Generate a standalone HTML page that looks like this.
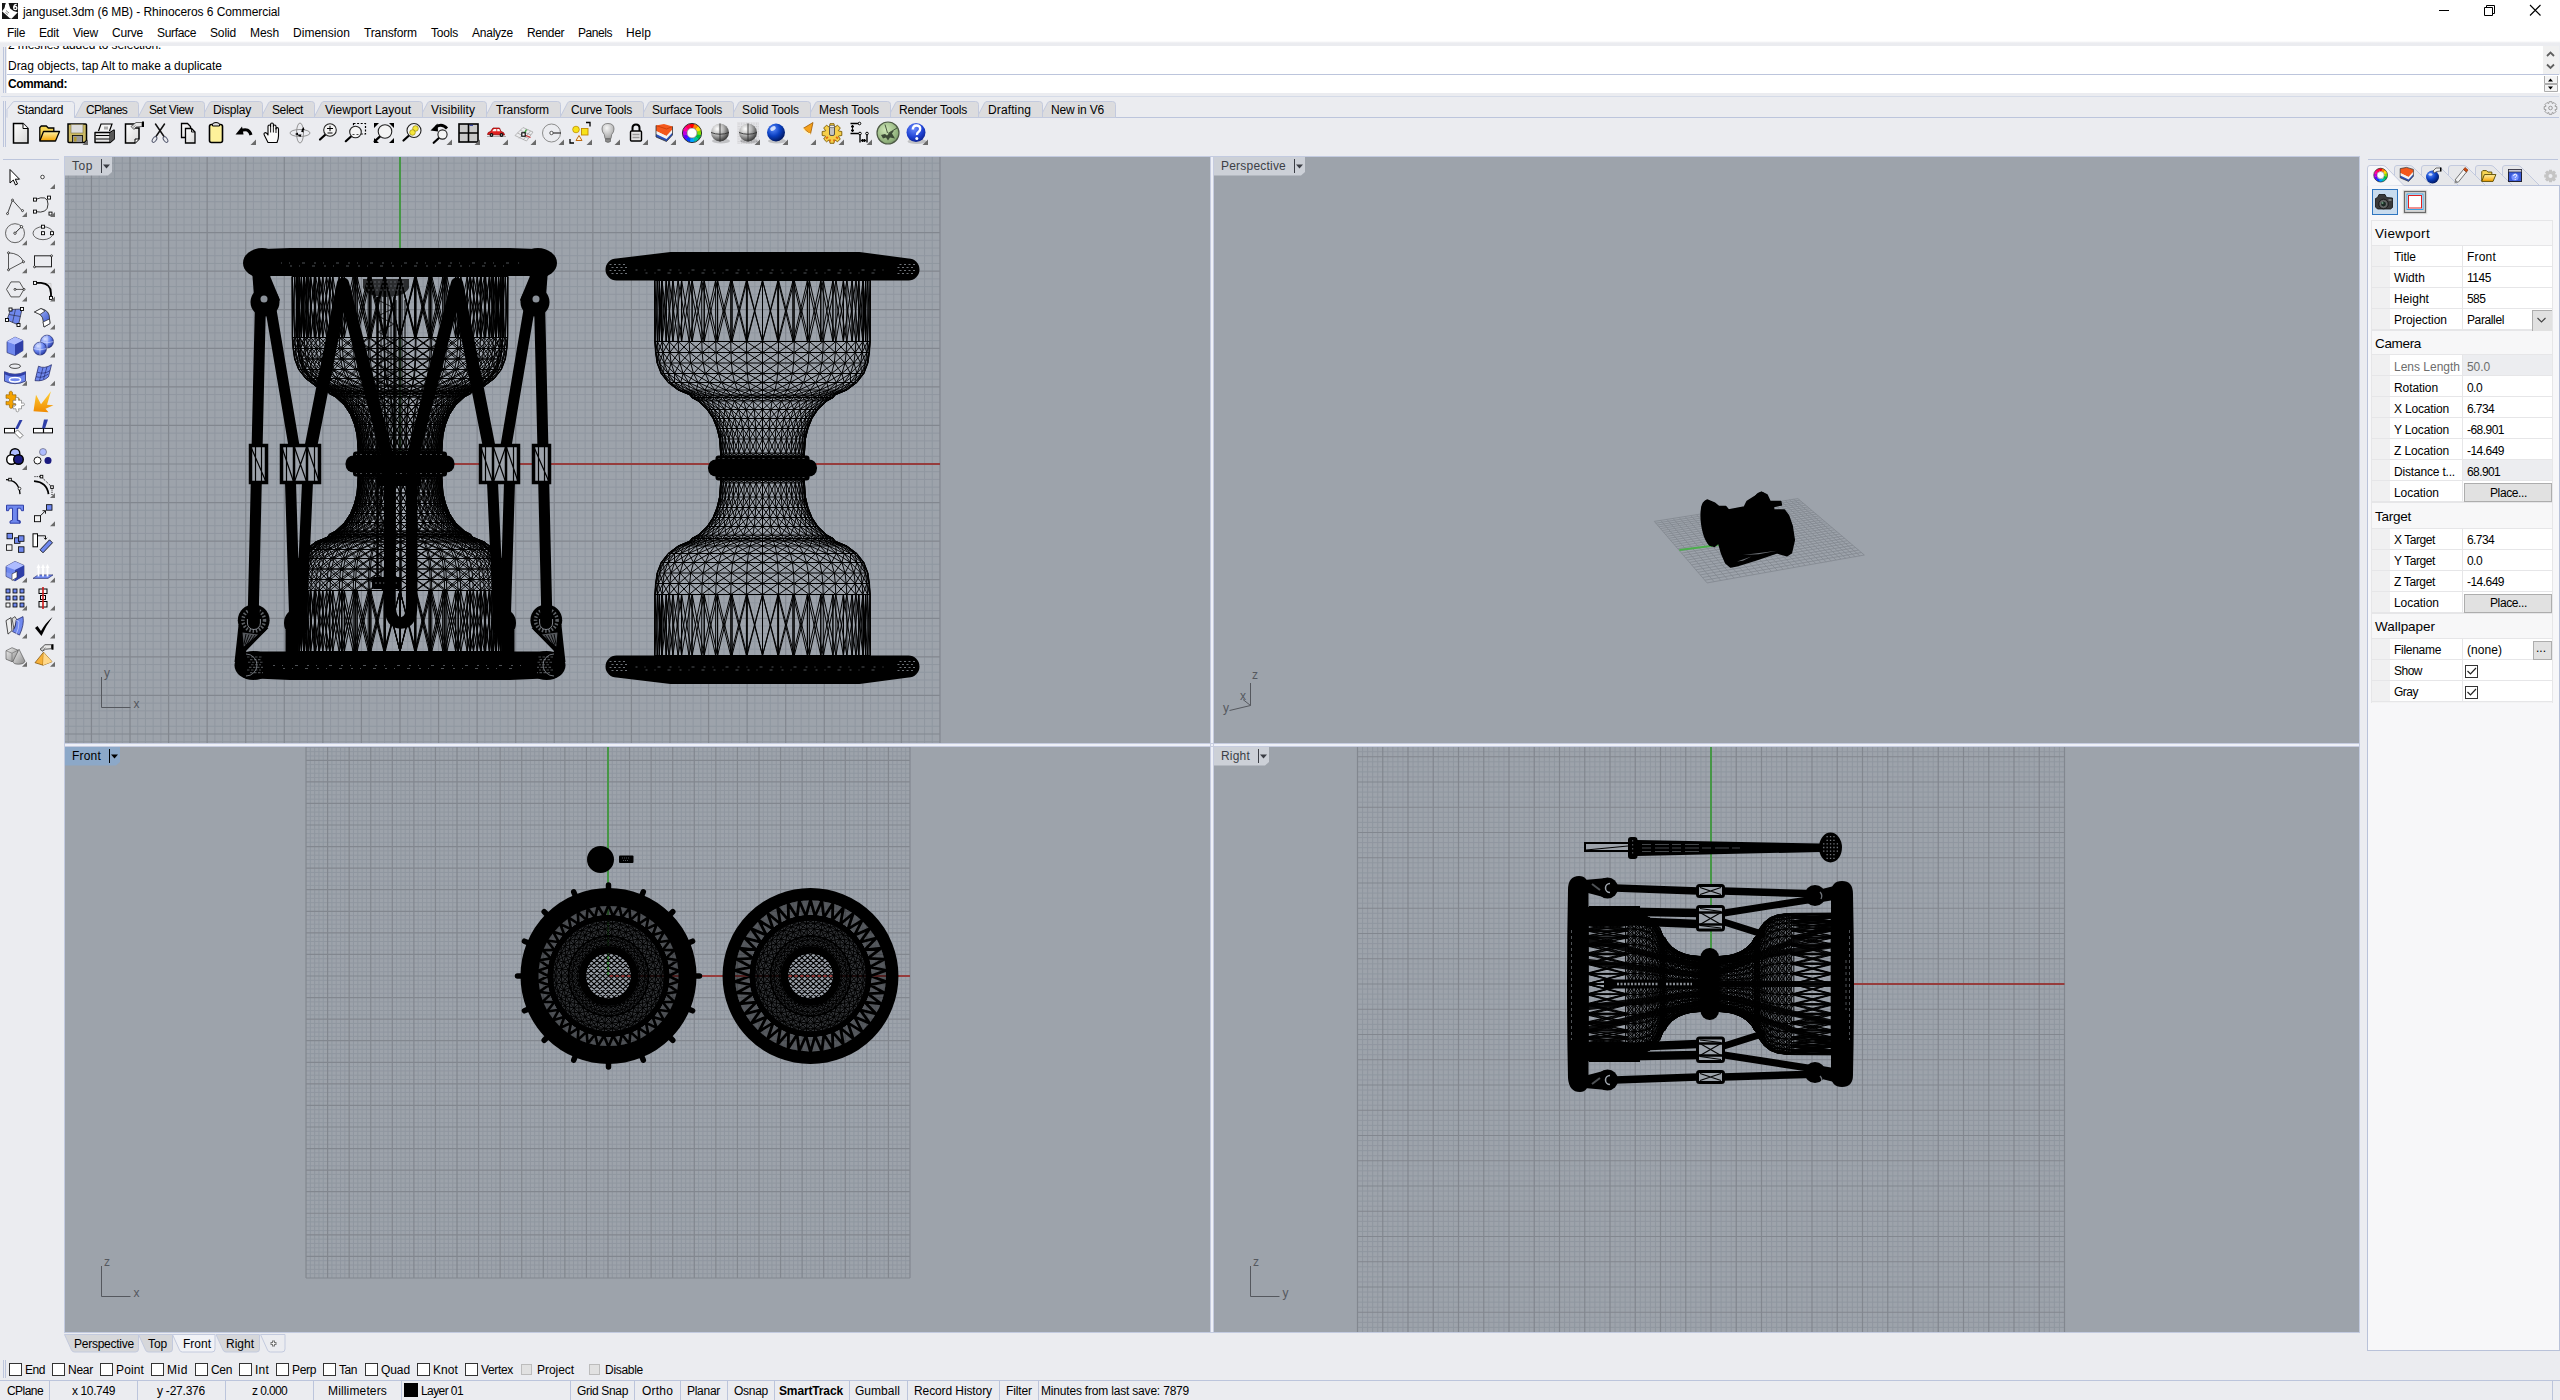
<!DOCTYPE html>
<html><head><meta charset="utf-8"><title>janguset.3dm - Rhinoceros 6</title>
<style>
html,body{margin:0;padding:0}
body{width:2560px;height:1400px;overflow:hidden;background:#ebecf0;position:relative;font-family:"Liberation Sans",sans-serif;font-size:12px;color:#000}
.t{position:absolute;white-space:nowrap;line-height:15px;height:15px}
svg{display:block}
</style></head><body>

<div style="position:absolute;left:0px;top:0px;width:2560px;height:41px;background:#fff;"></div>
<div style="position:absolute;left:0px;top:41px;width:2560px;height:2px;background:linear-gradient(#fff,#ebecf0);"></div>
<div style="position:absolute;left:7px;top:46px;width:2536px;height:47px;background:#fff;"></div>
<div style="position:absolute;left:3px;top:47px;width:1px;height:46px;background:#bcc5dc;"></div>
<div style="position:absolute;left:5px;top:47px;width:1px;height:46px;background:#bcc5dc;"></div>
<div style="position:absolute;left:7px;top:74px;width:2552px;height:1px;background:#bcc5dc;"></div>
<div style="position:absolute;left:2543px;top:46px;width:16px;height:28px;background:#f0f0f0;"></div>
<div style="position:absolute;left:2543px;top:75px;width:17px;height:18px;background:#fff;"></div>
<div style="position:absolute;left:1px;top:96px;width:2558px;height:1px;background:#d5dbe8;"></div>
<div style="position:absolute;left:3px;top:101px;width:1px;height:46px;background:#bcc5dc;"></div>
<div style="position:absolute;left:5px;top:101px;width:1px;height:46px;background:#bcc5dc;"></div>
<div style="position:absolute;left:7px;top:117px;width:2552px;height:1px;background:#bcc5dc;"></div>
<div style="position:absolute;left:3px;top:159px;width:56px;height:1px;background:#bcc5dc;"></div>
<div style="position:absolute;left:2368px;top:159px;width:190px;height:1px;background:#bcc5dc;"></div>
<div style="position:absolute;left:64px;top:156px;width:2296px;height:1177px;background:#c3cbe0;"></div>
<div style="position:absolute;left:65px;top:157px;width:2294px;height:1175px;background:#eef0f7;"></div>
<div style="position:absolute;left:0px;top:1380px;width:2560px;height:1px;background:#bcc5dc;"></div>
<div style="position:absolute;left:49px;top:1381px;width:1px;height:19px;background:#bcc5dc;"></div>
<div style="position:absolute;left:137px;top:1381px;width:1px;height:19px;background:#bcc5dc;"></div>
<div style="position:absolute;left:225px;top:1381px;width:1px;height:19px;background:#bcc5dc;"></div>
<div style="position:absolute;left:313px;top:1381px;width:1px;height:19px;background:#bcc5dc;"></div>
<div style="position:absolute;left:401px;top:1381px;width:1px;height:19px;background:#bcc5dc;"></div>
<div style="position:absolute;left:570px;top:1381px;width:1px;height:19px;background:#bcc5dc;"></div>
<div style="position:absolute;left:634px;top:1381px;width:1px;height:19px;background:#bcc5dc;"></div>
<div style="position:absolute;left:680px;top:1381px;width:1px;height:19px;background:#bcc5dc;"></div>
<div style="position:absolute;left:727px;top:1381px;width:1px;height:19px;background:#bcc5dc;"></div>
<div style="position:absolute;left:774px;top:1381px;width:1px;height:19px;background:#bcc5dc;"></div>
<div style="position:absolute;left:849px;top:1381px;width:1px;height:19px;background:#bcc5dc;"></div>
<div style="position:absolute;left:907px;top:1381px;width:1px;height:19px;background:#bcc5dc;"></div>
<div style="position:absolute;left:999px;top:1381px;width:1px;height:19px;background:#bcc5dc;"></div>
<div style="position:absolute;left:1038px;top:1381px;width:1px;height:19px;background:#bcc5dc;"></div>
<div style="position:absolute;left:2552px;top:1381px;width:1px;height:19px;background:#bcc5dc;"></div>
<div style="position:absolute;left:404px;top:1383px;width:14px;height:14px;background:#000;"></div>
<div style="position:absolute;left:3px;top:1360px;width:1px;height:18px;background:#bcc5dc;"></div>
<div style="position:absolute;left:5px;top:1360px;width:1px;height:18px;background:#bcc5dc;"></div>
<div style="position:absolute;left:9px;top:1363px;width:11px;height:11px;background:#fff;border:1px solid #333"></div>
<div style="position:absolute;left:52px;top:1363px;width:11px;height:11px;background:#fff;border:1px solid #333"></div>
<div style="position:absolute;left:100px;top:1363px;width:11px;height:11px;background:#fff;border:1px solid #333"></div>
<div style="position:absolute;left:151px;top:1363px;width:11px;height:11px;background:#fff;border:1px solid #333"></div>
<div style="position:absolute;left:195px;top:1363px;width:11px;height:11px;background:#fff;border:1px solid #333"></div>
<div style="position:absolute;left:239px;top:1363px;width:11px;height:11px;background:#fff;border:1px solid #333"></div>
<div style="position:absolute;left:276px;top:1363px;width:11px;height:11px;background:#fff;border:1px solid #333"></div>
<div style="position:absolute;left:323px;top:1363px;width:11px;height:11px;background:#fff;border:1px solid #333"></div>
<div style="position:absolute;left:365px;top:1363px;width:11px;height:11px;background:#fff;border:1px solid #333"></div>
<div style="position:absolute;left:417px;top:1363px;width:11px;height:11px;background:#fff;border:1px solid #333"></div>
<div style="position:absolute;left:465px;top:1363px;width:11px;height:11px;background:#fff;border:1px solid #333"></div>
<div style="position:absolute;left:521px;top:1364px;width:9px;height:9px;background:#e1e1e1;border:1px solid #bcbcbc"></div>
<div style="position:absolute;left:589px;top:1364px;width:9px;height:9px;background:#e1e1e1;border:1px solid #bcbcbc"></div>
<svg style="position:absolute;left:0;top:0" width="2560" height="1400" viewBox="0 0 2560 1400" fill="none" font-family="Liberation Sans, sans-serif">
<defs><clipPath id="cT"><rect x="65" y="157" width="1145" height="586"/></clipPath><clipPath id="cP"><rect x="1214" y="157" width="1145" height="586"/></clipPath><clipPath id="cF"><rect x="65" y="747" width="1145" height="585"/></clipPath><clipPath id="cR"><rect x="1214" y="747" width="1145" height="585"/></clipPath></defs>
<rect x="65" y="157" width="1145" height="586" fill="#9da3ab"/>
<rect x="1214" y="157" width="1145" height="586" fill="#9da3ab"/>
<rect x="65" y="747" width="1145" height="585" fill="#9da3ab"/>
<rect x="1214" y="747" width="1145" height="585" fill="#9da3ab"/>
<g clip-path="url(#cT)"><path d="M68.30 157.0V743.0M76.01 157.0V743.0M83.73 157.0V743.0M99.15 157.0V743.0M65.0 163.15H940.0M106.87 157.0V743.0M65.0 170.87H940.0M114.58 157.0V743.0M65.0 178.58H940.0M122.30 157.0V743.0M65.0 186.30H940.0M137.72 157.0V743.0M65.0 201.72H940.0M145.44 157.0V743.0M65.0 209.44H940.0M153.15 157.0V743.0M65.0 217.15H940.0M160.87 157.0V743.0M65.0 224.87H940.0M176.29 157.0V743.0M65.0 240.29H940.0M184.01 157.0V743.0M65.0 248.01H940.0M191.72 157.0V743.0M65.0 255.72H940.0M199.44 157.0V743.0M65.0 263.44H940.0M214.86 157.0V743.0M65.0 278.86H940.0M222.58 157.0V743.0M65.0 286.58H940.0M230.29 157.0V743.0M65.0 294.29H940.0M238.01 157.0V743.0M65.0 302.01H940.0M253.43 157.0V743.0M65.0 317.43H940.0M261.15 157.0V743.0M65.0 325.15H940.0M268.86 157.0V743.0M65.0 332.86H940.0M276.58 157.0V743.0M65.0 340.58H940.0M292.00 157.0V743.0M65.0 356.00H940.0M299.72 157.0V743.0M65.0 363.72H940.0M307.43 157.0V743.0M65.0 371.43H940.0M315.15 157.0V743.0M65.0 379.15H940.0M330.57 157.0V743.0M65.0 394.57H940.0M338.29 157.0V743.0M65.0 402.29H940.0M346.00 157.0V743.0M65.0 410.00H940.0M353.72 157.0V743.0M65.0 417.72H940.0M369.14 157.0V743.0M65.0 433.14H940.0M376.86 157.0V743.0M65.0 440.86H940.0M384.57 157.0V743.0M65.0 448.57H940.0M392.29 157.0V743.0M65.0 456.29H940.0M407.71 157.0V743.0M65.0 471.71H940.0M415.43 157.0V743.0M65.0 479.43H940.0M423.14 157.0V743.0M65.0 487.14H940.0M430.86 157.0V743.0M65.0 494.86H940.0M446.28 157.0V743.0M65.0 510.28H940.0M454.00 157.0V743.0M65.0 518.00H940.0M461.71 157.0V743.0M65.0 525.71H940.0M469.43 157.0V743.0M65.0 533.43H940.0M484.85 157.0V743.0M65.0 548.85H940.0M492.57 157.0V743.0M65.0 556.57H940.0M500.28 157.0V743.0M65.0 564.28H940.0M508.00 157.0V743.0M65.0 572.00H940.0M523.42 157.0V743.0M65.0 587.42H940.0M531.14 157.0V743.0M65.0 595.14H940.0M538.85 157.0V743.0M65.0 602.85H940.0M546.57 157.0V743.0M65.0 610.57H940.0M561.99 157.0V743.0M65.0 625.99H940.0M569.71 157.0V743.0M65.0 633.71H940.0M577.42 157.0V743.0M65.0 641.42H940.0M585.14 157.0V743.0M65.0 649.14H940.0M600.56 157.0V743.0M65.0 664.56H940.0M608.28 157.0V743.0M65.0 672.28H940.0M615.99 157.0V743.0M65.0 679.99H940.0M623.71 157.0V743.0M65.0 687.71H940.0M639.13 157.0V743.0M65.0 703.13H940.0M646.85 157.0V743.0M65.0 710.85H940.0M654.56 157.0V743.0M65.0 718.56H940.0M662.28 157.0V743.0M65.0 726.28H940.0M677.70 157.0V743.0M65.0 741.70H940.0M685.42 157.0V743.0M693.13 157.0V743.0M700.85 157.0V743.0M716.27 157.0V743.0M723.99 157.0V743.0M731.70 157.0V743.0M739.42 157.0V743.0M754.84 157.0V743.0M762.56 157.0V743.0M770.27 157.0V743.0M777.99 157.0V743.0M793.41 157.0V743.0M801.13 157.0V743.0M808.84 157.0V743.0M816.56 157.0V743.0M831.98 157.0V743.0M839.70 157.0V743.0M847.41 157.0V743.0M855.13 157.0V743.0M870.55 157.0V743.0M878.27 157.0V743.0M885.98 157.0V743.0M893.70 157.0V743.0M909.12 157.0V743.0M916.84 157.0V743.0M924.55 157.0V743.0M932.27 157.0V743.0" stroke="#9097a0" stroke-width="1"/><path d="M91.44 157.0V743.0M130.01 157.0V743.0M65.0 194.01H940.0M168.58 157.0V743.0M65.0 232.58H940.0M207.15 157.0V743.0M65.0 271.15H940.0M245.72 157.0V743.0M65.0 309.72H940.0M284.29 157.0V743.0M65.0 348.29H940.0M322.86 157.0V743.0M65.0 386.86H940.0M361.43 157.0V743.0M65.0 425.43H940.0M400.00 157.0V743.0M65.0 464.00H940.0M438.57 157.0V743.0M65.0 502.57H940.0M477.14 157.0V743.0M65.0 541.14H940.0M515.71 157.0V743.0M65.0 579.71H940.0M554.28 157.0V743.0M65.0 618.28H940.0M592.85 157.0V743.0M65.0 656.85H940.0M631.42 157.0V743.0M65.0 695.42H940.0M669.99 157.0V743.0M65.0 733.99H940.0M708.56 157.0V743.0M747.13 157.0V743.0M785.70 157.0V743.0M824.27 157.0V743.0M862.84 157.0V743.0M901.41 157.0V743.0M939.98 157.0V743.0" stroke="#82878f" stroke-width="1.2"/>
<path d="M400 157V464" stroke="#469646" stroke-width="2"/><path d="M400 464H940.0" stroke="#963c3c" stroke-width="2"/>
<defs><g id="drumbody"><path d="M0-187.5l0 61 0 11 0 10.5 0 10.5 0 9 0 7.5 0 5 0 2.5 0 3.5 0 8.5 0 9 0 10 0 10.5 0 14 0 3M16.1-187.5l0 61-0.2 11-0.2 10.5-0.6 10.5-1 9-1.5 7.5-1.8 5-0.2 2.5-1 3.5-1.3 8.5-0.9 9-0.6 10-0.4 10.5-0.1 14 0 3M-16.1-187.5l0 61 0.2 11 0.2 10.5 0.6 10.5 1 9 1.5 7.5 1.8 5 0.2 2.5 1 3.5 1.3 8.5 0.9 9 0.6 10 0.4 10.5 0.1 14 0 3M31.8-187.5l0 61-0.3 11-0.4 10.5-1.2 10.5-2 9-3 7.5-3.5 5-0.5 2.5-1.9 3.5-2.6 8.5-1.8 9-1.2 10-0.7 10.5-0.3 14 0 3M-31.8-187.5l0 61 0.3 11 0.4 10.5 1.2 10.5 2 9 3 7.5 3.5 5 0.5 2.5 1.9 3.5 2.6 8.5 1.8 9 1.2 10 0.7 10.5 0.3 14 0 3M46.9-187.5l-0.1 61-0.4 11-0.6 10.5-1.8 10.5-3 9-4.3 7.5-5.2 5-0.7 2.5-2.8 3.5-3.9 8.5-2.6 9-1.8 10-1 10.5-0.5 14 0 3M-46.9-187.5l0.1 61 0.4 11 0.6 10.5 1.8 10.5 3 9 4.3 7.5 5.2 5 0.7 2.5 2.8 3.5 3.9 8.5 2.6 9 1.8 10 1 10.5 0.5 14 0 3M60.8-187.5l-0.1 61-0.4 11-0.9 10.5-2.2 10.5-4 9-5.6 7.5-6.8 5-0.8 2.5-3.7 3.5-5 8.5-3.4 9-2.3 10-1.4 10.5-0.5 14 0 3M-60.8-187.5l0.1 61 0.4 11 0.9 10.5 2.2 10.5 4 9 5.6 7.5 6.8 5 0.8 2.5 3.7 3.5 5 8.5 3.4 9 2.3 10 1.4 10.5 0.5 14 0 3M73.5-187.5l-0.2 61-0.5 11-1 10.5-2.8 10.5-4.7 9-6.8 7.5-8.2 5-1 2.5-4.4 3.5-6.2 8.5-4 9-2.8 10-1.7 10.5-0.6 14 0 3M-73.5-187.5l0.2 61 0.5 11 1 10.5 2.8 10.5 4.7 9 6.8 7.5 8.2 5 1 2.5 4.4 3.5 6.2 8.5 4 9 2.8 10 1.7 10.5 0.6 14 0 3M84.4-187.5l-0.1 61-0.6 11-1.2 10.5-3.1 10.5-5.5 9-7.8 7.5-9.4 5-1.2 2.5-5.1 3.5-7 8.5-4.7 9-3.1 10-2 10.5-0.8 14 0 3M-84.4-187.5l0.1 61 0.6 11 1.2 10.5 3.1 10.5 5.5 9 7.8 7.5 9.4 5 1.2 2.5 5.1 3.5 7 8.5 4.7 9 3.1 10 2 10.5 0.8 14 0 3M93.5-187.5l-0.1 61-0.7 11-1.3 10.5-3.5 10.5-6.1 9-8.6 7.5-10.4 5-1.3 2.5-5.6 3.5-7.8 8.5-5.2 9-3.5 10-2.2 10.5-0.8 14 0 3M-93.5-187.5l0.1 61 0.7 11 1.3 10.5 3.5 10.5 6.1 9 8.6 7.5 10.4 5 1.3 2.5 5.6 3.5 7.8 8.5 5.2 9 3.5 10 2.2 10.5 0.8 14 0 3M100.5-187.5l-0.2 61-0.7 11-1.4 10.5-3.7 10.5-6.5 9-9.3 7.5-11.2 5-1.4 2.5-6.1 3.5-8.3 8.5-5.6 9-3.7 10-2.4 10.5-0.9 14 0 3M-100.5-187.5l0.2 61 0.7 11 1.4 10.5 3.7 10.5 6.5 9 9.3 7.5 11.2 5 1.4 2.5 6.1 3.5 8.3 8.5 5.6 9 3.7 10 2.4 10.5 0.9 14 0 3M105.3-187.5l-0.2 61-0.8 11-1.4 10.5-3.9 10.5-6.9 9-9.7 7.5-11.7 5-1.5 2.5-6.3 3.5-8.8 8.5-5.8 9-3.9 10-2.5 10.5-1 14 0 3M-105.3-187.5l0.2 61 0.8 11 1.4 10.5 3.9 10.5 6.9 9 9.7 7.5 11.7 5 1.5 2.5 6.3 3.5 8.8 8.5 5.8 9 3.9 10 2.5 10.5 1 14 0 3M107.7-187.5l-0.2 61-0.8 11-1.5 10.5-4 10.5-7 9-9.9 7.5-12 5-1.5 2.5-6.5 3.5-9 8.5-5.9 9-4 10-2.5 10.5-1 14 0 3M-107.7-187.5l0.2 61 0.8 11 1.5 10.5 4 10.5 7 9 9.9 7.5 12 5 1.5 2.5 6.5 3.5 9 8.5 5.9 9 4 10 2.5 10.5 1 14 0 3M0-187.5l16.1 61 15.4 11 14.3 10.5 11.4 10.5 7.1 9 1.8 7.5-3.3 5 3.3 2.5-3.2 3.5-7.6 8.5-5.9 9-5 10-4.4 10.5-3.6 14-3.6 3M16.1-187.5l15.7 61 14.6 11 13 10.5 9.6 10.5 4.9 9-0.7 7.5-5.7 5 1.7 2.5-4.9 3.5-9 8.5-7 9-5.9 10-5.2 10.5-4.4 14-4.2 3M31.8-187.5l15 61 13.5 11 11.5 10.5 7.6 10.5 2.4 9-3.1 7.5-8 5 0.1 2.5-6.5 3.5-10.2 8.5-8 9-6.7 10-5.8 10.5-5 14-4.9 3M46.9-187.5l13.8 61 12.1 11 9.7 10.5 5.4 10.5 0.1 9-5.6 7.5-10.1 5-1.5 2.5-7.9 3.5-11.2 8.5-8.8 9-7.3 10-6.4 10.5-5.5 14-5.5 3M60.8-187.5l12.5 61 10.4 11 7.7 10.5 3.1 10.5-2.4 9-7.8 7.5-12 5-3.1 2.5-9.2 3.5-11.9 8.5-9.4 9-7.8 10-6.7 10.5-6 14-5.8 3M73.5-187.5l10.8 61 8.4 11 5.5 10.5 0.8 10.5-4.8 9-9.9 7.5-13.6 5-4.6 2.5-10.2 3.5-12.5 8.5-9.7 9-8.1 10-6.9 10.5-6.3 14-6.1 3M84.4-187.5l9 61 6.2 11 3.3 10.5-1.7 10.5-7 9-11.8 7.5-14.9 5-6 2.5-11.1 3.5-12.7 8.5-9.8 9-8.2 10-7 10.5-6.4 14-6.3 3M93.5-187.5l6.8 61 4 11 0.9 10.5-4 10.5-9.1 9-13.4 7.5-15.9 5-7.3 2.5-11.6 3.5-12.6 8.5-9.8 9-8.1 10-7 10.5-6.4 14-6.3 3M100.5-187.5l4.6 61 1.6 11-1.5 10.5-6.2 10.5-11 9-14.8 7.5-16.5 5-8.4 2.5-12 3.5-12.2 8.5-9.5 9-7.8 10-6.8 10.5-6.3 14-6.1 3M105.3-187.5l2.2 61-0.8 11-3.8 10.5-8.4 10.5-12.7 9-15.7 7.5-16.8 5-9.3 2.5-12 3.5-11.6 8.5-9 9-7.4 10-6.4 10.5-6 14-5.8 3M107.7-187.5l-0.2 61-3.2 11-6.1 10.5-10.3 10.5-14 9-16.4 7.5-16.7 5-10 2.5-11.8 3.5-10.7 8.5-8.3 9-6.8 10-5.9 10.5-5.5 14-5.5 3M107.7-187.5l-2.6 61-5.5 11-8.2 10.5-12 10.5-15.1 9-16.7 7.5-16.1 5-10.6 2.5-11.3 3.5-9.6 8.5-7.4 9-6 10-5.3 10.5-5 14-4.9 3M105.3-187.5l-5 61-7.6 11-10.2 10.5-13.5 10.5-15.8 9-16.5 7.5-15.3 5-10.8 2.5-10.6 3.5-8.3 8.5-6.3 9-5.1 10-4.5 10.5-4.4 14-4.2 3M100.5-187.5l-7.1 61-9.7 11-11.9 10.5-14.6 10.5-16.2 9-16.1 7.5-14.1 5-10.8 2.5-9.6 3.5-6.8 8.5-5.1 9-4.1 10-3.6 10.5-3.6 14-3.6 3M93.5-187.5l-9.2 61-11.5 11-13.4 10.5-15.4 10.5-16.1 9-15.3 7.5-12.6 5-10.6 2.5-8.4 3.5-5.1 8.5-3.8 9-3 10-2.7 10.5-2.8 14-2.7 3M84.4-187.5l-11.1 61-13 11-14.5 10.5-15.9 10.5-15.8 9-14.1 7.5-10.8 5-10.1 2.5-7.1 3.5-3.3 8.5-2.4 9-1.9 10-1.6 10.5-1.9 14-1.8 3M73.5-187.5l-12.8 61-14.3 11-15.3 10.5-16 10.5-15.1 9-12.6 7.5-8.8 5-9.4 2.5-5.5 3.5-1.4 8.5-1 9-0.7 10-0.6 10.5-0.9 14-1 3M60.8-187.5l-14 61-15.3 11-15.8 10.5-15.7 10.5-14.1 9-10.8 7.5-6.6 5-8.5 2.5-3.9 3.5 0.5 8.5 0.5 9 0.5 10 0.5 10.5 0 14 0 3M46.9-187.5l-15.1 61-15.9 11-15.9 10.5-15.1 10.5-12.8 9-8.8 7.5-4.1 5-7.5 2.5-2.1 3.5 2.3 8.5 2 9 1.7 10 1.5 10.5 1 14 1 3M31.8-187.5l-15.7 61-16.1 11-15.7 10.5-14.2 10.5-11.1 9-6.6 7.5-1.7 5-6.2 2.5-0.4 3.5 4.2 8.5 3.4 9 2.9 10 2.5 10.5 2 14 1.8 3M16.1-187.5l-16.1 61-15.9 11-15.2 10.5-12.9 10.5-9.2 9-4.3 7.5 0.8 5-4.8 2.5 1.5 3.5 5.9 8.5 4.7 9 4 10 3.5 10.5 2.8 14 2.7 3M0-187.5l-16.1 61-15.4 11-14.3 10.5-11.4 10.5-7.1 9-1.8 7.5 3.3 5-3.3 2.5 3.2 3.5 7.6 8.5 5.9 9 5 10 4.4 10.5 3.6 14 3.6 3M-16.1-187.5l-15.7 61-14.6 11-13 10.5-9.6 10.5-4.9 9 0.7 7.5 5.7 5-1.7 2.5 4.9 3.5 9 8.5 7 9 5.9 10 5.2 10.5 4.4 14 4.2 3M-31.8-187.5l-15 61-13.5 11-11.5 10.5-7.6 10.5-2.4 9 3.1 7.5 8 5-0.1 2.5 6.5 3.5 10.2 8.5 8 9 6.7 10 5.8 10.5 5 14 4.9 3M-46.9-187.5l-13.8 61-12.1 11-9.7 10.5-5.4 10.5-0.1 9 5.6 7.5 10.1 5 1.5 2.5 7.9 3.5 11.2 8.5 8.8 9 7.3 10 6.4 10.5 5.5 14 5.5 3M-60.8-187.5l-12.5 61-10.4 11-7.7 10.5-3.1 10.5 2.4 9 7.8 7.5 12 5 3.1 2.5 9.2 3.5 11.9 8.5 9.4 9 7.8 10 6.7 10.5 6 14 5.8 3M-73.5-187.5l-10.8 61-8.4 11-5.5 10.5-0.8 10.5 4.8 9 9.9 7.5 13.6 5 4.6 2.5 10.2 3.5 12.5 8.5 9.7 9 8.1 10 6.9 10.5 6.3 14 6.1 3M-84.4-187.5l-9 61-6.2 11-3.3 10.5 1.7 10.5 7 9 11.8 7.5 14.9 5 6 2.5 11.1 3.5 12.7 8.5 9.8 9 8.2 10 7 10.5 6.4 14 6.3 3M-93.5-187.5l-6.8 61-4 11-0.9 10.5 4 10.5 9.1 9 13.4 7.5 15.9 5 7.3 2.5 11.6 3.5 12.6 8.5 9.8 9 8.1 10 7 10.5 6.4 14 6.3 3M-100.5-187.5l-4.6 61-1.6 11 1.5 10.5 6.2 10.5 11 9 14.8 7.5 16.5 5 8.4 2.5 12 3.5 12.2 8.5 9.5 9 7.8 10 6.8 10.5 6.3 14 6.1 3M-105.3-187.5l-2.2 61 0.8 11 3.8 10.5 8.4 10.5 12.7 9 15.7 7.5 16.8 5 9.3 2.5 12 3.5 11.6 8.5 9 9 7.4 10 6.4 10.5 6 14 5.8 3M-107.7-187.5l0.2 61 3.2 11 6.1 10.5 10.3 10.5 14 9 16.4 7.5 16.7 5 10 2.5 11.8 3.5 10.7 8.5 8.3 9 6.8 10 5.9 10.5 5.5 14 5.5 3M-107.7-187.5l2.6 61 5.5 11 8.2 10.5 12 10.5 15.1 9 16.7 7.5 16.1 5 10.6 2.5 11.3 3.5 9.6 8.5 7.4 9 6 10 5.3 10.5 5 14 4.9 3M-105.3-187.5l5 61 7.6 11 10.2 10.5 13.5 10.5 15.8 9 16.5 7.5 15.3 5 10.8 2.5 10.6 3.5 8.3 8.5 6.3 9 5.1 10 4.5 10.5 4.4 14 4.2 3M-100.5-187.5l7.1 61 9.7 11 11.9 10.5 14.6 10.5 16.2 9 16.1 7.5 14.1 5 10.8 2.5 9.6 3.5 6.8 8.5 5.1 9 4.1 10 3.6 10.5 3.6 14 3.6 3M-93.5-187.5l9.2 61 11.5 11 13.4 10.5 15.4 10.5 16.1 9 15.3 7.5 12.6 5 10.6 2.5 8.4 3.5 5.1 8.5 3.8 9 3 10 2.7 10.5 2.8 14 2.7 3M-84.4-187.5l11.1 61 13 11 14.5 10.5 15.9 10.5 15.8 9 14.1 7.5 10.8 5 10.1 2.5 7.1 3.5 3.3 8.5 2.4 9 1.9 10 1.6 10.5 1.9 14 1.8 3M-73.5-187.5l12.8 61 14.3 11 15.3 10.5 16 10.5 15.1 9 12.6 7.5 8.8 5 9.4 2.5 5.5 3.5 1.4 8.5 1 9 0.7 10 0.6 10.5 0.9 14 1 3M-60.8-187.5l14 61 15.3 11 15.8 10.5 15.7 10.5 14.1 9 10.8 7.5 6.6 5 8.5 2.5 3.9 3.5-0.5 8.5-0.5 9-0.5 10-0.5 10.5 0 14 0 3M-46.9-187.5l15.1 61 15.9 11 15.9 10.5 15.1 10.5 12.8 9 8.8 7.5 4.1 5 7.5 2.5 2.1 3.5-2.3 8.5-2 9-1.7 10-1.5 10.5-1 14-1 3M-31.8-187.5l15.7 61 16.1 11 15.7 10.5 14.2 10.5 11.1 9 6.6 7.5 1.7 5 6.2 2.5 0.4 3.5-4.2 8.5-3.4 9-2.9 10-2.5 10.5-2 14-1.8 3M-16.1-187.5l16.1 61 15.9 11 15.2 10.5 12.9 10.5 9.2 9 4.3 7.5-0.8 5 4.8 2.5-1.5 3.5-5.9 8.5-4.7 9-4 10-3.5 10.5-2.8 14-2.7 3M-108 -187.5h216M-107.8 -126.5h215.6M-107 -115.5h214M-105.5 -105h211M-101.5 -94.5h203M-94.5 -85.5h189M-84.5 -78h169M-72.5 -73h145M-71 -70.5h142M-64.5 -67h129M-55.5 -58.5h111M-49.5 -49.5h99M-45.5 -39.5h91M-43 -29h86M-42 -15h84M-42 -12h84M108-187.5l-0.2 61-0.8 11-1.5 10.5-4 10.5-7 9-10 7.5-12 5-1.5 2.5-6.5 3.5-9 8.5-6 9-4 10-2.5 10.5-1 14 0 3M-108-187.5l0.2 61 0.8 11 1.5 10.5 4 10.5 7 9 10 7.5 12 5 1.5 2.5 6.5 3.5 9 8.5 6 9 4 10 2.5 10.5 1 14 0 3M0 -187.5V-126.5M0 -187.5L15.4 -126.5M15.4 -187.5V-126.5M15.4 -187.5L30.5 -126.5M30.5 -187.5V-126.5M30.5 -187.5L44.9 -126.5M44.9 -187.5V-126.5M44.9 -187.5L58.3 -126.5M58.3 -187.5V-126.5M58.3 -187.5L70.4 -126.5M70.4 -187.5V-126.5M70.4 -187.5L80.9 -126.5M80.9 -187.5V-126.5M80.9 -187.5L89.6 -126.5M89.6 -187.5V-126.5M89.6 -187.5L96.3 -126.5M96.3 -187.5V-126.5M96.3 -187.5L100.9 -126.5M100.9 -187.5V-126.5M100.9 -187.5L103.2 -126.5M103.2 -187.5V-126.5M103.2 -187.5L103.2 -126.5M103.2 -187.5V-126.5M103.2 -187.5L100.9 -126.5M100.9 -187.5V-126.5M100.9 -187.5L96.3 -126.5M96.3 -187.5V-126.5M96.3 -187.5L89.6 -126.5M89.6 -187.5V-126.5M89.6 -187.5L80.9 -126.5M80.9 -187.5V-126.5M80.9 -187.5L70.4 -126.5M70.4 -187.5V-126.5M70.4 -187.5L58.3 -126.5M58.3 -187.5V-126.5M58.3 -187.5L44.9 -126.5M44.9 -187.5V-126.5M44.9 -187.5L30.5 -126.5M30.5 -187.5V-126.5M30.5 -187.5L15.4 -126.5M15.4 -187.5V-126.5M15.4 -187.5L0 -126.5M0 -187.5V-126.5M0 -187.5L-15.4 -126.5M-15.4 -187.5V-126.5M-15.4 -187.5L-30.5 -126.5M-30.5 -187.5V-126.5M-30.5 -187.5L-44.9 -126.5M-44.9 -187.5V-126.5M-44.9 -187.5L-58.3 -126.5M-58.3 -187.5V-126.5M-58.3 -187.5L-70.4 -126.5M-70.4 -187.5V-126.5M-70.4 -187.5L-80.9 -126.5M-80.9 -187.5V-126.5M-80.9 -187.5L-89.6 -126.5M-89.6 -187.5V-126.5M-89.6 -187.5L-96.3 -126.5M-96.3 -187.5V-126.5M-96.3 -187.5L-100.9 -126.5M-100.9 -187.5V-126.5M-100.9 -187.5L-103.2 -126.5M-103.2 -187.5V-126.5M-103.2 -187.5L-103.2 -126.5M-103.2 -187.5V-126.5M-103.2 -187.5L-100.9 -126.5M-100.9 -187.5V-126.5M-100.9 -187.5L-96.3 -126.5M-96.3 -187.5V-126.5M-96.3 -187.5L-89.6 -126.5M-89.6 -187.5V-126.5M-89.6 -187.5L-80.9 -126.5M-80.9 -187.5V-126.5M-80.9 -187.5L-70.4 -126.5M-70.4 -187.5V-126.5M-70.4 -187.5L-58.3 -126.5M-58.3 -187.5V-126.5M-58.3 -187.5L-44.9 -126.5M-44.9 -187.5V-126.5M-44.9 -187.5L-30.5 -126.5M-30.5 -187.5V-126.5M-30.5 -187.5L-15.4 -126.5M-15.4 -187.5V-126.5M-15.4 -187.5L0 -126.5M0 12l0 3 0 14 0 10.5 0 10 0 9 0 8.5 0 3.5 0 2.5 0 5 0 7.5 0 9 0 10.5 0 10.5 0 11 0 61M6.3 12l0 3 0.1 14 0.4 10.5 0.6 10 0.9 9 1.3 8.5 1 3.5 0.2 2.5 1.8 5 1.5 7.5 1 9 0.6 10.5 0.2 10.5 0.2 11 0 61M-6.3 12l0 3-0.1 14-0.4 10.5-0.6 10-0.9 9-1.3 8.5-1 3.5-0.2 2.5-1.8 5-1.5 7.5-1 9-0.6 10.5-0.2 10.5-0.2 11 0 61M12.4 12l0 3 0.3 14 0.7 10.5 1.2 10 1.8 9 2.6 8.5 1.9 3.5 0.5 2.5 3.5 5 3 7.5 2 9 1.2 10.5 0.4 10.5 0.3 11 0 61M-12.4 12l0 3-0.3 14-0.7 10.5-1.2 10-1.8 9-2.6 8.5-1.9 3.5-0.5 2.5-3.5 5-3 7.5-2 9-1.2 10.5-0.4 10.5-0.3 11 0 61M18.2 12l0 3 0.5 14 1 10.5 1.8 10 2.6 9 3.9 8.5 2.8 3.5 0.7 2.5 5.2 5 4.3 7.5 3 9 1.8 10.5 0.6 10.5 0.4 11 0.1 61M-18.2 12l0 3-0.5 14-1 10.5-1.8 10-2.6 9-3.9 8.5-2.8 3.5-0.7 2.5-5.2 5-4.3 7.5-3 9-1.8 10.5-0.6 10.5-0.4 11-0.1 61M23.7 12l0 3 0.5 14 1.4 10.5 2.3 10 3.4 9 5 8.5 3.7 3.5 0.8 2.5 6.8 5 5.6 7.5 4 9 2.2 10.5 0.9 10.5 0.4 11 0.1 61M-23.7 12l0 3-0.5 14-1.4 10.5-2.3 10-3.4 9-5 8.5-3.7 3.5-0.8 2.5-6.8 5-5.6 7.5-4 9-2.2 10.5-0.9 10.5-0.4 11-0.1 61M28.6 12l0 3 0.6 14 1.7 10.5 2.8 10 4 9 6.2 8.5 4.4 3.5 1 2.5 8.2 5 6.8 7.5 4.7 9 2.8 10.5 1 10.5 0.5 11 0.2 61M-28.6 12l0 3-0.6 14-1.7 10.5-2.8 10-4 9-6.2 8.5-4.4 3.5-1 2.5-8.2 5-6.8 7.5-4.7 9-2.8 10.5-1 10.5-0.5 11-0.2 61M32.8 12l0 3 0.8 14 2 10.5 3.1 10 4.7 9 7 8.5 5.1 3.5 1.2 2.5 9.4 5 7.8 7.5 5.5 9 3.1 10.5 1.2 10.5 0.6 11 0.1 61M-32.8 12l0 3-0.8 14-2 10.5-3.1 10-4.7 9-7 8.5-5.1 3.5-1.2 2.5-9.4 5-7.8 7.5-5.5 9-3.1 10.5-1.2 10.5-0.6 11-0.1 61M36.4 12l0 3 0.8 14 2.2 10.5 3.5 10 5.2 9 7.8 8.5 5.6 3.5 1.3 2.5 10.4 5 8.6 7.5 6.1 9 3.5 10.5 1.3 10.5 0.7 11 0.1 61M-36.4 12l0 3-0.8 14-2.2 10.5-3.5 10-5.2 9-7.8 8.5-5.6 3.5-1.3 2.5-10.4 5-8.6 7.5-6.1 9-3.5 10.5-1.3 10.5-0.7 11-0.1 61M39.1 12l0 3 0.9 14 2.4 10.5 3.7 10 5.6 9 8.3 8.5 6.1 3.5 1.4 2.5 11.2 5 9.3 7.5 6.5 9 3.7 10.5 1.4 10.5 0.7 11 0.2 61M-39.1 12l0 3-0.9 14-2.4 10.5-3.7 10-5.6 9-8.3 8.5-6.1 3.5-1.4 2.5-11.2 5-9.3 7.5-6.5 9-3.7 10.5-1.4 10.5-0.7 11-0.2 61M40.9 12l0 3 1 14 2.5 10.5 3.9 10 5.8 9 8.8 8.5 6.3 3.5 1.5 2.5 11.7 5 9.7 7.5 6.9 9 3.9 10.5 1.4 10.5 0.8 11 0.2 61M-40.9 12l0 3-1 14-2.5 10.5-3.9 10-5.8 9-8.8 8.5-6.3 3.5-1.5 2.5-11.7 5-9.7 7.5-6.9 9-3.9 10.5-1.4 10.5-0.8 11-0.2 61M41.9 12l0 3 1 14 2.5 10.5 4 10 5.9 9 9 8.5 6.5 3.5 1.5 2.5 12 5 9.9 7.5 7 9 4 10.5 1.5 10.5 0.8 11 0.2 61M-41.9 12l0 3-1 14-2.5 10.5-4 10-5.9 9-9 8.5-6.5 3.5-1.5 2.5-12 5-9.9 7.5-7 9-4 10.5-1.5 10.5-0.8 11-0.2 61M0 12l6.3 3 6.4 14 7 10.5 8.2 10 9.8 9 12.7 8.5 11.1 3.5 6 2.5 14.9 5 11.8 7.5 7 9 1.7 10.5-3.3 10.5-6.2 11-9 61M6.3 12l6.1 3 6.3 14 6.9 10.5 8.1 10 9.7 9 12.5 8.5 10.2 3.5 4.6 2.5 13.6 5 9.9 7.5 4.8 9-0.8 10.5-5.5 10.5-8.4 11-10.8 61M12.4 12l5.8 3 6 14 6.7 10.5 7.8 10 9.4 9 11.9 8.5 9.2 3.5 3.1 2.5 12 5 7.8 7.5 2.4 9-3.1 10.5-7.7 10.5-10.4 11-12.5 61M18.2 12l5.5 3 5.5 14 6.4 10.5 7.3 10 8.8 9 11.2 8.5 7.9 3.5 1.5 2.5 10.1 5 5.6 7.5-0.1 9-5.4 10.5-9.7 10.5-12.1 11-13.8 61M23.7 12l4.9 3 5 14 5.8 10.5 6.7 10 8 9 10.2 8.5 6.5 3.5-0.1 2.5 8 5 3.1 7.5-2.4 9-7.6 10.5-11.5 10.5-13.5 11-15 61M28.6 12l4.2 3 4.4 14 5.2 10.5 5.9 10 7 9 9 8.5 4.9 3.5-1.7 2.5 5.7 5 0.7 7.5-4.9 9-9.6 10.5-13 10.5-14.6 11-15.7 61M32.8 12l3.6 3 3.6 14 4.4 10.5 5 10 5.9 9 7.6 8.5 3.2 3.5-3.3 2.5 3.3 5-1.8 7.5-7.1 9-11.4 10.5-14.3 10.5-15.4 11-16.1 61M36.4 12l2.7 3 2.8 14 3.5 10.5 4 10 4.7 9 5.9 8.5 1.5 3.5-4.8 2.5 0.8 5-4.3 7.5-9.2 9-12.9 10.5-15.2 10.5-15.9 11-16.1 61M39.1 12l1.8 3 2 14 2.5 10.5 2.9 10 3.4 9 4.2 8.5-0.4 3.5-6.2 2.5-1.7 5-6.6 7.5-11.1 9-14.2 10.5-15.7 10.5-16.1 11-15.7 61M40.9 12l1 3 1 14 1.5 10.5 1.7 10 2 9 2.3 8.5-2.1 3.5-7.5 2.5-4.1 5-8.8 7.5-12.8 9-15.1 10.5-15.9 10.5-15.9 11-15.1 61M41.9 12l0 3 0 14 0.5 10.5 0.5 10 0.5 9 0.5 8.5-3.9 3.5-8.5 2.5-6.6 5-10.8 7.5-14.1 9-15.7 10.5-15.8 10.5-15.3 11-14 61M41.9 12l-1 3-0.9 14-0.6 10.5-0.7 10-1 9-1.4 8.5-5.5 3.5-9.4 2.5-8.8 5-12.6 7.5-15.1 9-16 10.5-15.3 10.5-14.3 11-12.8 61M40.9 12l-1.8 3-1.9 14-1.6 10.5-1.9 10-2.4 9-3.3 8.5-7.1 3.5-10.1 2.5-10.8 5-14.1 7.5-15.8 9-15.9 10.5-14.5 10.5-13 11-11.1 61M39.1 12l-2.7 3-2.8 14-2.7 10.5-3 10-3.8 9-5.1 8.5-8.4 3.5-10.6 2.5-12.6 5-15.3 7.5-16.1 9-15.4 10.5-13.4 10.5-11.5 11-9.2 61M36.4 12l-3.6 3-3.6 14-3.6 10.5-4.1 10-5.1 9-6.8 8.5-9.6 3.5-10.8 2.5-14.1 5-16.1 7.5-16.2 9-14.6 10.5-11.9 10.5-9.7 11-7.1 61M32.8 12l-4.2 3-4.4 14-4.5 10.5-5.1 10-6.3 9-8.3 8.5-10.6 3.5-10.8 2.5-15.3 5-16.5 7.5-15.8 9-13.5 10.5-10.2 10.5-7.6 11-5 61M28.6 12l-4.9 3-5 14-5.3 10.5-6 10-7.4 9-9.6 8.5-11.3 3.5-10.6 2.5-16.1 5-16.7 7.5-15.1 9-12 10.5-8.2 10.5-5.5 11-2.6 61M23.7 12l-5.5 3-5.5 14-5.9 10.5-6.8 10-8.3 9-10.7 8.5-11.8 3.5-10 2.5-16.7 5-16.4 7.5-14 9-10.3 10.5-6.1 10.5-3.2 11-0.2 61M18.2 12l-5.8 3-6 14-6.4 10.5-7.4 10-9 9-11.6 8.5-12 3.5-9.3 2.5-16.8 5-15.7 7.5-12.7 9-8.4 10.5-3.8 10.5-0.8 11 2.2 61M12.4 12l-6.1 3-6.3 14-6.8 10.5-7.8 10-9.5 9-12.2 8.5-12 3.5-8.4 2.5-16.5 5-14.8 7.5-11 9-6.2 10.5-1.5 10.5 1.6 11 4.6 61M6.3 12l-6.3 3-6.4 14-7 10.5-8.1 10-9.8 9-12.6 8.5-11.6 3.5-7.3 2.5-15.9 5-13.4 7.5-9.1 9-4 10.5 0.9 10.5 4 11 6.8 61M0 12l-6.3 3-6.4 14-7 10.5-8.2 10-9.8 9-12.7 8.5-11.1 3.5-6 2.5-14.9 5-11.8 7.5-7 9-1.7 10.5 3.3 10.5 6.2 11 9 61M-6.3 12l-6.1 3-6.3 14-6.9 10.5-8.1 10-9.7 9-12.5 8.5-10.2 3.5-4.6 2.5-13.6 5-9.9 7.5-4.8 9 0.8 10.5 5.5 10.5 8.4 11 10.8 61M-12.4 12l-5.8 3-6 14-6.7 10.5-7.8 10-9.4 9-11.9 8.5-9.2 3.5-3.1 2.5-12 5-7.8 7.5-2.4 9 3.1 10.5 7.7 10.5 10.4 11 12.5 61M-18.2 12l-5.5 3-5.5 14-6.4 10.5-7.3 10-8.8 9-11.2 8.5-7.9 3.5-1.5 2.5-10.1 5-5.6 7.5 0.1 9 5.4 10.5 9.7 10.5 12.1 11 13.8 61M-23.7 12l-4.9 3-5 14-5.8 10.5-6.7 10-8 9-10.2 8.5-6.5 3.5 0.1 2.5-8 5-3.1 7.5 2.4 9 7.6 10.5 11.5 10.5 13.5 11 15 61M-28.6 12l-4.2 3-4.4 14-5.2 10.5-5.9 10-7 9-9 8.5-4.9 3.5 1.7 2.5-5.7 5-0.7 7.5 4.9 9 9.6 10.5 13 10.5 14.6 11 15.7 61M-32.8 12l-3.6 3-3.6 14-4.4 10.5-5 10-5.9 9-7.6 8.5-3.2 3.5 3.3 2.5-3.3 5 1.8 7.5 7.1 9 11.4 10.5 14.3 10.5 15.4 11 16.1 61M-36.4 12l-2.7 3-2.8 14-3.5 10.5-4 10-4.7 9-5.9 8.5-1.5 3.5 4.8 2.5-0.8 5 4.3 7.5 9.2 9 12.9 10.5 15.2 10.5 15.9 11 16.1 61M-39.1 12l-1.8 3-2 14-2.5 10.5-2.9 10-3.4 9-4.2 8.5 0.4 3.5 6.2 2.5 1.7 5 6.6 7.5 11.1 9 14.2 10.5 15.7 10.5 16.1 11 15.7 61M-40.9 12l-1 3-1 14-1.5 10.5-1.7 10-2 9-2.3 8.5 2.1 3.5 7.5 2.5 4.1 5 8.8 7.5 12.8 9 15.1 10.5 15.9 10.5 15.9 11 15.1 61M-41.9 12l0 3 0 14-0.5 10.5-0.5 10-0.5 9-0.5 8.5 3.9 3.5 8.5 2.5 6.6 5 10.8 7.5 14.1 9 15.7 10.5 15.8 10.5 15.3 11 14 61M-41.9 12l1 3 0.9 14 0.6 10.5 0.7 10 1 9 1.4 8.5 5.5 3.5 9.4 2.5 8.8 5 12.6 7.5 15.1 9 16 10.5 15.3 10.5 14.3 11 12.8 61M-40.9 12l1.8 3 1.9 14 1.6 10.5 1.9 10 2.4 9 3.3 8.5 7.1 3.5 10.1 2.5 10.8 5 14.1 7.5 15.8 9 15.9 10.5 14.5 10.5 13 11 11.1 61M-39.1 12l2.7 3 2.8 14 2.7 10.5 3 10 3.8 9 5.1 8.5 8.4 3.5 10.6 2.5 12.6 5 15.3 7.5 16.1 9 15.4 10.5 13.4 10.5 11.5 11 9.2 61M-36.4 12l3.6 3 3.6 14 3.6 10.5 4.1 10 5.1 9 6.8 8.5 9.6 3.5 10.8 2.5 14.1 5 16.1 7.5 16.2 9 14.6 10.5 11.9 10.5 9.7 11 7.1 61M-32.8 12l4.2 3 4.4 14 4.5 10.5 5.1 10 6.3 9 8.3 8.5 10.6 3.5 10.8 2.5 15.3 5 16.5 7.5 15.8 9 13.5 10.5 10.2 10.5 7.6 11 5 61M-28.6 12l4.9 3 5 14 5.3 10.5 6 10 7.4 9 9.6 8.5 11.3 3.5 10.6 2.5 16.1 5 16.7 7.5 15.1 9 12 10.5 8.2 10.5 5.5 11 2.6 61M-23.7 12l5.5 3 5.5 14 5.9 10.5 6.8 10 8.3 9 10.7 8.5 11.8 3.5 10 2.5 16.7 5 16.4 7.5 14 9 10.3 10.5 6.1 10.5 3.2 11 0.2 61M-18.2 12l5.8 3 6 14 6.4 10.5 7.4 10 9 9 11.6 8.5 12 3.5 9.3 2.5 16.8 5 15.7 7.5 12.7 9 8.4 10.5 3.8 10.5 0.8 11-2.2 61M-12.4 12l6.1 3 6.3 14 6.8 10.5 7.8 10 9.5 9 12.2 8.5 12 3.5 8.4 2.5 16.5 5 14.8 7.5 11 9 6.2 10.5 1.5 10.5-1.6 11-4.6 61M-6.3 12l6.3 3 6.4 14 7 10.5 8.1 10 9.8 9 12.6 8.5 11.6 3.5 7.3 2.5 15.9 5 13.4 7.5 9.1 9 4 10.5-0.9 10.5-4 11-6.8 61M-42 12h84M-42 15h84M-43 29h86M-45.5 39.5h91M-49.5 49.5h99M-55.5 58.5h111M-64.5 67h129M-71 70.5h142M-72.5 73h145M-84.5 78h169M-94.5 85.5h189M-101.5 94.5h203M-105.5 105h211M-107 115.5h214M-107.8 126.5h215.6M-108 187.5h216M42 12l0 3 1 14 2.5 10.5 4 10 6 9 9 8.5 6.5 3.5 1.5 2.5 12 5 10 7.5 7 9 4 10.5 1.5 10.5 0.8 11 0.2 61M-42 12l0 3-1 14-2.5 10.5-4 10-6 9-9 8.5-6.5 3.5-1.5 2.5-12 5-10 7.5-7 9-4 10.5-1.5 10.5-0.8 11-0.2 61M0 126.5V187.5M0 126.5L15.4 187.5M15.4 126.5V187.5M15.4 126.5L30.5 187.5M30.5 126.5V187.5M30.5 126.5L44.9 187.5M44.9 126.5V187.5M44.9 126.5L58.3 187.5M58.3 126.5V187.5M58.3 126.5L70.4 187.5M70.4 126.5V187.5M70.4 126.5L80.9 187.5M80.9 126.5V187.5M80.9 126.5L89.6 187.5M89.6 126.5V187.5M89.6 126.5L96.3 187.5M96.3 126.5V187.5M96.3 126.5L100.9 187.5M100.9 126.5V187.5M100.9 126.5L103.2 187.5M103.2 126.5V187.5M103.2 126.5L103.2 187.5M103.2 126.5V187.5M103.2 126.5L100.9 187.5M100.9 126.5V187.5M100.9 126.5L96.3 187.5M96.3 126.5V187.5M96.3 126.5L89.6 187.5M89.6 126.5V187.5M89.6 126.5L80.9 187.5M80.9 126.5V187.5M80.9 126.5L70.4 187.5M70.4 126.5V187.5M70.4 126.5L58.3 187.5M58.3 126.5V187.5M58.3 126.5L44.9 187.5M44.9 126.5V187.5M44.9 126.5L30.5 187.5M30.5 126.5V187.5M30.5 126.5L15.4 187.5M15.4 126.5V187.5M15.4 126.5L0 187.5M0 126.5V187.5M0 126.5L-15.4 187.5M-15.4 126.5V187.5M-15.4 126.5L-30.5 187.5M-30.5 126.5V187.5M-30.5 126.5L-44.9 187.5M-44.9 126.5V187.5M-44.9 126.5L-58.3 187.5M-58.3 126.5V187.5M-58.3 126.5L-70.4 187.5M-70.4 126.5V187.5M-70.4 126.5L-80.9 187.5M-80.9 126.5V187.5M-80.9 126.5L-89.6 187.5M-89.6 126.5V187.5M-89.6 126.5L-96.3 187.5M-96.3 126.5V187.5M-96.3 126.5L-100.9 187.5M-100.9 126.5V187.5M-100.9 126.5L-103.2 187.5M-103.2 126.5V187.5M-103.2 126.5L-103.2 187.5M-103.2 126.5V187.5M-103.2 126.5L-100.9 187.5M-100.9 126.5V187.5M-100.9 126.5L-96.3 187.5M-96.3 126.5V187.5M-96.3 126.5L-89.6 187.5M-89.6 126.5V187.5M-89.6 126.5L-80.9 187.5M-80.9 126.5V187.5M-80.9 126.5L-70.4 187.5M-70.4 126.5V187.5M-70.4 126.5L-58.3 187.5M-58.3 126.5V187.5M-58.3 126.5L-44.9 187.5M-44.9 126.5V187.5M-44.9 126.5L-30.5 187.5M-30.5 126.5V187.5M-30.5 126.5L-15.4 187.5M-15.4 126.5V187.5M-15.4 126.5L0 187.5" stroke="#000" stroke-width="1" vector-effect="non-scaling-stroke" fill="none"/></g><path id="silbowl" d="M72.5 -73L84.5 -78L94.5 -85.5L101.5 -94.5L105.5 -105L107 -115.5L107.8 -126.5L-107.8 -126.5L-107 -115.5L-105.5 -105L-101.5 -94.5L-94.5 -85.5L-84.5 -78L-72.5 -73zM72.5 73L84.5 78L94.5 85.5L101.5 94.5L105.5 105L107 115.5L107.8 126.5L-107.8 126.5L-107 115.5L-105.5 105L-101.5 94.5L-94.5 85.5L-84.5 78L-72.5 73z"/><path id="silneck" d="M42 -12L42 -15L43 -29L45.5 -39.5L49.5 -49.5L55.5 -58.5L64.5 -67L71 -70.5L72.5 -73L-72.5 -73L-71 -70.5L-64.5 -67L-55.5 -58.5L-49.5 -49.5L-45.5 -39.5L-43 -29L-42 -15L-42 -12zM42 12L42 15L43 29L45.5 39.5L49.5 49.5L55.5 58.5L64.5 67L71 70.5L72.5 73L-72.5 73L-71 70.5L-64.5 67L-55.5 58.5L-49.5 49.5L-45.5 39.5L-43 29L-42 15L-42 12z"/><path id="silcyl" d="M107.8 -126.5L108 -187.5L-108 -187.5L-107.8 -126.5zM107.8 126.5L108 187.5L-108 187.5L-107.8 126.5z"/></defs><use href="#drumbody" transform="translate(762.5,468)"/><path d="M616.5 280.5A11.0 11.0 0 0 1 616.5 258.5L670.5 252.0H859.5L908.5 258.5A11.0 11.0 0 0 1 908.5 280.5z" fill="#000"/><path d="M609.5 264.5h16M899.5 264.5h16M611.5 267.5h16M897.5 267.5h16M609.5 270.5h16M899.5 270.5h16M611.5 273.5h16M897.5 273.5h16" stroke="#9da3ab" stroke-opacity="0.700" stroke-width="1" stroke-dasharray="2 2.500"/><path d="M635.5 270.0H889.5M645.5 273.0H879.5" stroke="#9da3ab" stroke-opacity="0.500" stroke-width="1" stroke-dasharray="2 7 1 12 3 9"/><path d="M616.5 655.5A11.0 11.0 0 0 0 616.5 677.5L670.5 684.0H859.5L908.5 677.5A11.0 11.0 0 0 0 908.5 655.5z" fill="#000"/><path d="M609.5 661.5h16M899.5 661.5h16M611.5 664.5h16M897.5 664.5h16M609.5 667.5h16M899.5 667.5h16M611.5 670.5h16M897.5 670.5h16" stroke="#9da3ab" stroke-opacity="0.700" stroke-width="1" stroke-dasharray="2 2.500"/><path d="M635.5 667.0H889.5M645.5 670.0H879.5" stroke="#9da3ab" stroke-opacity="0.500" stroke-width="1" stroke-dasharray="2 7 1 12 3 9"/><rect x="715.5" y="455.5" width="94" height="25" rx="3" fill="#000"/><rect x="708.0" y="459.5" width="109" height="17" rx="8" fill="#000"/><path d="M718.5 458.5h88M718.5 477.5h88" stroke="#9da3ab" stroke-opacity="0.450" stroke-dasharray="1 3 2 4"/><use href="#drumbody" transform="translate(400,464)"/><use href="#drumbody" transform="translate(400,464) scale(0.955,1)"/><rect x="353" y="451.5" width="94" height="25" rx="3" fill="#000"/><rect x="345.5" y="455.5" width="109" height="17" rx="8" fill="#000"/><path d="M356 454.5h88M356 473.5h88" stroke="#9da3ab" stroke-opacity="0.450" stroke-dasharray="1 3 2 4"/><path d="M263.5 276.0A13.5 13.5 0 0 1 263.5 249.0L290 248.0H510L536.5 249.0A13.5 13.5 0 0 1 536.5 276.0z" fill="#000"/><path d="M254 257.5h16M530 257.5h16M256 260.5h16M528 260.5h16M254 263.5h16M530 263.5h16M256 266.5h16M528 266.5h16" stroke="#9da3ab" stroke-opacity="0.700" stroke-width="1" stroke-dasharray="2 2.500"/><path d="M280 263.0H520M290 266.0H510" stroke="#9da3ab" stroke-opacity="0.500" stroke-width="1" stroke-dasharray="2 7 1 12 3 9"/><path d="M256.5 651.5A13.5 13.5 0 0 0 256.5 678.5L290 680.0H510L543.5 678.5A13.5 13.5 0 0 0 543.5 651.5z" fill="#000"/><path d="M247 660h16M537 660h16M249 663h16M535 663h16M247 666h16M537 666h16M249 669h16M535 669h16" stroke="#9da3ab" stroke-opacity="0.700" stroke-width="1" stroke-dasharray="2 2.500"/><path d="M273 665.5H527M283 668.5H517" stroke="#9da3ab" stroke-opacity="0.500" stroke-width="1" stroke-dasharray="2 7 1 12 3 9"/><path d="M539.5 300L547 624M530 304L506 446M509.5 482L505 630M492.5 482L499 630M260.5 300L253 624M270 304L294 446M290.5 482L295 630M307.5 482L301 630" stroke="#000" fill="none" stroke-linecap="round" stroke-linejoin="round" stroke-width="11"/><path d="M489 446L457 284L413 456M311 446L343 284L387 456" stroke="#000" fill="none" stroke-linecap="round" stroke-linejoin="round" stroke-width="12.500"/><ellipse cx="538" cy="263" rx="19" ry="15" fill="#000"/><path d="M548 270L546 296L530 312L520 300L530 276z" fill="#000"/><circle cx="535" cy="302" r="14.500" fill="#000"/><circle cx="536" cy="299" r="3.500" fill="#8a9098"/><circle cx="546.3" cy="620.300" r="15.900" fill="#000"/><path d="M561.5 625Q563 640 565.5 662L550 662L554 651L531.5 628z" fill="#000"/><path d="M557.5 632.500L542 634.500L556.2 646.500z" fill="#9da3ab" fill-opacity="0.550"/><path d="M554 634L556 644M551 634.500L555 645M548 635L553.5 645M545 635L552 645" stroke="#000" stroke-width="0.900"/><circle cx="546.3" cy="620.300" r="10.800" fill="none" stroke="#9da3ab" stroke-opacity="0.600" stroke-width="3.500" stroke-dasharray="1.500 1.800"/><path d="M551.8 606V623A5.800 5.800 0 0 1 540.2 623V606z" fill="#000"/><path d="M552.6 619V623A6.500 6.500 0 0 1 539.6 623V619" fill="none" stroke="#9da3ab" stroke-opacity="0.800" stroke-width="1"/><ellipse cx="546.7" cy="665.500" rx="18.800" ry="14.500" fill="#000"/><path d="M554 654a11 11 0 0 0 0 22" fill="none" stroke="#9da3ab" stroke-opacity="0.700" stroke-width="1"/><path d="M553 657.0H537M550 659.6H539M552 662.2H537M549 664.8H539M551 667.4H537M553 670.0H539M550 672.6H537" stroke="#9da3ab" stroke-opacity="0.450" stroke-width="1.100" stroke-dasharray="2.500 1.500"/><ellipse cx="503.5" cy="623" rx="12.500" ry="14" fill="#000"/><path d="M508 630V652" stroke="#000" stroke-width="13"/><ellipse cx="262" cy="263" rx="19" ry="15" fill="#000"/><path d="M252 270L254 296L270 312L280 300L270 276z" fill="#000"/><circle cx="265" cy="302" r="14.500" fill="#000"/><circle cx="264" cy="299" r="3.500" fill="#8a9098"/><circle cx="253.7" cy="620.300" r="15.900" fill="#000"/><path d="M238.5 625Q237 640 234.5 662L250 662L246 651L268.5 628z" fill="#000"/><path d="M242.5 632.500L258 634.500L243.8 646.500z" fill="#9da3ab" fill-opacity="0.550"/><path d="M246 634L244 644M249 634.500L245 645M252 635L246.5 645M255 635L248 645" stroke="#000" stroke-width="0.900"/><circle cx="253.7" cy="620.300" r="10.800" fill="none" stroke="#9da3ab" stroke-opacity="0.600" stroke-width="3.500" stroke-dasharray="1.500 1.800"/><path d="M248.2 606V623A5.800 5.800 0 0 0 259.8 623V606z" fill="#000"/><path d="M247.4 619V623A6.500 6.500 0 0 0 260.4 623V619" fill="none" stroke="#9da3ab" stroke-opacity="0.800" stroke-width="1"/><ellipse cx="253.3" cy="665.500" rx="18.800" ry="14.500" fill="#000"/><path d="M246 654a11 11 0 0 1 0 22" fill="none" stroke="#9da3ab" stroke-opacity="0.700" stroke-width="1"/><path d="M247 657.0H263M250 659.6H261M248 662.2H263M251 664.8H261M249 667.4H263M247 670.0H261M250 672.6H263" stroke="#9da3ab" stroke-opacity="0.450" stroke-width="1.100" stroke-dasharray="2.500 1.500"/><ellipse cx="296.5" cy="623" rx="12.500" ry="14" fill="#000"/><path d="M292 630V652" stroke="#000" stroke-width="13"/><rect x="533.5" y="445.500" width="16.0" height="37" fill="#9da3ab" stroke="#000" stroke-width="3.500"/><path d="M533.5 446L549.5 483M538.5 446v37M544.5 446v37" stroke="#000" stroke-width="1.2"/><rect x="480.5" y="445.500" width="38.0" height="37" fill="#9da3ab" stroke="#000" stroke-width="3.500"/><path d="M493.0 446v37M506.0 446v37M493.0 446L506.0 483M506.0 446L493.0 483M480.5 446L493.0 483M506.0 446L518.5 483M485.5 446v37M513.5 446v37" stroke="#000" stroke-width="1.2"/><path d="M493.0 446v37M506.0 446v37" stroke="#000" stroke-width="2.500"/><rect x="250.5" y="445.500" width="16.0" height="37" fill="#9da3ab" stroke="#000" stroke-width="3.500"/><path d="M250.5 446L266.5 483M255.5 446v37M261.5 446v37" stroke="#000" stroke-width="1.2"/><rect x="281.5" y="445.500" width="38.0" height="37" fill="#9da3ab" stroke="#000" stroke-width="3.500"/><path d="M294.0 446v37M307.0 446v37M294.0 446L307.0 483M307.0 446L294.0 483M281.5 446L294.0 483M307.0 446L319.5 483M286.5 446v37M314.5 446v37" stroke="#000" stroke-width="1.2"/><path d="M294.0 446v37M307.0 446v37" stroke="#000" stroke-width="2.500"/><path d="M377.500 297V578M394.500 297V578" stroke="#000" stroke-width="2.500"/><path d="M381 297V578M384.500 297V578M388 297V578M391 297V578" stroke="#000" stroke-width="1"/><path d="M378 300l16 8l-16 8l16 8l-16 8l16 8l-16 8l16 8l-16 8l16 8l-16 8l16 8l-16 8l16 8l-16 8l16 8l-16 8l16 8l-16 8l16 8l-16 8l16 8l-16 8l16 8l-16 8l16 8l-16 8l16 8l-16 8l16 8l-16 8l16 8l-16 8l16 8l-16 8" stroke="#000" stroke-width="0.800" fill="none"/><rect x="372" y="577" width="29" height="12" rx="2" fill="#000"/><path d="M375 583h22" stroke="#9da3ab" stroke-opacity="0.600" stroke-dasharray="2 2"/><path d="M390 476V604Q390 623 401 623Q411.700 623 411.700 604V476" stroke="#000" fill="none" stroke-linecap="round" stroke-linejoin="round" stroke-width="11.500"/><path d="M401 480V600" stroke="#000" stroke-width="1.500"/><rect x="377" y="476" width="44" height="10" fill="#000"/><path d="M399 290V470M402 290V470M396 300V460M405 300V460" stroke="#000" stroke-width="1"/><path d="M363 279h46v9q-5 9-23 9t-23-9z" fill="#000" fill-opacity="0.720"/><path d="M366 282h40M366 286h40M368 290h36" stroke="#9da3ab" stroke-opacity="0.400" stroke-dasharray="2 2"/>
</g>
<g clip-path="url(#cF)"><path d="M310.33 747.0V1278.0M314.65 747.0V1278.0M318.96 747.0V1278.0M323.28 747.0V1278.0M331.90 747.0V1278.0M336.22 747.0V1278.0M340.53 747.0V1278.0M344.85 747.0V1278.0M353.47 747.0V1278.0M357.79 747.0V1278.0M362.10 747.0V1278.0M366.42 747.0V1278.0M375.04 747.0V1278.0M379.36 747.0V1278.0M306.0 747.36H910.0M383.67 747.0V1278.0M306.0 751.67H910.0M387.99 747.0V1278.0M306.0 755.99H910.0M396.61 747.0V1278.0M306.0 764.61H910.0M400.93 747.0V1278.0M306.0 768.93H910.0M405.24 747.0V1278.0M306.0 773.24H910.0M409.56 747.0V1278.0M306.0 777.56H910.0M418.18 747.0V1278.0M306.0 786.18H910.0M422.50 747.0V1278.0M306.0 790.50H910.0M426.81 747.0V1278.0M306.0 794.81H910.0M431.13 747.0V1278.0M306.0 799.13H910.0M439.75 747.0V1278.0M306.0 807.75H910.0M444.07 747.0V1278.0M306.0 812.07H910.0M448.38 747.0V1278.0M306.0 816.38H910.0M452.70 747.0V1278.0M306.0 820.70H910.0M461.32 747.0V1278.0M306.0 829.32H910.0M465.64 747.0V1278.0M306.0 833.64H910.0M469.95 747.0V1278.0M306.0 837.95H910.0M474.27 747.0V1278.0M306.0 842.27H910.0M482.89 747.0V1278.0M306.0 850.89H910.0M487.21 747.0V1278.0M306.0 855.21H910.0M491.52 747.0V1278.0M306.0 859.52H910.0M495.84 747.0V1278.0M306.0 863.84H910.0M504.46 747.0V1278.0M306.0 872.46H910.0M508.78 747.0V1278.0M306.0 876.78H910.0M513.09 747.0V1278.0M306.0 881.09H910.0M517.41 747.0V1278.0M306.0 885.41H910.0M526.03 747.0V1278.0M306.0 894.03H910.0M530.35 747.0V1278.0M306.0 898.35H910.0M534.66 747.0V1278.0M306.0 902.66H910.0M538.98 747.0V1278.0M306.0 906.98H910.0M547.60 747.0V1278.0M306.0 915.60H910.0M551.92 747.0V1278.0M306.0 919.92H910.0M556.23 747.0V1278.0M306.0 924.23H910.0M560.55 747.0V1278.0M306.0 928.55H910.0M569.17 747.0V1278.0M306.0 937.17H910.0M573.49 747.0V1278.0M306.0 941.49H910.0M577.80 747.0V1278.0M306.0 945.80H910.0M582.12 747.0V1278.0M306.0 950.12H910.0M590.74 747.0V1278.0M306.0 958.74H910.0M595.06 747.0V1278.0M306.0 963.06H910.0M599.37 747.0V1278.0M306.0 967.37H910.0M603.69 747.0V1278.0M306.0 971.69H910.0M612.31 747.0V1278.0M306.0 980.31H910.0M616.63 747.0V1278.0M306.0 984.63H910.0M620.94 747.0V1278.0M306.0 988.94H910.0M625.26 747.0V1278.0M306.0 993.26H910.0M633.88 747.0V1278.0M306.0 1001.88H910.0M638.20 747.0V1278.0M306.0 1006.20H910.0M642.51 747.0V1278.0M306.0 1010.51H910.0M646.83 747.0V1278.0M306.0 1014.83H910.0M655.45 747.0V1278.0M306.0 1023.45H910.0M659.77 747.0V1278.0M306.0 1027.77H910.0M664.08 747.0V1278.0M306.0 1032.08H910.0M668.40 747.0V1278.0M306.0 1036.40H910.0M677.02 747.0V1278.0M306.0 1045.02H910.0M681.34 747.0V1278.0M306.0 1049.34H910.0M685.65 747.0V1278.0M306.0 1053.65H910.0M689.97 747.0V1278.0M306.0 1057.97H910.0M698.59 747.0V1278.0M306.0 1066.59H910.0M702.91 747.0V1278.0M306.0 1070.91H910.0M707.22 747.0V1278.0M306.0 1075.22H910.0M711.54 747.0V1278.0M306.0 1079.54H910.0M720.16 747.0V1278.0M306.0 1088.16H910.0M724.48 747.0V1278.0M306.0 1092.48H910.0M728.79 747.0V1278.0M306.0 1096.79H910.0M733.11 747.0V1278.0M306.0 1101.11H910.0M741.73 747.0V1278.0M306.0 1109.73H910.0M746.05 747.0V1278.0M306.0 1114.05H910.0M750.36 747.0V1278.0M306.0 1118.36H910.0M754.68 747.0V1278.0M306.0 1122.68H910.0M763.30 747.0V1278.0M306.0 1131.30H910.0M767.62 747.0V1278.0M306.0 1135.62H910.0M771.93 747.0V1278.0M306.0 1139.93H910.0M776.25 747.0V1278.0M306.0 1144.25H910.0M784.87 747.0V1278.0M306.0 1152.87H910.0M789.19 747.0V1278.0M306.0 1157.19H910.0M793.50 747.0V1278.0M306.0 1161.50H910.0M797.82 747.0V1278.0M306.0 1165.82H910.0M806.44 747.0V1278.0M306.0 1174.44H910.0M810.76 747.0V1278.0M306.0 1178.76H910.0M815.07 747.0V1278.0M306.0 1183.07H910.0M819.39 747.0V1278.0M306.0 1187.39H910.0M828.01 747.0V1278.0M306.0 1196.01H910.0M832.33 747.0V1278.0M306.0 1200.33H910.0M836.64 747.0V1278.0M306.0 1204.64H910.0M840.96 747.0V1278.0M306.0 1208.96H910.0M849.58 747.0V1278.0M306.0 1217.58H910.0M853.90 747.0V1278.0M306.0 1221.90H910.0M858.21 747.0V1278.0M306.0 1226.21H910.0M862.53 747.0V1278.0M306.0 1230.53H910.0M871.15 747.0V1278.0M306.0 1239.15H910.0M875.47 747.0V1278.0M306.0 1243.47H910.0M879.78 747.0V1278.0M306.0 1247.78H910.0M884.10 747.0V1278.0M306.0 1252.10H910.0M892.72 747.0V1278.0M306.0 1260.72H910.0M897.04 747.0V1278.0M306.0 1265.04H910.0M901.35 747.0V1278.0M306.0 1269.35H910.0M905.67 747.0V1278.0M306.0 1273.67H910.0" stroke="#9097a0" stroke-width="1"/><path d="M306.02 747.0V1278.0M327.59 747.0V1278.0M349.16 747.0V1278.0M370.73 747.0V1278.0M392.30 747.0V1278.0M306.0 760.30H910.0M413.87 747.0V1278.0M306.0 781.87H910.0M435.44 747.0V1278.0M306.0 803.44H910.0M457.01 747.0V1278.0M306.0 825.01H910.0M478.58 747.0V1278.0M306.0 846.58H910.0M500.15 747.0V1278.0M306.0 868.15H910.0M521.72 747.0V1278.0M306.0 889.72H910.0M543.29 747.0V1278.0M306.0 911.29H910.0M564.86 747.0V1278.0M306.0 932.86H910.0M586.43 747.0V1278.0M306.0 954.43H910.0M608.00 747.0V1278.0M306.0 976.00H910.0M629.57 747.0V1278.0M306.0 997.57H910.0M651.14 747.0V1278.0M306.0 1019.14H910.0M672.71 747.0V1278.0M306.0 1040.71H910.0M694.28 747.0V1278.0M306.0 1062.28H910.0M715.85 747.0V1278.0M306.0 1083.85H910.0M737.42 747.0V1278.0M306.0 1105.42H910.0M758.99 747.0V1278.0M306.0 1126.99H910.0M780.56 747.0V1278.0M306.0 1148.56H910.0M802.13 747.0V1278.0M306.0 1170.13H910.0M823.70 747.0V1278.0M306.0 1191.70H910.0M845.27 747.0V1278.0M306.0 1213.27H910.0M866.84 747.0V1278.0M306.0 1234.84H910.0M888.41 747.0V1278.0M306.0 1256.41H910.0M909.98 747.0V1278.0M306.0 1277.98H910.0" stroke="#82878f" stroke-width="1.2"/>
<path d="M608 747V976" stroke="#469646" stroke-width="2"/><path d="M608 976H910.0" stroke="#963c3c" stroke-width="2"/>
<defs><g id="fbody"><g stroke="#000" stroke-width="1" fill="none"><circle r="23.5"/><circle r="23.5"/><circle r="24.0"/><circle r="25.4"/><circle r="27.7"/><circle r="31.0"/><circle r="36.1"/><circle r="39.7"/><circle r="40.5"/><circle r="47.2"/><circle r="52.8"/><circle r="56.7"/><circle r="59.0"/><circle r="59.8"/><circle r="60.3"/><circle r="60.4"/><path d="M23.5 0L60.4 0M23.2 3.5L59.7 9M22.4 6.9L57.7 17.8M21.2 10.2L54.4 26.2M19.4 13.2L49.9 34M17.2 16L44.3 41.1M14.6 18.4L37.6 47.2M11.7 20.3L30.2 52.3M8.6 21.9L22.1 56.2M5.2 22.9L13.4 58.9M1.8 23.4L4.5 60.2M-1.8 23.4L-4.5 60.2M-5.2 22.9L-13.4 58.9M-8.6 21.9L-22.1 56.2M-11.7 20.3L-30.2 52.3M-14.6 18.4L-37.6 47.2M-17.2 16L-44.3 41.1M-19.4 13.2L-49.9 34M-21.2 10.2L-54.4 26.2M-22.4 6.9L-57.7 17.8M-23.2 3.5L-59.7 9M-23.5 0L-60.4 0M-23.2 -3.5L-59.7 -9M-22.4 -6.9L-57.7 -17.8M-21.2 -10.2L-54.4 -26.2M-19.4 -13.2L-49.9 -34M-17.2 -16L-44.3 -41.1M-14.6 -18.4L-37.6 -47.2M-11.7 -20.3L-30.2 -52.3M-8.6 -21.9L-22.1 -56.2M-5.2 -22.9L-13.4 -58.9M-1.8 -23.4L-4.5 -60.2M1.8 -23.4L4.5 -60.2M5.2 -22.9L13.4 -58.9M8.6 -21.9L22.1 -56.2M11.7 -20.3L30.2 -52.3M14.6 -18.4L37.6 -47.2M17.2 -16L44.3 -41.1M19.4 -13.2L49.9 -34M21.2 -10.2L54.4 -26.2M22.4 -6.9L57.7 -17.8M23.2 -3.5L59.7 -9M23.5 0l-0.3 3.5-0.2 3.6-0.1 3.9 0 4.6-0.2 5.5-0.2 7.1-2.7 6.2-5 3.3-4.3 8.4-6.6 6.6-8.1 3.9-8.9 0.9-8.8-1.8-8.2-3.5-7.5-5M23.2 3.5l-0.8 3.4-0.7 3.5-0.7 3.9-0.7 4.5-1 5.5-1.3 6.9-3.5 5.7-5.5 2.6-5.5 7.6-7.4 5.6-8.7 2.6-8.9-0.4-8.4-3.1-7.7-4.7-6.7-6M22.4 6.9l-1.2 3.3-1.3 3.3-1.3 3.8-1.3 4.3-1.8 5.3-2.3 6.7-4.4 5.1-5.8 1.7-6.5 6.7-8.3 4.4-8.9 1.3-8.8-1.7-7.8-4.3-6.9-5.8-5.7-7M21.2 10.2l-1.8 3-1.8 3.1-1.7 3.6-2.1 4.1-2.5 4.9-3.3 6.3-5 4.4-6 0.8-7.5 5.7-8.8 3.1-9.1-0.1-8.4-3-7-5.4-6-6.8-4.6-7.7M19.4 13.2l-2.2 2.8-2.2 2.8-2.3 3.2-2.6 3.8-3.2 4.4-4.2 5.8-5.7 3.6-6-0.1-8.3 4.5-9.1 1.7-9-1.3-7.8-4.3-6.2-6.4-4.9-7.6-3.4-8.3M17.2 16l-2.6 2.4-2.6 2.4-2.7 2.9-3.1 3.3-3.9 3.9-5 5.1-6.1 2.7-6-1-8.8 3.2-9.3 0.4-8.7-2.7-7.1-5.4-5.2-7.2-3.7-8.2-2.1-8.8M14.6 18.4l-2.9 1.9-2.9 2.1-3.1 2.4-3.6 2.8-4.4 3.3-5.7 4.3-6.5 1.7-5.8-1.8-9.2 1.8-9.2-1-8.2-3.9-6.2-6.4-4.1-8-2.4-8.6-0.8-9M11.7 20.3l-3.1 1.6-3.3 1.5-3.4 2-4 2.2-4.8 2.6-6.3 3.4-6.6 0.8-5.5-2.7-9.3 0.4-9-2.3-7.5-5.2-5.3-7.2-2.7-8.5-1.2-8.9 0.6-9M8.6 21.9l-3.4 1-3.4 1.1-3.7 1.4-4.3 1.6-5.1 1.9-6.7 2.3-6.7-0.2-5-3.4-9.3-1-8.6-3.7-6.6-6.2-4.1-7.9-1.5-8.8 0.2-9 1.9-8.8M5.2 22.9l-3.4 0.5-3.6 0.6-3.9 0.8-4.4 1-5.4 1.1-7 1.3-6.6-1.2-4.4-4.2-9.1-2.3-7.9-4.9-5.6-7.1-2.9-8.5-0.1-8.9 1.5-8.9 3.2-8.4M1.8 23.4l-3.6 0-3.5 0-4 0.3-4.5 0.3-5.5 0.3-7.1 0.2-6.4-2.1-3.7-4.8-8.6-3.7-7.1-6-4.5-7.9-1.6-8.8 1.1-8.8 2.9-8.5 4.4-7.9M-1.8 23.4l-3.4-0.5-3.6-0.5-3.9-0.4-4.6-0.4-5.4-0.5-7.1-0.8-6-3.1-2.9-5.3-8-4.9-6.1-7-3.3-8.5-0.3-8.9 2.5-8.6 4.1-7.9 5.5-7.2M-5.2 22.9l-3.4-1-3.4-1.1-3.9-0.9-4.4-1.1-5.3-1.3-6.9-1.9-5.4-3.9-2.2-5.7-7.1-6-5-7.9-2-8.8 1.1-8.9 3.7-8.1 5.2-7.3 6.6-6.2M-8.6 21.9l-3.1-1.6-3.3-1.5-3.6-1.5-4.3-1.7-5.1-2.1-6.5-2.9-4.7-4.7-1.3-5.9-6.2-7-3.8-8.6-0.6-9 2.4-8.6 4.9-7.5 6.2-6.4 7.4-5.2M-11.7 20.3l-2.9-1.9-3-2.1-3.4-2-3.9-2.3-4.7-2.9-6.1-3.7-4-5.4-0.4-6-5-7.9-2.5-9 0.7-9.1 3.7-8.1 5.9-6.7 7.2-5.4 8-4M-14.6 18.4l-2.6-2.4-2.7-2.5-3-2.5-3.5-2.8-4.3-3.6-5.4-4.6-3.1-5.9 0.5-6-3.9-8.6-1-9.3 2-8.8 4.8-7.5 6.9-5.7 7.9-4.3 8.6-2.8M-17.2 16l-2.2-2.8-2.3-2.8-2.6-2.9-3.1-3.4-3.6-4.1-4.7-5.4-2.2-6.3 1.4-5.9-2.5-9 0.3-9.3 3.3-8.5 5.9-6.7 7.6-4.6 8.5-3 8.9-1.5M-19.4 13.2l-1.8-3-1.8-3.1-2.2-3.3-2.5-3.8-3-4.6-3.8-6-1.3-6.6 2.3-5.6-1.1-9.3 1.7-9.2 4.5-7.8 6.9-5.8 8.2-3.4 8.8-1.8 9-0.1M-21.2 10.2l-1.2-3.3-1.4-3.3-1.6-3.6-2-4.1-2.2-5-2.9-6.5-0.3-6.8 3.1-5.2 0.2-9.3 3.1-8.8 5.7-7.1 7.6-4.7 8.6-2.1 9-0.5 8.9 1.2M-22.4 6.9l-0.8-3.4-0.8-3.5-1.2-3.8-1.2-4.4-1.6-5.3-1.8-6.8 0.7-6.7 3.8-4.7 1.7-9.2 4.3-8.3 6.7-6.1 8.2-3.5 8.9-0.8 8.9 0.9 8.7 2.5M-23.2 3.5l-0.3-3.5-0.3-3.6-0.5-3.9-0.6-4.5-0.7-5.5-0.8-7 1.7-6.5 4.4-4.1 3-8.9 5.5-7.5 7.6-5.1 8.6-2.2 8.9 0.5 8.7 2.2 8.2 3.8M-23.5 0l0.3-3.5 0.2-3.6 0.1-3.9 0-4.6 0.2-5.5 0.2-7.1 2.7-6.2 5-3.3 4.3-8.4 6.6-6.6 8.1-3.9 8.9-0.9 8.8 1.8 8.2 3.5 7.5 5M-23.2-3.5l0.8-3.4 0.7-3.5 0.7-3.9 0.7-4.5 1-5.5 1.3-6.9 3.5-5.7 5.5-2.6 5.5-7.6 7.4-5.6 8.7-2.6 8.9 0.4 8.4 3.1 7.7 4.7 6.7 6M-22.4-6.9l1.2-3.3 1.3-3.3 1.3-3.8 1.3-4.3 1.8-5.3 2.3-6.7 4.4-5.1 5.8-1.7 6.5-6.7 8.3-4.4 8.9-1.3 8.8 1.7 7.8 4.3 6.9 5.8 5.7 7M-21.2-10.2l1.8-3 1.8-3.1 1.7-3.6 2.1-4.1 2.5-4.9 3.3-6.3 5-4.4 6-0.8 7.5-5.7 8.8-3.1 9.1 0.1 8.4 3 7 5.4 6 6.8 4.6 7.7M-19.4-13.2l2.2-2.8 2.2-2.8 2.3-3.2 2.6-3.8 3.2-4.4 4.2-5.8 5.7-3.6 6 0.1 8.3-4.5 9.1-1.7 9 1.3 7.8 4.3 6.2 6.4 4.9 7.6 3.4 8.3M-17.2-16l2.6-2.4 2.6-2.4 2.7-2.9 3.1-3.3 3.9-3.9 5-5.1 6.1-2.7 6 1 8.8-3.2 9.3-0.4 8.7 2.7 7.1 5.4 5.2 7.2 3.7 8.2 2.1 8.8M-14.6-18.4l2.9-1.9 2.9-2.1 3.1-2.4 3.6-2.8 4.4-3.3 5.7-4.3 6.5-1.7 5.8 1.8 9.2-1.8 9.2 1 8.2 3.9 6.2 6.4 4.1 8 2.4 8.6 0.8 9M-11.7-20.3l3.1-1.6 3.3-1.5 3.4-2 4-2.2 4.8-2.6 6.3-3.4 6.6-0.8 5.5 2.7 9.3-0.4 9 2.3 7.5 5.2 5.3 7.2 2.7 8.5 1.2 8.9-0.6 9M-8.6-21.9l3.4-1 3.4-1.1 3.7-1.4 4.3-1.6 5.1-1.9 6.7-2.3 6.7 0.2 5 3.4 9.3 1 8.6 3.7 6.6 6.2 4.1 7.9 1.5 8.8-0.2 9-1.9 8.8M-5.2-22.9l3.4-0.5 3.6-0.6 3.9-0.8 4.4-1 5.4-1.1 7-1.3 6.6 1.2 4.4 4.2 9.1 2.3 7.9 4.9 5.6 7.1 2.9 8.5 0.1 8.9-1.5 8.9-3.2 8.4M-1.8-23.4l3.6 0 3.5 0 4-0.3 4.5-0.3 5.5-0.3 7.1-0.2 6.4 2.1 3.7 4.8 8.6 3.7 7.1 6 4.5 7.9 1.6 8.8-1.1 8.8-2.9 8.5-4.4 7.9M1.8-23.4l3.4 0.5 3.6 0.5 3.9 0.4 4.6 0.4 5.4 0.5 7.1 0.8 6 3.1 2.9 5.3 8 4.9 6.1 7 3.3 8.5 0.3 8.9-2.5 8.6-4.1 7.9-5.5 7.2M5.2-22.9l3.4 1 3.4 1.1 3.9 0.9 4.4 1.1 5.3 1.3 6.9 1.9 5.4 3.9 2.2 5.7 7.1 6 5 7.9 2 8.8-1.1 8.9-3.7 8.1-5.2 7.3-6.6 6.2M8.6-21.9l3.1 1.6 3.3 1.5 3.6 1.5 4.3 1.7 5.1 2.1 6.5 2.9 4.7 4.7 1.3 5.9 6.2 7 3.8 8.6 0.6 9-2.4 8.6-4.9 7.5-6.2 6.4-7.4 5.2M11.7-20.3l2.9 1.9 3 2.1 3.4 2 3.9 2.3 4.7 2.9 6.1 3.7 4 5.4 0.4 6 5 7.9 2.5 9-0.7 9.1-3.7 8.1-5.9 6.7-7.2 5.4-8 4M14.6-18.4l2.6 2.4 2.7 2.5 3 2.5 3.5 2.8 4.3 3.6 5.4 4.6 3.1 5.9-0.5 6 3.9 8.6 1 9.3-2 8.8-4.8 7.5-6.9 5.7-7.9 4.3-8.6 2.8M17.2-16l2.2 2.8 2.3 2.8 2.6 2.9 3.1 3.4 3.6 4.1 4.7 5.4 2.2 6.3-1.4 5.9 2.5 9-0.3 9.3-3.3 8.5-5.9 6.7-7.6 4.6-8.5 3-8.9 1.5M19.4-13.2l1.8 3 1.8 3.1 2.2 3.3 2.5 3.8 3 4.6 3.8 6 1.3 6.6-2.3 5.6 1.1 9.3-1.7 9.2-4.5 7.8-6.9 5.8-8.2 3.4-8.8 1.8-9 0.1M21.2-10.2l1.2 3.3 1.4 3.3 1.6 3.6 2 4.1 2.2 5 2.9 6.5 0.3 6.8-3.1 5.2-0.2 9.3-3.1 8.8-5.7 7.1-7.6 4.7-8.6 2.1-9 0.5-8.9-1.2M22.4-6.9l0.8 3.4 0.8 3.5 1.2 3.8 1.2 4.4 1.6 5.3 1.8 6.8-0.7 6.7-3.8 4.7-1.7 9.2-4.3 8.3-6.7 6.1-8.2 3.5-8.9 0.8-8.9-0.9-8.7-2.5M23.2-3.5l0.3 3.5 0.3 3.6 0.5 3.9 0.6 4.5 0.7 5.5 0.8 7-1.7 6.5-4.4 4.1-3 8.9-5.5 7.5-7.6 5.1-8.6 2.2-8.9-0.5-8.7-2.2-8.2-3.8M23.5 0l-0.3-3.5-0.2-3.6-0.1-3.9 0-4.6-0.2-5.5-0.2-7.1-2.7-6.2-5-3.3-4.3-8.4-6.6-6.6-8.1-3.9-8.9-0.9-8.8 1.8-8.2 3.5-7.5 5M23.2 3.5l0.3-3.5 0.3-3.6 0.5-3.9 0.6-4.5 0.7-5.5 0.8-7-1.7-6.5-4.4-4.1-3-8.9-5.5-7.5-7.6-5.1-8.6-2.2-8.9 0.5-8.7 2.2-8.2 3.8M22.4 6.9l0.8-3.4 0.8-3.5 1.2-3.8 1.2-4.4 1.6-5.3 1.8-6.8-0.7-6.7-3.8-4.7-1.7-9.2-4.3-8.3-6.7-6.1-8.2-3.5-8.9-0.8-8.9 0.9-8.7 2.5M21.2 10.2l1.2-3.3 1.4-3.3 1.6-3.6 2-4.1 2.2-5 2.9-6.5 0.3-6.8-3.1-5.2-0.2-9.3-3.1-8.8-5.7-7.1-7.6-4.7-8.6-2.1-9-0.5-8.9 1.2M19.4 13.2l1.8-3 1.8-3.1 2.2-3.3 2.5-3.8 3-4.6 3.8-6 1.3-6.6-2.3-5.6 1.1-9.3-1.7-9.2-4.5-7.8-6.9-5.8-8.2-3.4-8.8-1.8-9-0.1M17.2 16l2.2-2.8 2.3-2.8 2.6-2.9 3.1-3.4 3.6-4.1 4.7-5.4 2.2-6.3-1.4-5.9 2.5-9-0.3-9.3-3.3-8.5-5.9-6.7-7.6-4.6-8.5-3-8.9-1.5M14.6 18.4l2.6-2.4 2.7-2.5 3-2.5 3.5-2.8 4.3-3.6 5.4-4.6 3.1-5.9-0.5-6 3.9-8.6 1-9.3-2-8.8-4.8-7.5-6.9-5.7-7.9-4.3-8.6-2.8M11.7 20.3l2.9-1.9 3-2.1 3.4-2 3.9-2.3 4.7-2.9 6.1-3.7 4-5.4 0.4-6 5-7.9 2.5-9-0.7-9.1-3.7-8.1-5.9-6.7-7.2-5.4-8-4M8.6 21.9l3.1-1.6 3.3-1.5 3.6-1.5 4.3-1.7 5.1-2.1 6.5-2.9 4.7-4.7 1.3-5.9 6.2-7 3.8-8.6 0.6-9-2.4-8.6-4.9-7.5-6.2-6.4-7.4-5.2M5.2 22.9l3.4-1 3.4-1.1 3.9-0.9 4.4-1.1 5.3-1.3 6.9-1.9 5.4-3.9 2.2-5.7 7.1-6 5-7.9 2-8.8-1.1-8.9-3.7-8.1-5.2-7.3-6.6-6.2M1.8 23.4l3.4-0.5 3.6-0.5 3.9-0.4 4.6-0.4 5.4-0.5 7.1-0.8 6-3.1 2.9-5.3 8-4.9 6.1-7 3.3-8.5 0.3-8.9-2.5-8.6-4.1-7.9-5.5-7.2M-1.8 23.4l3.6 0 3.5 0 4 0.3 4.5 0.3 5.5 0.3 7.1 0.2 6.4-2.1 3.7-4.8 8.6-3.7 7.1-6 4.5-7.9 1.6-8.8-1.1-8.8-2.9-8.5-4.4-7.9M-5.2 22.9l3.4 0.5 3.6 0.6 3.9 0.8 4.4 1 5.4 1.1 7 1.3 6.6-1.2 4.4-4.2 9.1-2.3 7.9-4.9 5.6-7.1 2.9-8.5 0.1-8.9-1.5-8.9-3.2-8.4M-8.6 21.9l3.4 1 3.4 1.1 3.7 1.4 4.3 1.6 5.1 1.9 6.7 2.3 6.7-0.2 5-3.4 9.3-1 8.6-3.7 6.6-6.2 4.1-7.9 1.5-8.8-0.2-9-1.9-8.8M-11.7 20.3l3.1 1.6 3.3 1.5 3.4 2 4 2.2 4.8 2.6 6.3 3.4 6.6 0.8 5.5-2.7 9.3 0.4 9-2.3 7.5-5.2 5.3-7.2 2.7-8.5 1.2-8.9-0.6-9M-14.6 18.4l2.9 1.9 2.9 2.1 3.1 2.4 3.6 2.8 4.4 3.3 5.7 4.3 6.5 1.7 5.8-1.8 9.2 1.8 9.2-1 8.2-3.9 6.2-6.4 4.1-8 2.4-8.6 0.8-9M-17.2 16l2.6 2.4 2.6 2.4 2.7 2.9 3.1 3.3 3.9 3.9 5 5.1 6.1 2.7 6-1 8.8 3.2 9.3 0.4 8.7-2.7 7.1-5.4 5.2-7.2 3.7-8.2 2.1-8.8M-19.4 13.2l2.2 2.8 2.2 2.8 2.3 3.2 2.6 3.8 3.2 4.4 4.2 5.8 5.7 3.6 6-0.1 8.3 4.5 9.1 1.7 9-1.3 7.8-4.3 6.2-6.4 4.9-7.6 3.4-8.3M-21.2 10.2l1.8 3 1.8 3.1 1.7 3.6 2.1 4.1 2.5 4.9 3.3 6.3 5 4.4 6 0.8 7.5 5.7 8.8 3.1 9.1-0.1 8.4-3 7-5.4 6-6.8 4.6-7.7M-22.4 6.9l1.2 3.3 1.3 3.3 1.3 3.8 1.3 4.3 1.8 5.3 2.3 6.7 4.4 5.1 5.8 1.7 6.5 6.7 8.3 4.4 8.9 1.3 8.8-1.7 7.8-4.3 6.9-5.8 5.7-7M-23.2 3.5l0.8 3.4 0.7 3.5 0.7 3.9 0.7 4.5 1 5.5 1.3 6.9 3.5 5.7 5.5 2.6 5.5 7.6 7.4 5.6 8.7 2.6 8.9-0.4 8.4-3.1 7.7-4.7 6.7-6M-23.5 0l0.3 3.5 0.2 3.6 0.1 3.9 0 4.6 0.2 5.5 0.2 7.1 2.7 6.2 5 3.3 4.3 8.4 6.6 6.6 8.1 3.9 8.9 0.9 8.8-1.8 8.2-3.5 7.5-5M-23.2-3.5l-0.3 3.5-0.3 3.6-0.5 3.9-0.6 4.5-0.7 5.5-0.8 7 1.7 6.5 4.4 4.1 3 8.9 5.5 7.5 7.6 5.1 8.6 2.2 8.9-0.5 8.7-2.2 8.2-3.8M-22.4-6.9l-0.8 3.4-0.8 3.5-1.2 3.8-1.2 4.4-1.6 5.3-1.8 6.8 0.7 6.7 3.8 4.7 1.7 9.2 4.3 8.3 6.7 6.1 8.2 3.5 8.9 0.8 8.9-0.9 8.7-2.5M-21.2-10.2l-1.2 3.3-1.4 3.3-1.6 3.6-2 4.1-2.2 5-2.9 6.5-0.3 6.8 3.1 5.2 0.2 9.3 3.1 8.8 5.7 7.1 7.6 4.7 8.6 2.1 9 0.5 8.9-1.2M-19.4-13.2l-1.8 3-1.8 3.1-2.2 3.3-2.5 3.8-3 4.6-3.8 6-1.3 6.6 2.3 5.6-1.1 9.3 1.7 9.2 4.5 7.8 6.9 5.8 8.2 3.4 8.8 1.8 9 0.1M-17.2-16l-2.2 2.8-2.3 2.8-2.6 2.9-3.1 3.4-3.6 4.1-4.7 5.4-2.2 6.3 1.4 5.9-2.5 9 0.3 9.3 3.3 8.5 5.9 6.7 7.6 4.6 8.5 3 8.9 1.5M-14.6-18.4l-2.6 2.4-2.7 2.5-3 2.5-3.5 2.8-4.3 3.6-5.4 4.6-3.1 5.9 0.5 6-3.9 8.6-1 9.3 2 8.8 4.8 7.5 6.9 5.7 7.9 4.3 8.6 2.8M-11.7-20.3l-2.9 1.9-3 2.1-3.4 2-3.9 2.3-4.7 2.9-6.1 3.7-4 5.4-0.4 6-5 7.9-2.5 9 0.7 9.1 3.7 8.1 5.9 6.7 7.2 5.4 8 4M-8.6-21.9l-3.1 1.6-3.3 1.5-3.6 1.5-4.3 1.7-5.1 2.1-6.5 2.9-4.7 4.7-1.3 5.9-6.2 7-3.8 8.6-0.6 9 2.4 8.6 4.9 7.5 6.2 6.4 7.4 5.2M-5.2-22.9l-3.4 1-3.4 1.1-3.9 0.9-4.4 1.1-5.3 1.3-6.9 1.9-5.4 3.9-2.2 5.7-7.1 6-5 7.9-2 8.8 1.1 8.9 3.7 8.1 5.2 7.3 6.6 6.2M-1.8-23.4l-3.4 0.5-3.6 0.5-3.9 0.4-4.6 0.4-5.4 0.5-7.1 0.8-6 3.1-2.9 5.3-8 4.9-6.1 7-3.3 8.5-0.3 8.9 2.5 8.6 4.1 7.9 5.5 7.2M1.8-23.4l-3.6 0-3.5 0-4-0.3-4.5-0.3-5.5-0.3-7.1-0.2-6.4 2.1-3.7 4.8-8.6 3.7-7.1 6-4.5 7.9-1.6 8.8 1.1 8.8 2.9 8.5 4.4 7.9M5.2-22.9l-3.4-0.5-3.6-0.6-3.9-0.8-4.4-1-5.4-1.1-7-1.3-6.6 1.2-4.4 4.2-9.1 2.3-7.9 4.9-5.6 7.1-2.9 8.5-0.1 8.9 1.5 8.9 3.2 8.4M8.6-21.9l-3.4-1-3.4-1.1-3.7-1.4-4.3-1.6-5.1-1.9-6.7-2.3-6.7 0.2-5 3.4-9.3 1-8.6 3.7-6.6 6.2-4.1 7.9-1.5 8.8 0.2 9 1.9 8.8M11.7-20.3l-3.1-1.6-3.3-1.5-3.4-2-4-2.2-4.8-2.6-6.3-3.4-6.6-0.8-5.5 2.7-9.3-0.4-9 2.3-7.5 5.2-5.3 7.2-2.7 8.5-1.2 8.9 0.6 9M14.6-18.4l-2.9-1.9-2.9-2.1-3.1-2.4-3.6-2.8-4.4-3.3-5.7-4.3-6.5-1.7-5.8 1.8-9.2-1.8-9.2 1-8.2 3.9-6.2 6.4-4.1 8-2.4 8.6-0.8 9M17.2-16l-2.6-2.4-2.6-2.4-2.7-2.9-3.1-3.3-3.9-3.9-5-5.1-6.1-2.7-6 1-8.8-3.2-9.3-0.4-8.7 2.7-7.1 5.4-5.2 7.2-3.7 8.2-2.1 8.8M19.4-13.2l-2.2-2.8-2.2-2.8-2.3-3.2-2.6-3.8-3.2-4.4-4.2-5.8-5.7-3.6-6 0.1-8.3-4.5-9.1-1.7-9 1.3-7.8 4.3-6.2 6.4-4.9 7.6-3.4 8.3M21.2-10.2l-1.8-3-1.8-3.1-1.7-3.6-2.1-4.1-2.5-4.9-3.3-6.3-5-4.4-6-0.8-7.5-5.7-8.8-3.1-9.1 0.1-8.4 3-7 5.4-6 6.8-4.6 7.7M22.4-6.9l-1.2-3.3-1.3-3.3-1.3-3.8-1.3-4.3-1.8-5.3-2.3-6.7-4.4-5.1-5.8-1.7-6.5-6.7-8.3-4.4-8.9-1.3-8.8 1.7-7.8 4.3-6.9 5.8-5.7 7M23.2-3.5l-0.8-3.4-0.7-3.5-0.7-3.9-0.7-4.5-1-5.5-1.3-6.9-3.5-5.7-5.5-2.6-5.5-7.6-7.4-5.6-8.7-2.6-8.9 0.4-8.4 3.1-7.7 4.7-6.7 6"/></g></g></defs><g transform="translate(608.5,976)"><clipPath id="h1"><circle r="23"/></clipPath><g clip-path="url(#h1)"><path d="M-30 -58.2L30 -4.2M-30 -4.2L30 -58.2M-30 -53L30 1M-30 1L30 -53M-30 -47.8L30 6.2M-30 6.2L30 -47.8M-30 -42.6L30 11.4M-30 11.4L30 -42.6M-30 -37.4L30 16.6M-30 16.6L30 -37.4M-30 -32.2L30 21.8M-30 21.8L30 -32.2M-30 -27L30 27M-30 27L30 -27M-30 -21.8L30 32.2M-30 32.2L30 -21.8M-30 -16.6L30 37.4M-30 37.4L30 -16.6M-30 -11.4L30 42.6M-30 42.6L30 -11.4M-30 -6.2L30 47.8M-30 47.8L30 -6.2M-30 -1L30 53M-30 53L30 -1M-30 4.2L30 58.2M-30 58.2L30 4.2" stroke="#000" stroke-width="1.1"/></g><circle r="43" stroke="#000" stroke-opacity="0.680" stroke-width="26" fill="none"/><use href="#fbody"/><circle r="26.300" stroke="#000" stroke-width="7.500" fill="none"/><circle r="58" stroke="#000" stroke-width="5.500" fill="none"/><circle r="79" stroke="#000" stroke-width="18" fill="none"/><circle r="65.500" stroke="#000" stroke-opacity="0.500" stroke-width="10" fill="none"/><path d="M60 0l10.8 5.3-11.5 3.6 9.9 6.9-11.9 1.9 8.8 8.2-12 0.1 7.4 9.5-11.9-1.7 5.9 10.5-11.5-3.5 4.3 11.2-10.9-5.1 2.6 11.8-10-6.7 0.8 12-8.9-8.1-1 11.9-7.5-9.3-2.8 11.7-6.1-10.4-4.5 11.2-4.5-11.2-6.1 10.4-2.8-11.7-7.5 9.3-1-11.9-8.9 8.1 0.8-12-10 6.7 2.6-11.8-10.9 5.1 4.3-11.2-11.5 3.5 5.9-10.5-11.9 1.7 7.4-9.5-12-0.1 8.8-8.2-11.9-1.9 9.9-6.9-11.5-3.6 10.8-5.3-10.8-5.3 11.5-3.6-9.9-6.9 11.9-1.9-8.8-8.2 12-0.1-7.4-9.5 11.9 1.7-5.9-10.5 11.5 3.5-4.3-11.2 10.9 5.1-2.6-11.8 10 6.7-0.8-12 8.9 8.1 1-11.9 7.5 9.3 2.8-11.7 6.1 10.4 4.5-11.2 4.5 11.2 6.1-10.4 2.8 11.7 7.5-9.3 1 11.9 8.9-8.1-0.8 12 10-6.7-2.6 11.8 10.9-5.1-4.3 11.2 11.5-3.5-5.9 10.5 11.9-1.7-7.4 9.5 12 0.1-8.8 8.2 11.9 1.9-9.9 6.9 11.5 3.6-10.8 5.3" stroke="#000" stroke-width="2.600" fill="none"/><path d="M86 0L91 0M79.5 32.9L84.1 34.8M60.8 60.8L64.3 64.3M32.9 79.5L34.8 84.1M0 86L0 91M-32.9 79.5L-34.8 84.1M-60.8 60.8L-64.3 64.3M-79.5 32.9L-84.1 34.8M-86 0L-91 0M-79.5 -32.9L-84.1 -34.8M-60.8 -60.8L-64.3 -64.3M-32.9 -79.5L-34.8 -84.1M0 -86L0 -91M32.9 -79.5L34.8 -84.1M60.8 -60.8L64.3 -64.3M79.5 -32.9L84.1 -34.8" stroke="#000" stroke-width="5.500" stroke-linecap="round"/></g><g transform="translate(810.5,976)"><clipPath id="h2"><circle r="23"/></clipPath><g clip-path="url(#h2)"><path d="M-30 -58.2L30 -4.2M-30 -4.2L30 -58.2M-30 -53L30 1M-30 1L30 -53M-30 -47.8L30 6.2M-30 6.2L30 -47.8M-30 -42.6L30 11.4M-30 11.4L30 -42.6M-30 -37.4L30 16.6M-30 16.6L30 -37.4M-30 -32.2L30 21.8M-30 21.8L30 -32.2M-30 -27L30 27M-30 27L30 -27M-30 -21.8L30 32.2M-30 32.2L30 -21.8M-30 -16.6L30 37.4M-30 37.4L30 -16.6M-30 -11.4L30 42.6M-30 42.6L30 -11.4M-30 -6.2L30 47.8M-30 47.8L30 -6.2M-30 -1L30 53M-30 53L30 -1M-30 4.2L30 58.2M-30 58.2L30 4.2" stroke="#000" stroke-width="1.1"/></g><circle r="43" stroke="#000" stroke-opacity="0.680" stroke-width="26" fill="none"/><use href="#fbody"/><circle r="26.300" stroke="#000" stroke-width="7.500" fill="none"/><circle r="58" stroke="#000" stroke-width="5.500" fill="none"/><circle r="81.700" stroke="#000" stroke-width="12.500" fill="none"/><circle r="68" stroke="#000" stroke-opacity="0.450" stroke-width="15" fill="none"/><path d="M60 0l15.8 5.7-16.5 3.2 14.8 8-16.8 0.8 13.4 10.1-16.6-1.8 11.7 12-16.2-4.2 9.8 13.6-15.4-6.6 7.7 14.9-14.3-8.8 5.4 15.9-12.8-10.8 3 16.5-11.1-12.6 0.5 16.7-9-14.1-2.1 16.7-6.8-15.4-4.5 16.2-4.5-16.2-6.8 15.4-2.1-16.7-9 14.1 0.5-16.7-11.1 12.6 3-16.5-12.8 10.8 5.4-15.9-14.3 8.8 7.7-14.9-15.4 6.6 9.8-13.6-16.2 4.2 11.7-12-16.6 1.8 13.4-10.1-16.8-0.8 14.8-8-16.5-3.2 15.8-5.7-15.8-5.7 16.5-3.2-14.8-8 16.8-0.8-13.4-10.1 16.6 1.8-11.7-12 16.2 4.2-9.8-13.6 15.4 6.6-7.7-14.9 14.3 8.8-5.4-15.9 12.8 10.8-3-16.5 11.1 12.6-0.5-16.7 9 14.1 2.1-16.7 6.8 15.4 4.5-16.2 4.5 16.2 6.8-15.4 2.1 16.7 9-14.1-0.5 16.7 11.1-12.6-3 16.5 12.8-10.8-5.4 15.9 14.3-8.8-7.7 14.9 15.4-6.6-9.8 13.6 16.2-4.2-11.7 12 16.6-1.8-13.4 10.1 16.8 0.8-14.8 8 16.5 3.2-15.8 5.7" stroke="#000" stroke-width="2.800" fill="none"/></g><circle cx="600.500" cy="859.500" r="13.500" fill="#000"/><rect x="619" y="855.500" width="14.500" height="7.500" rx="1" fill="#000"/><path d="M622 858h8M623 860.500h6" stroke="#9da3ab" stroke-opacity="0.500" stroke-dasharray="1 1"/>
</g>
<g clip-path="url(#cR)"><path d="M1362.55 747.0V1332.0M1367.60 747.0V1332.0M1372.65 747.0V1332.0M1377.70 747.0V1332.0M1387.80 747.0V1332.0M1392.85 747.0V1332.0M1397.90 747.0V1332.0M1402.95 747.0V1332.0M1413.05 747.0V1332.0M1418.10 747.0V1332.0M1423.15 747.0V1332.0M1428.20 747.0V1332.0M1438.30 747.0V1332.0M1443.35 747.0V1332.0M1448.40 747.0V1332.0M1453.45 747.0V1332.0M1463.55 747.0V1332.0M1468.60 747.0V1332.0M1473.65 747.0V1332.0M1478.70 747.0V1332.0M1357.5 751.70H2064.5M1488.80 747.0V1332.0M1357.5 761.80H2064.5M1493.85 747.0V1332.0M1357.5 766.85H2064.5M1498.90 747.0V1332.0M1357.5 771.90H2064.5M1503.95 747.0V1332.0M1357.5 776.95H2064.5M1514.05 747.0V1332.0M1357.5 787.05H2064.5M1519.10 747.0V1332.0M1357.5 792.10H2064.5M1524.15 747.0V1332.0M1357.5 797.15H2064.5M1529.20 747.0V1332.0M1357.5 802.20H2064.5M1539.30 747.0V1332.0M1357.5 812.30H2064.5M1544.35 747.0V1332.0M1357.5 817.35H2064.5M1549.40 747.0V1332.0M1357.5 822.40H2064.5M1554.45 747.0V1332.0M1357.5 827.45H2064.5M1564.55 747.0V1332.0M1357.5 837.55H2064.5M1569.60 747.0V1332.0M1357.5 842.60H2064.5M1574.65 747.0V1332.0M1357.5 847.65H2064.5M1579.70 747.0V1332.0M1357.5 852.70H2064.5M1589.80 747.0V1332.0M1357.5 862.80H2064.5M1594.85 747.0V1332.0M1357.5 867.85H2064.5M1599.90 747.0V1332.0M1357.5 872.90H2064.5M1604.95 747.0V1332.0M1357.5 877.95H2064.5M1615.05 747.0V1332.0M1357.5 888.05H2064.5M1620.10 747.0V1332.0M1357.5 893.10H2064.5M1625.15 747.0V1332.0M1357.5 898.15H2064.5M1630.20 747.0V1332.0M1357.5 903.20H2064.5M1640.30 747.0V1332.0M1357.5 913.30H2064.5M1645.35 747.0V1332.0M1357.5 918.35H2064.5M1650.40 747.0V1332.0M1357.5 923.40H2064.5M1655.45 747.0V1332.0M1357.5 928.45H2064.5M1665.55 747.0V1332.0M1357.5 938.55H2064.5M1670.60 747.0V1332.0M1357.5 943.60H2064.5M1675.65 747.0V1332.0M1357.5 948.65H2064.5M1680.70 747.0V1332.0M1357.5 953.70H2064.5M1690.80 747.0V1332.0M1357.5 963.80H2064.5M1695.85 747.0V1332.0M1357.5 968.85H2064.5M1700.90 747.0V1332.0M1357.5 973.90H2064.5M1705.95 747.0V1332.0M1357.5 978.95H2064.5M1716.05 747.0V1332.0M1357.5 989.05H2064.5M1721.10 747.0V1332.0M1357.5 994.10H2064.5M1726.15 747.0V1332.0M1357.5 999.15H2064.5M1731.20 747.0V1332.0M1357.5 1004.20H2064.5M1741.30 747.0V1332.0M1357.5 1014.30H2064.5M1746.35 747.0V1332.0M1357.5 1019.35H2064.5M1751.40 747.0V1332.0M1357.5 1024.40H2064.5M1756.45 747.0V1332.0M1357.5 1029.45H2064.5M1766.55 747.0V1332.0M1357.5 1039.55H2064.5M1771.60 747.0V1332.0M1357.5 1044.60H2064.5M1776.65 747.0V1332.0M1357.5 1049.65H2064.5M1781.70 747.0V1332.0M1357.5 1054.70H2064.5M1791.80 747.0V1332.0M1357.5 1064.80H2064.5M1796.85 747.0V1332.0M1357.5 1069.85H2064.5M1801.90 747.0V1332.0M1357.5 1074.90H2064.5M1806.95 747.0V1332.0M1357.5 1079.95H2064.5M1817.05 747.0V1332.0M1357.5 1090.05H2064.5M1822.10 747.0V1332.0M1357.5 1095.10H2064.5M1827.15 747.0V1332.0M1357.5 1100.15H2064.5M1832.20 747.0V1332.0M1357.5 1105.20H2064.5M1842.30 747.0V1332.0M1357.5 1115.30H2064.5M1847.35 747.0V1332.0M1357.5 1120.35H2064.5M1852.40 747.0V1332.0M1357.5 1125.40H2064.5M1857.45 747.0V1332.0M1357.5 1130.45H2064.5M1867.55 747.0V1332.0M1357.5 1140.55H2064.5M1872.60 747.0V1332.0M1357.5 1145.60H2064.5M1877.65 747.0V1332.0M1357.5 1150.65H2064.5M1882.70 747.0V1332.0M1357.5 1155.70H2064.5M1892.80 747.0V1332.0M1357.5 1165.80H2064.5M1897.85 747.0V1332.0M1357.5 1170.85H2064.5M1902.90 747.0V1332.0M1357.5 1175.90H2064.5M1907.95 747.0V1332.0M1357.5 1180.95H2064.5M1918.05 747.0V1332.0M1357.5 1191.05H2064.5M1923.10 747.0V1332.0M1357.5 1196.10H2064.5M1928.15 747.0V1332.0M1357.5 1201.15H2064.5M1933.20 747.0V1332.0M1357.5 1206.20H2064.5M1943.30 747.0V1332.0M1357.5 1216.30H2064.5M1948.35 747.0V1332.0M1357.5 1221.35H2064.5M1953.40 747.0V1332.0M1357.5 1226.40H2064.5M1958.45 747.0V1332.0M1357.5 1231.45H2064.5M1968.55 747.0V1332.0M1357.5 1241.55H2064.5M1973.60 747.0V1332.0M1357.5 1246.60H2064.5M1978.65 747.0V1332.0M1357.5 1251.65H2064.5M1983.70 747.0V1332.0M1357.5 1256.70H2064.5M1993.80 747.0V1332.0M1357.5 1266.80H2064.5M1998.85 747.0V1332.0M1357.5 1271.85H2064.5M2003.90 747.0V1332.0M1357.5 1276.90H2064.5M2008.95 747.0V1332.0M1357.5 1281.95H2064.5M2019.05 747.0V1332.0M1357.5 1292.05H2064.5M2024.10 747.0V1332.0M1357.5 1297.10H2064.5M2029.15 747.0V1332.0M1357.5 1302.15H2064.5M2034.20 747.0V1332.0M1357.5 1307.20H2064.5M2044.30 747.0V1332.0M1357.5 1317.30H2064.5M2049.35 747.0V1332.0M1357.5 1322.35H2064.5M2054.40 747.0V1332.0M1357.5 1327.40H2064.5M2059.45 747.0V1332.0" stroke="#9097a0" stroke-width="1"/><path d="M1357.50 747.0V1332.0M1382.75 747.0V1332.0M1408.00 747.0V1332.0M1433.25 747.0V1332.0M1458.50 747.0V1332.0M1483.75 747.0V1332.0M1357.5 756.75H2064.5M1509.00 747.0V1332.0M1357.5 782.00H2064.5M1534.25 747.0V1332.0M1357.5 807.25H2064.5M1559.50 747.0V1332.0M1357.5 832.50H2064.5M1584.75 747.0V1332.0M1357.5 857.75H2064.5M1610.00 747.0V1332.0M1357.5 883.00H2064.5M1635.25 747.0V1332.0M1357.5 908.25H2064.5M1660.50 747.0V1332.0M1357.5 933.50H2064.5M1685.75 747.0V1332.0M1357.5 958.75H2064.5M1711.00 747.0V1332.0M1357.5 984.00H2064.5M1736.25 747.0V1332.0M1357.5 1009.25H2064.5M1761.50 747.0V1332.0M1357.5 1034.50H2064.5M1786.75 747.0V1332.0M1357.5 1059.75H2064.5M1812.00 747.0V1332.0M1357.5 1085.00H2064.5M1837.25 747.0V1332.0M1357.5 1110.25H2064.5M1862.50 747.0V1332.0M1357.5 1135.50H2064.5M1887.75 747.0V1332.0M1357.5 1160.75H2064.5M1913.00 747.0V1332.0M1357.5 1186.00H2064.5M1938.25 747.0V1332.0M1357.5 1211.25H2064.5M1963.50 747.0V1332.0M1357.5 1236.50H2064.5M1988.75 747.0V1332.0M1357.5 1261.75H2064.5M2014.00 747.0V1332.0M1357.5 1287.00H2064.5M2039.25 747.0V1332.0M1357.5 1312.25H2064.5M2064.50 747.0V1332.0" stroke="#82878f" stroke-width="1.2"/>
<path d="M1711 747V984" stroke="#469646" stroke-width="2"/><path d="M1711 984H2064.5" stroke="#963c3c" stroke-width="2"/>
<use href="#drumbody" transform="translate(1711.0,984) rotate(90) scale(0.6547)"/><use href="#drumbody" transform="translate(1708.4,984) rotate(90) scale(0.6547)"/><use href="#silbowl" transform="translate(1709.5,984) rotate(90) scale(0.6547)" fill="#000" fill-opacity="0.300"/><use href="#silneck" transform="translate(1709.5,984) rotate(90) scale(0.6547)" fill="#000" fill-opacity="0.180"/><path d="M1722 961.5L1831 945.5M1722 971.5L1831 925.5M1722 996.5L1831 1022.5M1722 1006.5L1831 1042.5M1722 984L1831 984M1699 966L1589 940M1699 1003L1589 1029M1699 975L1589 962M1699 994L1589 1007" stroke="#000" fill="none" stroke-linecap="round" stroke-linejoin="round" stroke-width="6" stroke-opacity="0.920"/><path d="M1604 984H1700" stroke="#000" stroke-width="9"/><path d="M1617 984H1658M1666 984H1692" stroke="#9da3ab" stroke-opacity="0.850" stroke-width="2.600" stroke-dasharray="2 1.500"/><path d="M1724 984H1800" stroke="#000" stroke-opacity="0.550" stroke-width="6" stroke-dasharray="2 1.500"/><path d="M1568 890Q1566 984 1568 1078Q1569 1092 1580 1092Q1589 1092 1588.500 1078V890Q1589 876 1579 876Q1568 876 1568 890z" fill="#000"/><path d="M1831 894V1075Q1831 1087 1842 1087Q1853 1087 1853 1075Q1855 984 1853 894Q1853 881 1842 881Q1831 881 1831 894z" fill="#000"/><path d="M1571.500 930V1040M1849.500 930V1040M1846 960V1010" stroke="#9da3ab" stroke-opacity="0.500" stroke-dasharray="3 3"/><path d="M1584 1088L1607 1090L1607 1070L1588 1075z" fill="#000"/><circle cx="1607.500" cy="1080" r="10.500" fill="#000"/><path d="M1610 1084.5a4.500 4.500 0 1 1 0 -9" stroke="#9da3ab" stroke-width="1.500" fill="none"/><path d="M1592 1084L1600 1078" stroke="#9da3ab" stroke-opacity="0.500" stroke-width="2"/><circle cx="1815" cy="1072.5" r="10.500" fill="#000"/><path d="M1822 1079L1834 1082L1834 1068L1822 1066z" fill="#000"/><path d="M1820 1076q3 3 1 7" stroke="#9da3ab" stroke-opacity="0.700" stroke-width="1.300" fill="none"/><path d="M1615 1080L1698 1077M1723 1077L1806 1074.5" stroke="#000" fill="none" stroke-linecap="round" stroke-linejoin="round" stroke-width="7.500"/><path d="M1589 1057L1698 1055M1589 1048.5L1698 1044" stroke="#000" fill="none" stroke-linecap="round" stroke-linejoin="round" stroke-width="8.500"/><path d="M1589 1062H1640V1043H1589z" fill="#000"/><path d="M1724 1055L1808 1068M1724 1046L1762 1034" stroke="#000" fill="none" stroke-linecap="round" stroke-linejoin="round" stroke-width="7"/><rect x="1697.500" y="1071.5" width="26" height="11.0" rx="2" fill="#9da3ab" stroke="#000" stroke-width="3"/><path d="M1700 1073.5L1721 1080.5M1700 1080.5L1721 1073.5" stroke="#000" stroke-width="1.2"/><rect x="1697.500" y="1038" width="26" height="23.5" rx="2" fill="#9da3ab" stroke="#000" stroke-width="3"/><path d="M1698 1043.5h25M1698 1055.5h25" stroke="#000" stroke-width="2.500"/><path d="M1700 1043.5L1721 1055.5M1700 1055.5L1721 1043.5M1700 1040L1721 1042.5M1700 1056.5L1721 1059.5" stroke="#000" stroke-width="1.2"/><path d="M1584 880L1607 878L1607 898L1588 893z" fill="#000"/><circle cx="1607.500" cy="888" r="10.500" fill="#000"/><path d="M1610 883.5a4.500 4.500 0 1 0 0 9" stroke="#9da3ab" stroke-width="1.500" fill="none"/><path d="M1592 884L1600 890" stroke="#9da3ab" stroke-opacity="0.500" stroke-width="2"/><circle cx="1815" cy="895.5" r="10.500" fill="#000"/><path d="M1822 889L1834 886L1834 900L1822 902z" fill="#000"/><path d="M1820 892q3 3 1 7" stroke="#9da3ab" stroke-opacity="0.700" stroke-width="1.300" fill="none"/><path d="M1615 888L1698 891M1723 891L1806 893.5" stroke="#000" fill="none" stroke-linecap="round" stroke-linejoin="round" stroke-width="7.500"/><path d="M1589 911L1698 913M1589 919.5L1698 924" stroke="#000" fill="none" stroke-linecap="round" stroke-linejoin="round" stroke-width="8.500"/><path d="M1589 906H1640V925H1589z" fill="#000"/><path d="M1724 913L1808 900M1724 922L1762 934" stroke="#000" fill="none" stroke-linecap="round" stroke-linejoin="round" stroke-width="7"/><rect x="1697.500" y="885.5" width="26" height="11.0" rx="2" fill="#9da3ab" stroke="#000" stroke-width="3"/><path d="M1700 887.5L1721 894.5M1700 894.5L1721 887.5" stroke="#000" stroke-width="1.2"/><rect x="1697.500" y="906.5" width="26" height="23.5" rx="2" fill="#9da3ab" stroke="#000" stroke-width="3"/><path d="M1698 912.5h25M1698 924.5h25" stroke="#000" stroke-width="2.500"/><path d="M1700 912.5L1721 924.5M1700 924.5L1721 912.5M1700 908.5L1721 911.5M1700 925.5L1721 928" stroke="#000" stroke-width="1.2"/><rect x="1700.500" y="948" width="18.500" height="72" rx="9" fill="#000"/><rect x="1585" y="843" width="44" height="8" fill="#9da3ab" stroke="#000" stroke-width="2"/><path d="M1586 850L1628 846" stroke="#000" stroke-width="1"/><rect x="1628" y="837" width="9.500" height="22" rx="3" fill="#000"/><path d="M1632.700 840v16" stroke="#9da3ab" stroke-opacity="0.600" stroke-dasharray="1.500 2.500"/><path d="M1637 840L1820 843.500V852L1637 856z" fill="#000"/><path d="M1642 844.500H1700M1642 848H1740M1642 851.500H1700" stroke="#9da3ab" stroke-opacity="0.550" stroke-width="0.800" stroke-dasharray="9 4 14 3"/><ellipse cx="1830.500" cy="847.500" rx="11.500" ry="15" fill="#000"/><path d="M1823.1 843.9h1.300M1823.1 847.5h1.300M1823.1 851.1h1.300M1826.5 836.7h1.300M1826.5 840.3h1.300M1826.5 843.9h1.300M1826.5 847.5h1.300M1826.5 851.1h1.300M1826.5 854.7h1.300M1826.5 858.3h1.300M1829.9 836.7h1.300M1829.9 840.3h1.300M1829.9 843.9h1.300M1829.9 847.5h1.300M1829.9 851.1h1.300M1829.9 854.7h1.300M1829.9 858.3h1.300M1833.3 836.7h1.300M1833.3 840.3h1.300M1833.3 843.9h1.300M1833.3 847.5h1.300M1833.3 851.1h1.300M1833.3 854.7h1.300M1833.3 858.3h1.300M1836.7 843.9h1.300M1836.7 847.5h1.300M1836.7 851.1h1.300" stroke="#9da3ab" stroke-opacity="0.750" stroke-width="1.300"/>
</g>
<g clip-path="url(#cP)">
<path d="M1654.3 521.4L1707.1 582.9M1654.3 521.4L1797.9 498.6M1660.7 520.4L1714.1 581.7M1655.8 523.2L1799.8 500.2M1666.9 519.4L1720.9 580.5M1657.4 525.0L1801.7 501.9M1673.0 518.4L1727.6 579.3M1658.9 526.8L1803.7 503.5M1679.1 517.5L1734.2 578.1M1660.5 528.6L1805.7 505.2M1685.0 516.5L1740.7 576.9M1662.1 530.5L1807.7 507.0M1690.8 515.6L1747.1 575.8M1663.8 532.4L1809.8 508.7M1696.5 514.7L1753.3 574.7M1665.4 534.3L1811.9 510.5M1702.2 513.8L1759.5 573.6M1667.1 536.3L1814.0 512.3M1707.7 512.9L1765.6 572.5M1668.8 538.3L1816.1 514.1M1713.2 512.1L1771.5 571.5M1670.5 540.3L1818.3 516.0M1718.5 511.2L1777.4 570.4M1672.3 542.4L1820.5 517.8M1723.8 510.4L1783.2 569.4M1674.1 544.5L1822.8 519.8M1729.0 509.5L1788.8 568.4M1675.9 546.6L1825.1 521.7M1734.1 508.7L1794.4 567.4M1677.8 548.7L1827.4 523.7M1739.1 507.9L1799.9 566.4M1679.6 550.9L1829.8 525.7M1744.0 507.1L1805.3 565.5M1681.6 553.1L1832.2 527.7M1748.9 506.4L1810.7 564.5M1683.5 555.4L1834.6 529.8M1753.7 505.6L1815.9 563.6M1685.5 557.7L1837.1 531.9M1758.4 504.9L1821.1 562.7M1687.5 560.0L1839.6 534.0M1763.1 504.1L1826.2 561.8M1689.5 562.4L1842.2 536.2M1767.7 503.4L1831.2 560.9M1691.6 564.8L1844.8 538.4M1772.2 502.7L1836.1 560.0M1693.7 567.3L1847.4 540.7M1776.6 502.0L1841.0 559.1M1695.8 569.8L1850.1 542.9M1781.0 501.3L1845.8 558.3M1698.0 572.3L1852.9 545.3M1785.3 500.6L1850.5 557.4M1700.2 574.9L1855.6 547.6M1789.6 499.9L1855.2 556.6M1702.5 577.5L1858.5 550.1M1793.8 499.3L1859.8 555.8M1704.8 580.2L1861.4 552.5M1797.9 498.6L1864.3 555.0M1707.1 582.9L1864.3 555.0" stroke="#858a92" stroke-width="0.900"/><path d="M1679.300 550L1718.600 545" stroke="#4caf4c" stroke-width="2"/><path d="M1707.1 500.0L1714.3 502.9L1718.6 506.4L1725.7 506.4L1728.6 510.0L1744.3 507.1L1747.1 501.4L1755.0 496.4L1761.4 492.1L1767.1 495.0L1770.0 501.4L1780.7 501.4L1781.4 505.0L1773.6 506.4L1773.6 510.0L1784.3 510.0L1788.6 515.7L1792.1 525.7L1794.3 540.0L1791.4 552.9L1787.1 555.7L1777.1 552.9L1755.7 560.0L1737.1 565.7L1730.7 567.1L1725.7 562.9L1721.4 552.9L1718.6 542.9L1714.3 546.4L1710.0 545.0L1705.0 534.3L1701.7 520.0L1702.1 507.1L1705.0 501.4z" fill="#000" stroke="#000" stroke-width="1.500" stroke-linejoin="round"/><ellipse cx="1708.500" cy="523.500" rx="7.500" ry="23" transform="rotate(-8 1708.500 523.500)" fill="#000"/><ellipse cx="1762" cy="503" rx="8" ry="11" transform="rotate(-12 1762 503)" fill="#000"/><ellipse cx="1722" cy="527" rx="8" ry="21" transform="rotate(-8 1722 527)" fill="#000"/><path d="M1742.9 555.0L1777.1 550.7L1758.6 554.3z" fill="#9da3ab" fill-opacity="0.700"/><path d="M1737.1 561.4L1751.4 556.4L1742.9 560.7z" fill="#9da3ab" fill-opacity="0.700"/>
</g>
<path d="M1210.500 157V1332M1213.500 157V1332M65 743.500H2359M65 746.500H2359" stroke="#c6cce0" stroke-width="1"/>
<path d="M65 157h47v15l-4 3.500H65z" fill="#ccd0d7"/><path d="M101.5 159v14" stroke="#3a3d44" stroke-width="1"/><path d="M103 164.5h7l-3.500 4z" fill="#3a3d44"/>
<path d="M1214 157h91v15l-4 3.500H1214z" fill="#ccd0d7"/><path d="M1294.5 159v14" stroke="#3a3d44" stroke-width="1"/><path d="M1296 164.5h7l-3.500 4z" fill="#3a3d44"/>
<path d="M65 747h55v15l-4 3.500H65z" fill="#8ca8c8"/><path d="M109.5 749v14" stroke="#000" stroke-width="1"/><path d="M111 754.5h7l-3.500 4z" fill="#000"/>
<path d="M1214 747h55v15l-4 3.500H1214z" fill="#ccd0d7"/><path d="M1258.5 749v14" stroke="#3a3d44" stroke-width="1"/><path d="M1260 754.5h7l-3.500 4z" fill="#3a3d44"/>
<path d="M101.5 677.0V707.5H130.5" stroke="#55585e" stroke-width="1"/><text x="104.0" y="677.0" font-size="12" fill="#55585e">y</text><text x="133.5" y="708.0" font-size="12" fill="#55585e">x</text>
<path d="M101.5 1266.0V1296.5H130.5" stroke="#55585e" stroke-width="1"/><text x="104.0" y="1266.0" font-size="12" fill="#55585e">z</text><text x="133.5" y="1297.0" font-size="12" fill="#55585e">x</text>
<path d="M1250.5 1266.0V1296.5H1279.5" stroke="#55585e" stroke-width="1"/><text x="1253.0" y="1266.0" font-size="12" fill="#55585e">z</text><text x="1282.5" y="1297.0" font-size="12" fill="#55585e">y</text>
<path d="M1250.500 683v22.500M1250.500 705.500l-21 5M1250.500 705.500l-7.500-6" stroke="#55585e" stroke-width="1"/><text x="1252" y="679" font-size="12" fill="#55585e">z</text><text x="1223" y="712" font-size="12" fill="#55585e">y</text><text x="1240" y="700" font-size="12" fill="#55585e">x</text>
</svg>
<div style="position:absolute;left:2367px;top:185px;width:191px;height:1164px;background:#f7f7f9;border:1px solid #b9c2d9"></div>
<div style="position:absolute;left:2372px;top:189px;width:24px;height:24px;background:#c9dcee;border:1px solid #2f76c0"></div>
<div style="position:absolute;left:2402px;top:189px;width:24px;height:24px;background:#e3e3e3;border:1px solid #f3f3f3"></div>
<div style="position:absolute;left:2371px;top:220px;width:182px;height:483px;background:#f3f3f4;"></div>
<div style="position:absolute;left:2371px;top:220px;width:182px;height:26px;background:#f7f7f8;border-top:1px solid #e6e6e8;border-bottom:1px solid #e6e6e8;box-sizing:border-box"></div>
<div style="position:absolute;left:2371px;top:246px;width:19px;height:21px;background:#f0f0f1;"></div>
<div style="position:absolute;left:2390px;top:246px;width:73px;height:21px;background:#fff;"></div>
<div style="position:absolute;left:2463px;top:246px;width:90px;height:21px;background:#fff;"></div>
<div style="position:absolute;left:2371px;top:266px;width:182px;height:1px;background:#e6e6e8;"></div>
<div style="position:absolute;left:2462px;top:246px;width:1px;height:21px;background:#e6e6e8;"></div>
<div style="position:absolute;left:2371px;top:267px;width:19px;height:21px;background:#f0f0f1;"></div>
<div style="position:absolute;left:2390px;top:267px;width:73px;height:21px;background:#fff;"></div>
<div style="position:absolute;left:2463px;top:267px;width:90px;height:21px;background:#fff;"></div>
<div style="position:absolute;left:2371px;top:287px;width:182px;height:1px;background:#e6e6e8;"></div>
<div style="position:absolute;left:2462px;top:267px;width:1px;height:21px;background:#e6e6e8;"></div>
<div style="position:absolute;left:2371px;top:288px;width:19px;height:21px;background:#f0f0f1;"></div>
<div style="position:absolute;left:2390px;top:288px;width:73px;height:21px;background:#fff;"></div>
<div style="position:absolute;left:2463px;top:288px;width:90px;height:21px;background:#fff;"></div>
<div style="position:absolute;left:2371px;top:308px;width:182px;height:1px;background:#e6e6e8;"></div>
<div style="position:absolute;left:2462px;top:288px;width:1px;height:21px;background:#e6e6e8;"></div>
<div style="position:absolute;left:2371px;top:309px;width:19px;height:21px;background:#f0f0f1;"></div>
<div style="position:absolute;left:2390px;top:309px;width:73px;height:21px;background:#fff;"></div>
<div style="position:absolute;left:2463px;top:309px;width:90px;height:21px;background:#fff;"></div>
<div style="position:absolute;left:2371px;top:329px;width:182px;height:1px;background:#e6e6e8;"></div>
<div style="position:absolute;left:2462px;top:309px;width:1px;height:21px;background:#e6e6e8;"></div>
<div style="position:absolute;left:2371px;top:330px;width:182px;height:25px;background:#f7f7f8;border-top:1px solid #e6e6e8;border-bottom:1px solid #e6e6e8;box-sizing:border-box"></div>
<div style="position:absolute;left:2371px;top:355px;width:19px;height:21px;background:#f0f0f1;"></div>
<div style="position:absolute;left:2390px;top:355px;width:73px;height:21px;background:#fff;"></div>
<div style="position:absolute;left:2463px;top:355px;width:90px;height:21px;background:#ecedf0;"></div>
<div style="position:absolute;left:2371px;top:375px;width:182px;height:1px;background:#e6e6e8;"></div>
<div style="position:absolute;left:2462px;top:355px;width:1px;height:21px;background:#e6e6e8;"></div>
<div style="position:absolute;left:2371px;top:376px;width:19px;height:21px;background:#f0f0f1;"></div>
<div style="position:absolute;left:2390px;top:376px;width:73px;height:21px;background:#fff;"></div>
<div style="position:absolute;left:2463px;top:376px;width:90px;height:21px;background:#fff;"></div>
<div style="position:absolute;left:2371px;top:396px;width:182px;height:1px;background:#e6e6e8;"></div>
<div style="position:absolute;left:2462px;top:376px;width:1px;height:21px;background:#e6e6e8;"></div>
<div style="position:absolute;left:2371px;top:397px;width:19px;height:21px;background:#f0f0f1;"></div>
<div style="position:absolute;left:2390px;top:397px;width:73px;height:21px;background:#fff;"></div>
<div style="position:absolute;left:2463px;top:397px;width:90px;height:21px;background:#fff;"></div>
<div style="position:absolute;left:2371px;top:417px;width:182px;height:1px;background:#e6e6e8;"></div>
<div style="position:absolute;left:2462px;top:397px;width:1px;height:21px;background:#e6e6e8;"></div>
<div style="position:absolute;left:2371px;top:418px;width:19px;height:21px;background:#f0f0f1;"></div>
<div style="position:absolute;left:2390px;top:418px;width:73px;height:21px;background:#fff;"></div>
<div style="position:absolute;left:2463px;top:418px;width:90px;height:21px;background:#fff;"></div>
<div style="position:absolute;left:2371px;top:438px;width:182px;height:1px;background:#e6e6e8;"></div>
<div style="position:absolute;left:2462px;top:418px;width:1px;height:21px;background:#e6e6e8;"></div>
<div style="position:absolute;left:2371px;top:439px;width:19px;height:21px;background:#f0f0f1;"></div>
<div style="position:absolute;left:2390px;top:439px;width:73px;height:21px;background:#fff;"></div>
<div style="position:absolute;left:2463px;top:439px;width:90px;height:21px;background:#fff;"></div>
<div style="position:absolute;left:2371px;top:459px;width:182px;height:1px;background:#e6e6e8;"></div>
<div style="position:absolute;left:2462px;top:439px;width:1px;height:21px;background:#e6e6e8;"></div>
<div style="position:absolute;left:2371px;top:460px;width:19px;height:21px;background:#f0f0f1;"></div>
<div style="position:absolute;left:2390px;top:460px;width:73px;height:21px;background:#fff;"></div>
<div style="position:absolute;left:2463px;top:460px;width:90px;height:21px;background:#ecedf0;"></div>
<div style="position:absolute;left:2371px;top:480px;width:182px;height:1px;background:#e6e6e8;"></div>
<div style="position:absolute;left:2462px;top:460px;width:1px;height:21px;background:#e6e6e8;"></div>
<div style="position:absolute;left:2371px;top:481px;width:19px;height:21px;background:#f0f0f1;"></div>
<div style="position:absolute;left:2390px;top:481px;width:73px;height:21px;background:#fff;"></div>
<div style="position:absolute;left:2463px;top:481px;width:90px;height:21px;background:#fff;"></div>
<div style="position:absolute;left:2371px;top:501px;width:182px;height:1px;background:#e6e6e8;"></div>
<div style="position:absolute;left:2462px;top:481px;width:1px;height:21px;background:#e6e6e8;"></div>
<div style="position:absolute;left:2371px;top:502px;width:182px;height:27px;background:#f7f7f8;border-top:1px solid #e6e6e8;border-bottom:1px solid #e6e6e8;box-sizing:border-box"></div>
<div style="position:absolute;left:2371px;top:529px;width:19px;height:21px;background:#f0f0f1;"></div>
<div style="position:absolute;left:2390px;top:529px;width:73px;height:21px;background:#fff;"></div>
<div style="position:absolute;left:2463px;top:529px;width:90px;height:21px;background:#fff;"></div>
<div style="position:absolute;left:2371px;top:549px;width:182px;height:1px;background:#e6e6e8;"></div>
<div style="position:absolute;left:2462px;top:529px;width:1px;height:21px;background:#e6e6e8;"></div>
<div style="position:absolute;left:2371px;top:550px;width:19px;height:21px;background:#f0f0f1;"></div>
<div style="position:absolute;left:2390px;top:550px;width:73px;height:21px;background:#fff;"></div>
<div style="position:absolute;left:2463px;top:550px;width:90px;height:21px;background:#fff;"></div>
<div style="position:absolute;left:2371px;top:570px;width:182px;height:1px;background:#e6e6e8;"></div>
<div style="position:absolute;left:2462px;top:550px;width:1px;height:21px;background:#e6e6e8;"></div>
<div style="position:absolute;left:2371px;top:571px;width:19px;height:21px;background:#f0f0f1;"></div>
<div style="position:absolute;left:2390px;top:571px;width:73px;height:21px;background:#fff;"></div>
<div style="position:absolute;left:2463px;top:571px;width:90px;height:21px;background:#fff;"></div>
<div style="position:absolute;left:2371px;top:591px;width:182px;height:1px;background:#e6e6e8;"></div>
<div style="position:absolute;left:2462px;top:571px;width:1px;height:21px;background:#e6e6e8;"></div>
<div style="position:absolute;left:2371px;top:592px;width:19px;height:21px;background:#f0f0f1;"></div>
<div style="position:absolute;left:2390px;top:592px;width:73px;height:21px;background:#fff;"></div>
<div style="position:absolute;left:2463px;top:592px;width:90px;height:21px;background:#fff;"></div>
<div style="position:absolute;left:2371px;top:612px;width:182px;height:1px;background:#e6e6e8;"></div>
<div style="position:absolute;left:2462px;top:592px;width:1px;height:21px;background:#e6e6e8;"></div>
<div style="position:absolute;left:2371px;top:613px;width:182px;height:26px;background:#f7f7f8;border-top:1px solid #e6e6e8;border-bottom:1px solid #e6e6e8;box-sizing:border-box"></div>
<div style="position:absolute;left:2371px;top:639px;width:19px;height:21px;background:#f0f0f1;"></div>
<div style="position:absolute;left:2390px;top:639px;width:73px;height:21px;background:#fff;"></div>
<div style="position:absolute;left:2463px;top:639px;width:90px;height:21px;background:#fff;"></div>
<div style="position:absolute;left:2371px;top:659px;width:182px;height:1px;background:#e6e6e8;"></div>
<div style="position:absolute;left:2462px;top:639px;width:1px;height:21px;background:#e6e6e8;"></div>
<div style="position:absolute;left:2371px;top:660px;width:19px;height:21px;background:#f0f0f1;"></div>
<div style="position:absolute;left:2390px;top:660px;width:73px;height:21px;background:#fff;"></div>
<div style="position:absolute;left:2463px;top:660px;width:90px;height:21px;background:#fff;"></div>
<div style="position:absolute;left:2371px;top:680px;width:182px;height:1px;background:#e6e6e8;"></div>
<div style="position:absolute;left:2462px;top:660px;width:1px;height:21px;background:#e6e6e8;"></div>
<div style="position:absolute;left:2371px;top:681px;width:19px;height:21px;background:#f0f0f1;"></div>
<div style="position:absolute;left:2390px;top:681px;width:73px;height:21px;background:#fff;"></div>
<div style="position:absolute;left:2463px;top:681px;width:90px;height:21px;background:#fff;"></div>
<div style="position:absolute;left:2371px;top:701px;width:182px;height:1px;background:#e6e6e8;"></div>
<div style="position:absolute;left:2462px;top:681px;width:1px;height:21px;background:#e6e6e8;"></div>
<div style="position:absolute;left:2371px;top:220px;width:1px;height:483px;background:#e6e6e8;"></div>
<div style="position:absolute;left:2552px;top:220px;width:1px;height:483px;background:#e6e6e8;"></div>
<div style="position:absolute;left:2532px;top:310px;width:19px;height:20px;background:#e1e1e1;border-left:1px solid #adadad;border-top:1px solid #adadad"></div>
<div style="position:absolute;left:2464px;top:483px;width:86px;height:17px;background:#e1e1e1;border:1px solid #adadad"></div>
<div style="position:absolute;left:2464px;top:594px;width:86px;height:17px;background:#e1e1e1;border:1px solid #adadad"></div>
<div style="position:absolute;left:2533px;top:641px;width:17px;height:17px;background:#e1e1e1;border:1px solid #adadad"></div>
<div style="position:absolute;left:2465px;top:665px;width:11px;height:11px;background:#fff;border:1px solid #333"></div>
<div style="position:absolute;left:2465px;top:686px;width:11px;height:11px;background:#fff;border:1px solid #333"></div>
<svg style="position:absolute;left:2360px;top:150px" width="200" height="560" viewBox="2360 150 200 560" fill="none"><path d="M2502.5 185V168Q2502.5 165.5 2505 165.5H2518Q2520 165.500 2522 168L2539 185" fill="#e6e7ea" stroke="#c3cade"/><path d="M2475.5 185V168Q2475.5 165.5 2478 165.5H2491Q2493 165.500 2495 168L2512 185" fill="#e6e7ea" stroke="#c3cade"/><path d="M2448.5 185V168Q2448.5 165.5 2451 165.5H2464Q2466 165.500 2468 168L2485 185" fill="#e6e7ea" stroke="#c3cade"/><path d="M2421.5 185V168Q2421.5 165.5 2424 165.5H2437Q2439 165.500 2441 168L2458 185" fill="#e6e7ea" stroke="#c3cade"/><path d="M2394.5 185V168Q2394.5 165.5 2397 165.5H2410Q2412 165.500 2414 168L2431 185" fill="#e6e7ea" stroke="#c3cade"/><path d="M2367.5 186V168Q2367.5 165.5 2370 165.5H2383Q2385 165.500 2387 168L2404 185.500" fill="#f7f7f9" stroke="#c3cade"/><path d="M2537.5 318l4 4 4-4" stroke="#444" stroke-width="1.1"/><path d="M2467.5 671l3 3 5.5-6M2467.5 692l3 3 5.5-6" stroke="#222" stroke-width="1.2"/></svg>
<svg style="position:absolute;left:0;top:0" width="2560" height="1400" viewBox="0 0 2560 1400" fill="none">
<path d="M1040.0 117.5L1047.5 103Q1048.3 101.5 1050.0 101.5H1112.5Q1115.5 101.5 1115.5 104.5V117.5Z" fill="#dcdcde" stroke="#c3cade"/>
<path d="M977.0 117.5L984.5 103Q985.3 101.5 987.0 101.5H1039.5Q1042.5 101.5 1042.5 104.5V117.5Z" fill="#dcdcde" stroke="#c3cade"/>
<path d="M888.0 117.5L895.5 103Q896.3 101.5 898.0 101.5H975.5Q978.5 101.5 978.5 104.5V117.5Z" fill="#dcdcde" stroke="#c3cade"/>
<path d="M808.0 117.5L815.5 103Q816.3 101.5 818.0 101.5H887.5Q890.5 101.5 890.5 104.5V117.5Z" fill="#dcdcde" stroke="#c3cade"/>
<path d="M731.0 117.5L738.5 103Q739.3 101.5 741.0 101.5H807.5Q810.5 101.5 810.5 104.5V117.5Z" fill="#dcdcde" stroke="#c3cade"/>
<path d="M641.0 117.5L648.5 103Q649.3 101.5 651.0 101.5H730.5Q733.5 101.5 733.5 104.5V117.5Z" fill="#dcdcde" stroke="#c3cade"/>
<path d="M560.0 117.5L567.5 103Q568.3 101.5 570.0 101.5H640.5Q643.5 101.5 643.5 104.5V117.5Z" fill="#dcdcde" stroke="#c3cade"/>
<path d="M485.0 117.5L492.5 103Q493.3 101.5 495.0 101.5H557.5Q560.5 101.5 560.5 104.5V117.5Z" fill="#dcdcde" stroke="#c3cade"/>
<path d="M420.0 117.5L427.5 103Q428.3 101.5 430.0 101.5H483.5Q486.5 101.5 486.5 104.5V117.5Z" fill="#dcdcde" stroke="#c3cade"/>
<path d="M314.0 117.5L321.5 103Q322.3 101.5 324.0 101.5H419.5Q422.5 101.5 422.5 104.5V117.5Z" fill="#dcdcde" stroke="#c3cade"/>
<path d="M261.0 117.5L268.5 103Q269.3 101.5 271.0 101.5H311.5Q314.5 101.5 314.5 104.5V117.5Z" fill="#dcdcde" stroke="#c3cade"/>
<path d="M202.0 117.5L209.5 103Q210.3 101.5 212.0 101.5H259.5Q262.5 101.5 262.5 104.5V117.5Z" fill="#dcdcde" stroke="#c3cade"/>
<path d="M138.0 117.5L145.5 103Q146.3 101.5 148.0 101.5H201.5Q204.5 101.5 204.5 104.5V117.5Z" fill="#dcdcde" stroke="#c3cade"/>
<path d="M75.0 117.5L82.5 103Q83.3 101.5 85.0 101.5H135.5Q138.5 101.5 138.5 104.5V117.5Z" fill="#dcdcde" stroke="#c3cade"/>
<path d="M7 117.5V109.5L13 102Q13.6 101.5 15 101.5H71.5Q74.5 101.5 74.5 104.5V117.5" fill="#ebecf0" stroke="#c3cade"/>
<path d="M7.5 117.5H74.0" stroke="#ebecf0" stroke-width="1.6"/>
<path d="M260.5 1334.5L267.5 1350Q268.3 1352 270.5 1352H282Q285 1352 285 1349V1334.5Z" fill="#ebecf0" stroke="#c3cade"/>
<path d="M216 1334.5L223 1350Q223.8 1352 226 1352H256.5Q259.5 1352 259.5 1349V1334.5Z" fill="#d6d7da" stroke="#c3cade"/>
<path d="M172.5 1334.5L179.5 1350Q180.3 1352 182.5 1352H212Q215 1352 215 1349V1334.5Z" fill="#f1f2f6" stroke="#c3cade"/>
<path d="M138.5 1334.5L145.5 1350Q146.3 1352 148.5 1352H169.5Q172.5 1352 172.5 1349V1334.5Z" fill="#d6d7da" stroke="#c3cade"/>
<path d="M64.5 1334.5L71.5 1350Q72.3 1352 74.5 1352H135.5Q138.5 1352 138.5 1349V1334.5Z" fill="#d6d7da" stroke="#c3cade"/>
<path d="M270.5 1343.5h6M273.5 1340.5v6" stroke="#777" stroke-width="3"/><path d="M271.5 1343.5h4M273.5 1341.5v4" stroke="#f4f4f4" stroke-width="1"/>
<path d="M2439 10.5h10" stroke="#000" stroke-width="1" fill="none"/><path d="M2484.5 7.5h8v8h-8zM2486.5 7.5v-2h8v8h-2" stroke="#000" stroke-width="1" fill="none"/><path d="M2530 5l10.5 10.5M2540.5 5l-10.5 10.5" stroke="#000" stroke-width="1.1" fill="none"/><path d="M2547 56l3.5-3.5 3.5 3.5M2547 64.5l3.5 3.5 3.5-3.5" stroke="#606060" stroke-width="1.8" fill="none"/><path d="M2544.5 76v7.5h13V76M2544.5 84.500h13v7h-13z" stroke="#adadad" fill="#f4f4f4"/><path d="M2548 81.500l2.500-3 2.500 3zM2548 86.500l2.500 3 2.500-3z" fill="#000"/>
<path d="M2556.8 106.6L2556.8 109.4L2554.9 109.8L2554.9 109.9L2556.0 111.5L2554.0 113.5L2552.4 112.4L2552.3 112.4L2551.9 114.3L2549.1 114.3L2548.7 112.4L2548.6 112.4L2547.0 113.5L2545.0 111.5L2546.1 109.9L2546.1 109.8L2544.2 109.4L2544.2 106.6L2546.1 106.2L2546.1 106.1L2545.0 104.5L2547.0 102.5L2548.6 103.6L2548.7 103.6L2549.1 101.7L2551.9 101.7L2552.3 103.6L2552.4 103.6L2554.0 102.5L2556.0 104.5L2554.9 106.1L2554.9 106.2Z" fill="none" stroke="#9a9a9a" stroke-width="1"/>
<circle cx="2550.5" cy="108" r="1.8" stroke="#9a9a9a"/>
<path d="M2556.8 174.6L2556.8 177.4L2554.9 177.8L2554.9 177.9L2556.0 179.5L2554.0 181.5L2552.4 180.4L2552.3 180.4L2551.9 182.3L2549.1 182.3L2548.7 180.4L2548.6 180.4L2547.0 181.5L2545.0 179.5L2546.1 177.9L2546.1 177.8L2544.2 177.4L2544.2 174.6L2546.1 174.2L2546.1 174.1L2545.0 172.5L2547.0 170.5L2548.6 171.6L2548.7 171.6L2549.1 169.7L2551.9 169.7L2552.3 171.6L2552.4 171.6L2554.0 170.5L2556.0 172.5L2554.9 174.1L2554.9 174.2Z" fill="#c4c4c4" stroke="none" stroke-width="1"/>
<circle cx="2550.5" cy="176" r="2" fill="#ebecf0"/>
</svg>
<svg style="position:absolute;left:0;top:0" width="2560" height="1400" viewBox="0 0 2560 1400" fill="none"><defs><linearGradient id="gp" x1="0" y1="0" x2="1" y2="1"><stop offset="0" stop-color="#fff"/><stop offset="1" stop-color="#d6d6d6"/></linearGradient><linearGradient id="gf" x1="0" y1="0" x2="0" y2="1"><stop offset="0" stop-color="#fff3a8"/><stop offset="1" stop-color="#f5a300"/></linearGradient><radialGradient id="gb" cx="0.4" cy="0.3" r="0.8"><stop offset="0" stop-color="#f6f6f6"/><stop offset="1" stop-color="#9b9b9b"/></radialGradient><radialGradient id="gs" cx="0.35" cy="0.3" r="0.8"><stop offset="0" stop-color="#fff"/><stop offset="0.450" stop-color="#b4b4b4"/><stop offset="0.850" stop-color="#484848"/><stop offset="1" stop-color="#222"/></radialGradient><radialGradient id="gbl" cx="0.35" cy="0.3" r="0.8"><stop offset="0" stop-color="#5b8cff"/><stop offset="0.5" stop-color="#0a3fc0"/><stop offset="1" stop-color="#00104a"/></radialGradient><radialGradient id="gh" cx="0.4" cy="0.3" r="0.8"><stop offset="0" stop-color="#6b8cff"/><stop offset="0.6" stop-color="#1c3fd0"/><stop offset="1" stop-color="#0a1a7a"/></radialGradient><radialGradient id="gg" cx="0.4" cy="0.35" r="0.8"><stop offset="0" stop-color="#cfe8b8"/><stop offset="0.7" stop-color="#8fb07a"/><stop offset="1" stop-color="#5a6a52"/></radialGradient><linearGradient id="gbs" x1="0" y1="0" x2="1" y2="1"><stop offset="0" stop-color="#b9c8ff"/><stop offset="1" stop-color="#2a48c8"/></linearGradient><radialGradient id="gbs2" cx="0.35" cy="0.3" r="0.8"><stop offset="0" stop-color="#dfe6ff"/><stop offset="0.5" stop-color="#6a86f0"/><stop offset="1" stop-color="#1a2a90"/></radialGradient><linearGradient id="gor" x1="0" y1="0" x2="0" y2="1"><stop offset="0" stop-color="#ffd23a"/><stop offset="1" stop-color="#f08a00"/></linearGradient><linearGradient id="ggr" x1="0" y1="0" x2="1" y2="1"><stop offset="0" stop-color="#f2f2f2"/><stop offset="1" stop-color="#8a8a8a"/></linearGradient><pattern id="pd" width="2.500" height="2.500" patternUnits="userSpaceOnUse"><rect width="2.500" height="2.500" fill="#e3e3e6"/><rect width="1" height="1" fill="#c4c4c8"/></pattern><linearGradient id="gw" gradientUnits="userSpaceOnUse" x1="2" y1="2" x2="22" y2="22"><stop offset="0" stop-color="#ff2a2a"/><stop offset="0.25" stop-color="#ffd000"/><stop offset="0.5" stop-color="#20c040"/><stop offset="0.75" stop-color="#2060ff"/><stop offset="1" stop-color="#c020c0"/></linearGradient></defs>
<g transform="translate(8,121)"><path d="M5.500 2.500h9.500l5 5v14.500h-14.500z" fill="url(#gp)" stroke="#000" stroke-width="1.500"/><path d="M15 2.500v5h5" fill="#fff" stroke="#000" stroke-width="1"/></g>
<g transform="translate(36,121)"><path d="M3.800 19.500V6.500l1.500-1.500h5l2 2h5.500v3.500" fill="#f7d553" stroke="#000" stroke-width="1.300"/><path d="M3.800 20L7.500 10.500h16l-4 9.500z" fill="url(#gf)" stroke="#000" stroke-width="1.300" stroke-linejoin="round"/></g>
<g transform="translate(64,121)"><path d="M4 3h17.500q1 0 1 1v15.500l-2 2H5q-1 0-1-1z" fill="#cbb963" stroke="#000" stroke-width="1.500"/><rect x="7" y="3.500" width="12" height="8.500" fill="#dcdcdc" stroke="#7d7448" stroke-width="0.600"/><rect x="8.500" y="14.500" width="10" height="7" fill="#9a9a9a" stroke="#000" stroke-width="0.800"/><rect x="10" y="16" width="2.500" height="4.500" fill="#b29a2e"/><path d="M24 18.500v5.500h-5.500z" fill="#6b6b6b"/></g>
<g transform="translate(92,121)"><path d="M6.500 10L9 3h11l-2.500 7" fill="#f6f6f6" stroke="#000" stroke-width="1.200"/><rect x="12" y="5.500" width="4" height="3" fill="#aaa"/><path d="M3 11.500h15l4-2.500v9l-4 3.500H3z" fill="#e8e8e8" stroke="#000" stroke-width="1.400" stroke-linejoin="round"/><path d="M18 11.500v10M22 9v9l-4 3.500" fill="#666" stroke="#000" stroke-width="1.200"/><path d="M18 12l4-2.500v8.500l-4 3.500z" fill="#555"/><path d="M3.500 14.500h14M3.500 18h14" stroke="#000" stroke-width="1.200"/></g>
<g transform="translate(120,121)"><path d="M5.500 3h9.500v4h4v11l-4 4H5.500z" fill="url(#gp)" stroke="#000" stroke-width="1.500"/><path d="M15 22v-4h4" fill="#fff" stroke="#000" stroke-width="1"/><path d="M11 5.500L16 1.500h6v4l-6 0.500-2 2.500z" fill="#e8e8e8" stroke="#444" stroke-width="0.800"/><rect x="22" y="0.500" width="2" height="5.500" fill="#000"/><path d="M11 6l3-2.500M12.500 7l3-2.500" stroke="#777" stroke-width="0.800"/></g>
<g transform="translate(148,121)"><path d="M7.500 3L16 15.500M16.500 3L8 15.500" stroke="#111" stroke-width="1.500" stroke-linecap="round"/><ellipse cx="6.500" cy="18.500" rx="1.800" ry="3.200" transform="rotate(35 6.500 18.500)" fill="none" stroke="#555a70" stroke-width="1"/><ellipse cx="17.500" cy="18.500" rx="1.800" ry="3.200" transform="rotate(-35 17.500 18.500)" fill="none" stroke="#555a70" stroke-width="1"/></g>
<g transform="translate(176,121)"><path d="M5.500 2.500h6l3 3v11h-9z" fill="url(#gp)" stroke="#000" stroke-width="1.300"/><path d="M9.500 7.500h6l3.500 3.500v11h-9.500z" fill="url(#gp)" stroke="#000" stroke-width="1.300"/><path d="M15.500 7.500v3.500h3.500" fill="none" stroke="#000" stroke-width="0.900"/></g>
<g transform="translate(204,121)"><rect x="5.500" y="3.500" width="13" height="18" rx="2" fill="#fdf19a" stroke="#000" stroke-width="1.600"/><path d="M8.500 3.500q0-2 3.500-2t3.500 2v1.500h-7z" fill="#ddd" stroke="#000" stroke-width="1"/></g>
<g transform="translate(232,121)"><path d="M19 14Q17 6.500 9 9.500" stroke="#000" stroke-width="3" fill="none"/><path d="M3.500 13.500L10 5.500l1.500 8z" fill="#000"/><path d="M24 18.500v5.500h-5.500z" fill="#6b6b6b"/></g>
<g transform="translate(260,121)"><path d="M8 21.500L4.500 14.500q-1.200-2.500 0.500-2.800t3 2.300V5.500q0-1.500 1.300-1.500t1.300 1.500V3.500q0-1.500 1.400-1.500t1.400 1.500v2q0-1.500 1.300-1.500t1.300 1.500v2.500q0-1.400 1.200-1.400t1.300 1.400V15q0 3-1.500 6.500z" fill="#fafafa" stroke="#000" stroke-width="1.100" stroke-linejoin="round"/><path d="M10.600 5.500v6M13.400 5.500v6M16 7v5" stroke="#000" stroke-width="0.900"/></g>
<g transform="translate(288,121)"><ellipse cx="12" cy="12" rx="10" ry="3.500" fill="none" stroke="#8a8a8a" stroke-width="0.900"/><ellipse cx="12" cy="12" rx="3.500" ry="10" fill="none" stroke="#8a8a8a" stroke-width="0.900"/><path d="M15.500 6.500v5l-2.500-1z M8.500 13.500h5l-1 2.500z M10 14.500l-3-1.500 3-1.500z M13.500 9l2-3 1 3z" fill="#000"/></g>
<g transform="translate(316,121)"><path d="M9.5 13.5L4.0 18.5" stroke="#000" stroke-width="2.2" stroke-linecap="round"/><circle cx="14" cy="9" r="6.3" fill="#f4f4f4" stroke="#222" stroke-width="1.1"/><path d="M11 7.500h6M14 4.800v5.400M11.500 12h5" stroke="#000" stroke-width="1"/></g>
<g transform="translate(344,121)"><rect x="9.500" y="2.500" width="12" height="10.500" fill="none" stroke="#000" stroke-width="1.200" stroke-dasharray="2 1.600"/><path d="M7.3 15.2L1.8 20.2" stroke="#000" stroke-width="2.2" stroke-linecap="round"/><circle cx="11.5" cy="11" r="5.8" fill="#f4f4f4" stroke="#222" stroke-width="1.1"/><path d="M8.500 13.500h2M12.500 13.500h2" stroke="#333" stroke-width="0.900"/></g>
<g transform="translate(372,121)"><path d="M2 2h5l-5 5zM22 2h-5l5 5zM2 22h5l-5-5zM22 22h-5l5-5z" fill="#000"/><path d="M8.1 15.4L2.6 20.4" stroke="#000" stroke-width="2.2" stroke-linecap="round"/><circle cx="13" cy="10.5" r="6.8" fill="#f4f4f4" stroke="#222" stroke-width="1.1"/></g>
<g transform="translate(400,121)"><path d="M9.0 14.5L3.5 19.5" stroke="#000" stroke-width="2.2" stroke-linecap="round"/><circle cx="14" cy="9.5" r="7" fill="#f4f4f4" stroke="#222" stroke-width="1.1"/><circle cx="15.500" cy="7.500" r="2.800" fill="#f5e63c" stroke="#8a7a00" stroke-width="0.600"/><circle cx="12.500" cy="11.500" r="2.800" fill="#f5e63c" stroke="#8a7a00" stroke-width="0.600"/></g>
<g transform="translate(428,121)"><path d="M19 7.500Q14 2 8 6" stroke="#000" stroke-width="2.800" fill="none"/><path d="M2.500 9.500L9.500 2.500l0.500 8z" fill="#000"/><path d="M11.2 16.8L5.7 21.8" stroke="#000" stroke-width="2.2" stroke-linecap="round"/><circle cx="14.5" cy="13.5" r="4.6" fill="#f4f4f4" stroke="#222" stroke-width="1.1"/><path d="M24 18.500v5.500h-5.500z" fill="#6b6b6b"/></g>
<g transform="translate(456,121)"><rect x="3" y="3" width="19" height="18" fill="#c9c9c9" stroke="#000" stroke-width="1.600"/><path d="M12.500 3v18M3 12h19" stroke="#000" stroke-width="1.600"/><rect x="13.500" y="3.800" width="3.500" height="1" fill="#1c2fa0"/><path d="M24 18.500v5.500h-5.500z" fill="#6b6b6b"/></g>
<g transform="translate(484,121)"><path d="M3 15.500h19" stroke="#999" stroke-width="0.800"/><path d="M3.500 13.500q0-2.500 3-3l2.500-3.500h6.500l1.500 3.500q3.500 0.500 3.500 3.500z" fill="#e02020" stroke="#8a0000" stroke-width="0.700"/><path d="M9.800 8h2.600v2.300H8.200zM13.200 8h2l1 2.300h-3z" fill="#f7f7f7"/><circle cx="7.500" cy="14" r="1.900" fill="#111"/><circle cx="17.500" cy="14" r="1.900" fill="#111"/><circle cx="7.500" cy="14" r="0.700" fill="#bbb"/><circle cx="17.500" cy="14" r="0.700" fill="#bbb"/><path d="M24 18.500v5.500h-5.500z" fill="#6b6b6b"/></g>
<g transform="translate(512,121)"><path d="M3 14.500L11 6.500l10 4.500-6.500 9z" fill="#eee" fill-opacity="0.500" stroke="#a8a8a8" stroke-width="0.800"/><path d="M5.500 12L16.800 17.500M8.300 9.300L19 14M7 17.500L16 8.500M11 19L18.500 10" stroke="#a8a8a8" stroke-width="0.800"/><path d="M11.500 13.500L18.500 16.500" stroke="#d03030" stroke-width="1.300"/><path d="M11.500 13.500L14.500 8.500" stroke="#2a9a2a" stroke-width="1.300"/><rect x="9.800" y="11.800" width="3.400" height="3.400" fill="#fff" stroke="#000" stroke-width="1.100"/><path d="M24 18.500v5.500h-5.500z" fill="#6b6b6b"/></g>
<g transform="translate(540,121)"><circle cx="11.500" cy="12" r="9" fill="none" stroke="#8c8c8c" stroke-width="1"/><path d="M12 12h9" stroke="#222" stroke-width="1.100"/><circle cx="11.500" cy="12" r="1.700" fill="#fff" stroke="#444" stroke-width="0.900"/><path d="M24 18.500v5.500h-5.500z" fill="#6b6b6b"/></g>
<g transform="translate(568,121)"><path d="M18 1.500h4v4M2 18v4h4" fill="none" stroke="#000" stroke-width="1.300"/><circle cx="8" cy="8.500" r="3.300" fill="#f7e21a" stroke="#c09000" stroke-width="0.800"/><rect x="13.500" y="7.500" width="6.500" height="6.500" fill="#f7e21a" stroke="#c08a00" stroke-width="0.900"/><path d="M11 14.500l3 5h-6z" fill="#fff3d0" stroke="#c06a10" stroke-width="1"/><path d="M24 18.500v5.500h-5.500z" fill="#6b6b6b"/></g>
<g transform="translate(596,121)"><path d="M12 2.500q6 0 6 5.500 0 3-2.300 5.500l-0.700 4h-6l-0.700-4Q6 11 6 8q0-5.500 6-5.500z" fill="url(#gb)" stroke="#6f6f6f" stroke-width="0.800"/><path d="M9.500 18h5v2.500q-2.500 1.800-5 0z" fill="#8a8a8a" stroke="#555" stroke-width="0.600"/><path d="M24 18.500v5.500h-5.500z" fill="#6b6b6b"/></g>
<g transform="translate(624,121)"><path d="M8.500 10V7q0-3.500 3.500-3.500t3.500 3.500v3" fill="none" stroke="#000" stroke-width="2"/><rect x="6.500" y="10" width="11" height="10" rx="1" fill="#e4e4e4" stroke="#000" stroke-width="1.400"/><path d="M8.500 13.500h7M8.500 16.500h7" stroke="#9a9a9a" stroke-width="1.300"/><path d="M24 18.500v5.500h-5.500z" fill="#6b6b6b"/></g>
<g transform="translate(652,121)"><path d="M4 4.500L12 3l8.500 2.500v3l-6 6.500L4 10z" fill="#f4581c"/><path d="M4 4.500L14.500 8l6-2.500" fill="none" stroke="#b23000" stroke-width="0.600"/><path d="M4 10l10.500 5 6-6.500v3l-6 6.500L4 13z" fill="#f3f3f3"/><path d="M4 13l10.500 5 6-6.500v2.500l-6 6.500L4 16z" fill="#2a4fb8"/><path d="M4 4.500v11.500l10.500 4.500 6-6.500V5.500" fill="none" stroke="#333" stroke-width="0.800"/><path d="M24 18.500v5.500h-5.500z" fill="#6b6b6b"/></g>
<g transform="translate(680,121)"><path d="M9.93 5.00A7.3 7.3 0 0 1 14.07 5.00" stroke="#ff0000" stroke-width="4.400" fill="none"/><path d="M13.70 4.90A7.3 7.3 0 0 1 17.30 6.98" stroke="#ff8000" stroke-width="4.400" fill="none"/><path d="M17.02 6.70A7.3 7.3 0 0 1 19.10 10.30" stroke="#ffe000" stroke-width="4.400" fill="none"/><path d="M19.00 9.93A7.3 7.3 0 0 1 19.00 14.07" stroke="#80e000" stroke-width="4.400" fill="none"/><path d="M19.10 13.70A7.3 7.3 0 0 1 17.02 17.30" stroke="#00c040" stroke-width="4.400" fill="none"/><path d="M17.30 17.02A7.3 7.3 0 0 1 13.70 19.10" stroke="#00c0a0" stroke-width="4.400" fill="none"/><path d="M14.07 19.00A7.3 7.3 0 0 1 9.93 19.00" stroke="#00a0ff" stroke-width="4.400" fill="none"/><path d="M10.30 19.10A7.3 7.3 0 0 1 6.70 17.02" stroke="#0040ff" stroke-width="4.400" fill="none"/><path d="M6.98 17.30A7.3 7.3 0 0 1 4.90 13.70" stroke="#6000ff" stroke-width="4.400" fill="none"/><path d="M5.00 14.07A7.3 7.3 0 0 1 5.00 9.93" stroke="#c000e0" stroke-width="4.400" fill="none"/><path d="M4.90 10.30A7.3 7.3 0 0 1 6.98 6.70" stroke="#ff00a0" stroke-width="4.400" fill="none"/><path d="M6.70 6.98A7.3 7.3 0 0 1 10.30 4.90" stroke="#ff0050" stroke-width="4.400" fill="none"/><circle cx="12" cy="12" r="9.600" fill="none" stroke="#222" stroke-width="0.900"/><circle cx="12" cy="12" r="5" fill="#fff" stroke="#555" stroke-width="0.600"/><path d="M24 18.500v5.500h-5.500z" fill="#6b6b6b"/></g>
<g transform="translate(708,121)"><ellipse cx="13" cy="20.0" rx="9" ry="2.500" fill="#000" fill-opacity="0.180"/><circle cx="12" cy="11.5" r="9" fill="url(#gs)"/><path d="M12 2.500v18M3 11.500q9 3.500 18 0" fill="none" stroke="#333" stroke-width="0.900"/></g>
<g transform="translate(736,121)"><rect x="1" y="1" width="22" height="22" fill="url(#pd)"/><ellipse cx="13" cy="20.0" rx="9" ry="2.500" fill="#000" fill-opacity="0.180"/><circle cx="12" cy="11.5" r="9" fill="url(#gs)"/><path d="M12 2.500v18M3 11.500q9 3.500 18 0" fill="none" stroke="#333" stroke-width="0.900"/><path d="M24 18.500v5.500h-5.500z" fill="#6b6b6b"/></g>
<g transform="translate(764,121)"><ellipse cx="13" cy="20.0" rx="9" ry="2.500" fill="#000" fill-opacity="0.180"/><circle cx="12" cy="11.5" r="9" fill="url(#gbl)"/><ellipse cx="9" cy="7.500" rx="3" ry="2" fill="#fff" fill-opacity="0.750" transform="rotate(-30 9 7.500)"/><path d="M24 18.500v5.500h-5.500z" fill="#6b6b6b"/></g>
<g transform="translate(792,121)"><path d="M11 7.500L21 1.500l-2.500 11.500z" fill="#f5a11c" stroke="#a05a00" stroke-width="0.800"/><path d="M11 7.500q3 5 7.500 5.500" fill="none" stroke="#fff2c8" stroke-width="1.500"/><path d="M24 18.500v5.500h-5.500z" fill="#6b6b6b"/></g>
<g transform="translate(820,121)"><path d="M21.8 10.5L21.8 14.5L18.6 15.0L18.4 15.4L20.3 18.0L17.5 20.8L14.9 18.9L14.5 19.1L14.0 22.3L10.0 22.3L9.5 19.1L9.1 18.9L6.5 20.8L3.7 18.0L5.6 15.4L5.4 15.0L2.2 14.5L2.2 10.5L5.4 10.0L5.6 9.6L3.7 7.0L6.5 4.2L9.1 6.1L9.5 5.9L10.0 2.7L14.0 2.7L14.5 5.9L14.9 6.1L17.5 4.2L20.3 7.0L18.4 9.6L18.6 10.0z" fill="#f6cf4a" stroke="#7a5a00" stroke-width="0.900"/><path d="M6 17.500l2-1.500M18 17.500l-2-1.500M9.500 20.500l1-2M14.500 20.500l-1-2" stroke="#e06a10" stroke-width="1.600"/><rect x="9.500" y="5" width="5" height="9.500" rx="1.500" fill="#c2c2c2" stroke="#444" stroke-width="0.900"/><ellipse cx="12" cy="5.500" rx="2.500" ry="1.200" fill="#eee" stroke="#444" stroke-width="0.600"/><path d="M24 18.500v5.500h-5.500z" fill="#6b6b6b"/></g>
<g transform="translate(848,121)"><path d="M2.500 2.500h8.500M2.500 12.500h9.500v9M19 13v8.500" stroke="#000" stroke-width="1.400" fill="none"/><path d="M4.500 4.500v6M4.500 4l-1.300 2h2.600zM4.500 11l-1.300-2h2.600zM13.500 19.500h4M13 19.500l2-1.300v2.600zM18 19.500l-2-1.300v2.600z" stroke="#000" stroke-width="0.900" fill="#000"/><circle cx="11.500" cy="2.500" r="1.300" fill="#fff" stroke="#000"/><circle cx="12" cy="12.500" r="1.300" fill="#fff" stroke="#000"/><circle cx="19" cy="12.500" r="1.300" fill="#fff" stroke="#000"/><path d="M24 18.500v5.500h-5.500z" fill="#6b6b6b"/></g>
<g transform="translate(876,121)"><circle cx="12" cy="12" r="11" fill="url(#gg)" stroke="#4d5a45" stroke-width="1.200"/><path d="M5 14l4-1 2 1.500 4-4 3-1-2 3 3 5-5-1-2 3-2-3-3 1z" fill="#3c4a36"/><path d="M9 3.500L11.500 12M12 12.500L21 7" stroke="#3c4a36" stroke-width="0.900"/></g>
<g transform="translate(904,121)"><ellipse cx="13" cy="20.5" rx="9.5" ry="2.500" fill="#000" fill-opacity="0.180"/><circle cx="12" cy="11.5" r="9.5" fill="url(#gh)"/><path d="M8.800 8.500q0-4 3.700-4t3.700 3.300q0 2-1.700 3.200t-1.500 3" fill="none" stroke="#fff" stroke-width="2.400"/><circle cx="12.800" cy="17.500" r="1.500" fill="#fff"/><path d="M24 18.500v5.500h-5.500z" fill="#6b6b6b"/></g>
<g transform="translate(3,165.0)"><path d="M7 4.500V18l3.300-3 2.200 5 2-1-2.200-4.800h4.200z" fill="#fff" stroke="#000" stroke-width="1"/></g>
<g transform="translate(31,165.0)"><circle cx="11.5" cy="12" r="1.8" fill="#fff" stroke="#000" stroke-width="0.700"/><path d="M24 19v5h-5z" fill="#6b6b6b"/></g>
<g transform="translate(3,193.1)"><path d="M4.500 20.500L9.500 7l9.500 10.500" stroke="#333" stroke-width="0.900"/><circle cx="4.5" cy="20.5" r="1" fill="#fff" stroke="#000" stroke-width="0.700"/><circle cx="9.5" cy="7" r="1" fill="#fff" stroke="#000" stroke-width="0.700"/><circle cx="19.5" cy="17.5" r="1" fill="#fff" stroke="#000" stroke-width="0.700"/><path d="M24 19v5h-5z" fill="#6b6b6b"/></g>
<g transform="translate(31,193.1)"><path d="M4 6.500Q17 1 17 11T4 18.500" stroke="#222" stroke-width="0.900"/><rect x="2.5" y="5.0" width="3.0" height="3.0" fill="#fff" stroke="#000" stroke-width="0.900"/><rect x="16.5" y="3.0" width="3.0" height="3.0" fill="#fff" stroke="#000" stroke-width="0.900"/><rect x="2.5" y="17.0" width="3.0" height="3.0" fill="#fff" stroke="#000" stroke-width="0.900"/><rect x="18.0" y="19.0" width="3.0" height="3.0" fill="#fff" stroke="#000" stroke-width="0.900"/><path d="M24 19v5h-5z" fill="#6b6b6b"/></g>
<g transform="translate(3,221.2)"><circle cx="12" cy="12" r="9.500" stroke="#555" stroke-width="0.900"/><path d="M12 12l6.500-6.500" stroke="#222" stroke-width="1"/><circle cx="12" cy="12" r="1.2" fill="#fff" stroke="#000" stroke-width="0.700"/><circle cx="18.5" cy="5.5" r="1.2" fill="#fff" stroke="#000" stroke-width="0.700"/><path d="M24 19v5h-5z" fill="#6b6b6b"/></g>
<g transform="translate(31,221.2)"><ellipse cx="12" cy="12" rx="10" ry="6.500" stroke="#555" stroke-width="0.900"/><rect x="10.5" y="4.0" width="3.0" height="3.0" fill="#fff" stroke="#000" stroke-width="0.900"/><rect x="10.5" y="10.5" width="3.0" height="3.0" fill="#fff" stroke="#000" stroke-width="0.900"/><rect x="19.5" y="10.5" width="3.0" height="3.0" fill="#fff" stroke="#000" stroke-width="0.900"/><path d="M24 19v5h-5z" fill="#6b6b6b"/></g>
<g transform="translate(3,249.3)"><path d="M5.500 3.500Q17 4 20.500 12.500L5.500 20.500z" stroke="#444" stroke-width="0.900"/><circle cx="5.5" cy="3.5" r="1" fill="#fff" stroke="#000" stroke-width="0.700"/><circle cx="20.5" cy="12.5" r="1" fill="#fff" stroke="#000" stroke-width="0.700"/><circle cx="5.5" cy="20.5" r="1" fill="#fff" stroke="#000" stroke-width="0.700"/><path d="M24 19v5h-5z" fill="#6b6b6b"/></g>
<g transform="translate(31,249.3)"><rect x="3.500" y="6.500" width="17" height="11" stroke="#222" stroke-width="1"/><circle cx="20.5" cy="6.5" r="1" fill="#fff" stroke="#000" stroke-width="0.700"/><circle cx="3.5" cy="17.5" r="1" fill="#fff" stroke="#000" stroke-width="0.700"/><path d="M24 19v5h-5z" fill="#6b6b6b"/></g>
<g transform="translate(3,277.4)"><path d="M3.500 12L8 4.500h8.500L21 12l-4.500 7.500H8z" stroke="#444" stroke-width="0.900"/><path d="M12 12h9" stroke="#444" stroke-width="0.900"/><circle cx="12" cy="12" r="1" fill="#fff" stroke="#000" stroke-width="0.700"/><circle cx="21" cy="12" r="1" fill="#fff" stroke="#000" stroke-width="0.700"/><path d="M24 19v5h-5z" fill="#6b6b6b"/></g>
<g transform="translate(31,277.4)"><path d="M5 6h15v14" stroke="#bbb" stroke-width="0.700"/><path d="M4 5.500h6Q20 6.500 20 16v4.500" stroke="#000" stroke-width="1.800"/><rect x="2.5" y="4.0" width="3.0" height="3.0" fill="#fff" stroke="#000" stroke-width="0.900"/><rect x="18.5" y="19.0" width="3.0" height="3.0" fill="#fff" stroke="#000" stroke-width="0.900"/><path d="M24 19v5h-5z" fill="#6b6b6b"/></g>
<g transform="translate(3,305.5)"><path d="M7.500 4L19 3.500 15.500 19.500 4 14.500z" fill="#6f88ee" stroke="#223" stroke-width="0.700"/><path d="M12.500 3.800L9.500 17M6 9l11.500 2" stroke="#223" stroke-width="0.600"/><rect x="6.0" y="2.5" width="3.0" height="3.0" fill="#fff" stroke="#000" stroke-width="0.900"/><rect x="17.5" y="2.0" width="3.0" height="3.0" fill="#fff" stroke="#000" stroke-width="0.900"/><rect x="2.5" y="13.0" width="3.0" height="3.0" fill="#fff" stroke="#000" stroke-width="0.900"/><rect x="14.0" y="18.0" width="3.0" height="3.0" fill="#fff" stroke="#000" stroke-width="0.900"/><path d="M24 19v5h-5z" fill="#6b6b6b"/></g>
<g transform="translate(31,305.5)"><path d="M3.500 6.500l6.500-3.500q9 2 8.500 10.500l0.500 4.500-6 3.500-1-6.500q0-6-8.500-8.500z" fill="url(#gbs)" stroke="#222" stroke-width="0.800"/><path d="M3.500 6.500l6.500-3.500 4 2.500-5 3.500zM13 21.500l6-3.500-0.500-4.500-6.500 3z" fill="#fff" stroke="#222" stroke-width="0.700"/><path d="M24 19v5h-5z" fill="#6b6b6b"/></g>
<g transform="translate(3,333.6)"><path d="M4 8l8-4.500L20 7v10l-8 5-8-3z" fill="#6f88ee" stroke="#1a2060" stroke-width="0.600"/><path d="M4 8l8 3 8-4" fill="#aebcff"/><path d="M4 8l8-4.500L20 7l-8 4z" fill="#aebcff"/><path d="M12 11l8-4v10l-8 5z" fill="#2f3fa8"/><path d="M24 19v5h-5z" fill="#6b6b6b"/></g>
<g transform="translate(31,333.6)"><circle cx="16" cy="8" r="6.500" fill="url(#gbs2)" stroke="#1a2060" stroke-width="0.600"/><circle cx="9" cy="15" r="6.500" fill="url(#gbs2)" stroke="#1a2060" stroke-width="0.600"/><path d="M16 1.500v13M9.500 8q6.500 2.500 13 0M9 8.500v13M2.500 15q6.500 2.500 13 0" stroke="#dfe6ff" stroke-width="0.600"/><path d="M24 19v5h-5z" fill="#6b6b6b"/></g>
<g transform="translate(3,361.7)"><ellipse cx="12" cy="4.500" rx="5.500" ry="2.200" stroke="#222" stroke-width="0.800"/><path d="M1.500 10q10.500 5 21 0v9.500q-10.500 5-21 0z" fill="#6f88ee" stroke="#1a2060" stroke-width="0.700"/><path d="M1.500 10q10.500 5 21 0v2.500q-10.500 5-21 0z" fill="#2f3fa8"/><ellipse cx="12" cy="18" rx="5.500" ry="2.200" stroke="#fff" stroke-width="1.500"/><path d="M24 19v5h-5z" fill="#6b6b6b"/></g>
<g transform="translate(31,361.7)"><path d="M7.500 4.500q6 3 13-1.500l-3 12q-5 5-13.500 4z" fill="#6f88ee" stroke="#1a2060" stroke-width="0.700"/><path d="M12 6l-3.500 13M16 5l-3.500 12.500M6.500 10.500q6 2.500 12.500-1.500M5 15q6 2 12-2.500" stroke="#1a2060" stroke-width="0.600"/><path d="M24 19v5h-5z" fill="#6b6b6b"/></g>
<g transform="translate(3,389.8)"><path d="M3 6.500h3.500q-1.500-3 1-3.500t2 3.500h3.500v3.500q3-1.500 3.500 1t-3.500 2v3.500H9.500q1.500 3-1 3.500t-2-3.500H3v-3.500q3 1.500 3.500-1T3 10z" fill="#f5a300" stroke="#8a5a00" stroke-width="0.600" transform="translate(0,-1.500)"/><path d="M11 12.500h3q-1.300-2.500 0.800-3t1.700 3h3v3q2.500-1.300 3 0.800t-3 1.700v3h-3q1.300 2.500-0.800 3t-1.700-3h-3v-3q2.500 1.300 3-0.800t-3-1.700z" fill="#fff" stroke="#666" stroke-width="0.600" transform="translate(-1,-2)"/></g>
<g transform="translate(31,389.8)"><path d="M2.500 21.500L5 5l5 9.500L20 1.500l-4 13.500 6.500 0.500-8 3.500 3 3.500z" fill="url(#gor)"/></g>
<g transform="translate(3,417.9)"><rect x="1.500" y="10.500" width="10" height="4.500" fill="#fff" stroke="#000" stroke-width="1"/><path d="M12 11l4.500-9h3l-4.500 9z" fill="#2f3fa8"/><path d="M11.500 15l3-3 5.500 5.500-3 3z" fill="#fff" stroke="#555" stroke-width="0.800"/></g>
<g transform="translate(31,417.9)"><rect x="2.500" y="10.500" width="19" height="4.500" fill="#fff" stroke="#000" stroke-width="1"/><path d="M11 10.500l2-9h4l-3 9z" fill="#2f3fa8"/><path d="M12.500 10.500v4.500" stroke="#000" stroke-width="1.200"/></g>
<g transform="translate(3,446.0)"><circle cx="12" cy="7.500" r="4.800" fill="#aebcff" stroke="#000" stroke-width="1.400"/><circle cx="8.500" cy="13.500" r="4.800" fill="#fff" stroke="#000" stroke-width="1.400"/><circle cx="15.500" cy="13.500" r="4.800" fill="#1a1a80" stroke="#000" stroke-width="1.400"/><path d="M24 19v5h-5z" fill="#6b6b6b"/></g>
<g transform="translate(31,446.0)"><circle cx="12" cy="6" r="3.500" fill="#aebcff" stroke="#556" stroke-width="0.600"/><circle cx="6.500" cy="14.500" r="3.500" fill="#fff" stroke="#000" stroke-width="0.900"/><circle cx="17" cy="14.500" r="3.500" fill="#1a1a80"/></g>
<g transform="translate(3,474.1)"><path d="M3 5.500Q16 6 17 20" stroke="#000" stroke-width="1.300"/><rect x="5.7" y="4.2" width="2.6" height="2.6" fill="#fff" stroke="#000" stroke-width="0.900"/><circle cx="16.5" cy="14.5" r="1.4" fill="#fff" stroke="#000" stroke-width="0.700"/></g>
<g transform="translate(31,474.1)"><path d="M3 7Q16 8 17.500 20" stroke="#000" stroke-width="1.800"/><path d="M3.500 2.500H10L21 13v8.500" stroke="#000" stroke-width="1" stroke-dasharray="1 1.200"/><rect x="9.2" y="1.2" width="2.6" height="2.6" fill="#fff" stroke="#000" stroke-width="0.900"/><rect x="19.7" y="11.7" width="2.6" height="2.6" fill="#fff" stroke="#000" stroke-width="0.900"/><path d="M24 19v5h-5z" fill="#6b6b6b"/></g>
<g transform="translate(3,502.2)"><path d="M3.500 3h17v5.500h-2l-1-2.500h-3v12l2.500 1v2h-10v-2l2.500-1V6h-3l-1 2.500h-2z" fill="#6f88ee" stroke="#2f3fa8" stroke-width="1"/><path d="M14.500 6v12l2.500 1v2" stroke="#2f3fa8" stroke-width="1.300"/></g>
<g transform="translate(31,502.2)"><rect x="3.500" y="13.500" width="6" height="6" fill="#f2f2f2" stroke="#000" stroke-width="0.900"/><rect x="15.500" y="2.500" width="5.500" height="5.500" fill="#6f88ee" stroke="#000" stroke-width="0.800"/><path d="M9.500 13.500l5-5M14.500 8.500h-3M14.500 8.500v3" stroke="#000" stroke-width="0.900"/><path d="M24 19v5h-5z" fill="#6b6b6b"/></g>
<g transform="translate(3,530.3)"><rect x="4" y="3" width="5.500" height="5.500" fill="#6f88ee" stroke="#000" stroke-width="0.800"/><rect x="11.500" y="7.500" width="5.500" height="5.500" fill="#6f88ee" stroke="#000" stroke-width="0.800"/><rect x="15.500" y="5.500" width="5.500" height="5.500" fill="#6f88ee" stroke="#000" stroke-width="0.800"/><rect x="3.500" y="14.500" width="5.500" height="5.500" fill="#f2f2f2" stroke="#000" stroke-width="0.800"/><rect x="15.500" y="16.500" width="5.500" height="5.500" fill="#6f88ee" stroke="#000" stroke-width="0.800"/></g>
<g transform="translate(31,530.3)"><rect x="2" y="3.500" width="4.500" height="13" fill="#fff" stroke="#000" stroke-width="1"/><path d="M9 19.500l9.500-10 3 3-9.500 10z" fill="#6f88ee" stroke="#000" stroke-width="0.800"/><path d="M7 5.500h7.500v3.500M14.500 9l-1.500-1.500M14.500 9l1.500-1.500" stroke="#000" stroke-width="0.900"/></g>
<g transform="translate(3,558.4)"><path d="M3 8l9-5 9 4v10l-9 5.500L3 18z" fill="#6f88ee" stroke="#1a2060" stroke-width="0.600"/><path d="M3 8l9-5 9 4-9 4.500z" fill="#aebcff"/><path d="M12 11.500L21 7v10l-9 5.500z" fill="#2f3fa8"/><path d="M9 15.500l5-2.500v6l-5 3z" fill="#fff" stroke="#222" stroke-width="0.600"/><path d="M3 13.500l6 2v6l-6-3.500z" fill="#fff" fill-opacity="0.150"/><path d="M24 19v5h-5z" fill="#6b6b6b"/></g>
<g transform="translate(31,558.4)"><path d="M2 20l5-3.500h15l-5 3.500z" fill="#6f88ee" stroke="#1a2060" stroke-width="0.600"/><path d="M7.500 18V8M12 18V8M16.500 18V8" stroke="#fff" stroke-width="1.800"/><path d="M5.500 9.500l2-4 2 4zM10 9.500l2-4 2 4zM14.500 9.500l2-4 2 4z" fill="#fff"/><path d="M24 19v5h-5z" fill="#6b6b6b"/></g>
<g transform="translate(3,586.5)"><rect x="3" y="2.5" width="4" height="4" fill="#6f88ee" stroke="#000" stroke-width="0.800"/><rect x="3" y="9.5" width="4" height="4" fill="#6f88ee" stroke="#000" stroke-width="0.800"/><rect x="3" y="16.5" width="4" height="4" fill="#f2f2f2" stroke="#000" stroke-width="0.800"/><rect x="10" y="2.5" width="4" height="4" fill="#6f88ee" stroke="#000" stroke-width="0.800"/><rect x="10" y="9.5" width="4" height="4" fill="#6f88ee" stroke="#000" stroke-width="0.800"/><rect x="10" y="16.5" width="4" height="4" fill="#6f88ee" stroke="#000" stroke-width="0.800"/><rect x="17" y="2.5" width="4" height="4" fill="#6f88ee" stroke="#000" stroke-width="0.800"/><rect x="17" y="9.5" width="4" height="4" fill="#6f88ee" stroke="#000" stroke-width="0.800"/><rect x="17" y="16.5" width="4" height="4" fill="#6f88ee" stroke="#000" stroke-width="0.800"/><path d="M24 19v5h-5z" fill="#6b6b6b"/></g>
<g transform="translate(31,586.5)"><rect x="8" y="2.500" width="8" height="4.500" fill="#f4f4f4" stroke="#000" stroke-width="1"/><rect x="9.500" y="9" width="5" height="4" fill="#f4f4f4" stroke="#000" stroke-width="1"/><rect x="8" y="15" width="8" height="5.500" fill="#f4f4f4" stroke="#000" stroke-width="1"/><path d="M12 0.500v22" stroke="#d01818" stroke-width="1.600"/><path d="M24 19v5h-5z" fill="#6b6b6b"/></g>
<g transform="translate(3,614.6)"><path d="M3 6l5-3 1 13-4 3.500z" fill="#eee" stroke="#222" stroke-width="0.800"/><path d="M9 4l3-2 2 3.500-3 9z" fill="#ddd" stroke="#222" stroke-width="0.700"/><path d="M13 5.500l7-3.500q1.500 8-3.500 18.500l-7-3.500q4-5 3.500-11.500z" fill="#6f88ee" stroke="#1a2060" stroke-width="0.700"/><path d="M13 5.500l3 1.500q0 7-3 13" stroke="#dfe6ff" stroke-width="0.600"/><path d="M24 19v5h-5z" fill="#6b6b6b"/></g>
<g transform="translate(31,614.6)"><path d="M4 13.500l2.500-2 3.500 5Q14 9 21.500 2.500 15 11 10.500 21.500z" fill="#000"/><path d="M24 19v5h-5z" fill="#6b6b6b"/></g>
<g transform="translate(3,642.7)"><path d="M3 8l6-3 6 2.500v8l-6 3.500-6-2.500z" fill="url(#ggr)" stroke="#444" stroke-width="0.600"/><path d="M3 8l6 2.500 6-3M9 10.500V19" stroke="#666" stroke-width="0.600"/><path d="M16 6.500l6 12q-1 3-6.500 3t-5.500-3z" fill="url(#ggr)" stroke="#444" stroke-width="0.600"/><path d="M24 19v5h-5z" fill="#6b6b6b"/></g>
<g transform="translate(31,642.7)"><path d="M4 20L12.500 9.500 21 19l-9 3.500z" fill="#f6b13a" stroke="#7a4a00" stroke-width="0.700"/><path d="M12.500 9.500L12 22.500" stroke="#7a4a00" stroke-width="0.600"/><path d="M12.500 9.500L21 19l-9 3.500z" fill="#ffd88a"/><path d="M9 6.500l5-4.500h6.500v4l-6 0.500-3 2z" fill="#e6e6e6" stroke="#333" stroke-width="0.800"/><rect x="20.500" y="1.500" width="2" height="5.500" fill="#000"/><path d="M9.500 7l3.500-3M11 8l3.500-3" stroke="#666" stroke-width="0.700"/><path d="M24 19v5h-5z" fill="#6b6b6b"/></g>
<g transform="translate(2372,166.500) scale(0.720)"><path d="M9.93 5.00A7.3 7.3 0 0 1 14.07 5.00" stroke="#ff0000" stroke-width="4.400" fill="none"/><path d="M13.70 4.90A7.3 7.3 0 0 1 17.30 6.98" stroke="#ff8000" stroke-width="4.400" fill="none"/><path d="M17.02 6.70A7.3 7.3 0 0 1 19.10 10.30" stroke="#ffe000" stroke-width="4.400" fill="none"/><path d="M19.00 9.93A7.3 7.3 0 0 1 19.00 14.07" stroke="#80e000" stroke-width="4.400" fill="none"/><path d="M19.10 13.70A7.3 7.3 0 0 1 17.02 17.30" stroke="#00c040" stroke-width="4.400" fill="none"/><path d="M17.30 17.02A7.3 7.3 0 0 1 13.70 19.10" stroke="#00c0a0" stroke-width="4.400" fill="none"/><path d="M14.07 19.00A7.3 7.3 0 0 1 9.93 19.00" stroke="#00a0ff" stroke-width="4.400" fill="none"/><path d="M10.30 19.10A7.3 7.3 0 0 1 6.70 17.02" stroke="#0040ff" stroke-width="4.400" fill="none"/><path d="M6.98 17.30A7.3 7.3 0 0 1 4.90 13.70" stroke="#6000ff" stroke-width="4.400" fill="none"/><path d="M5.00 14.07A7.3 7.3 0 0 1 5.00 9.93" stroke="#c000e0" stroke-width="4.400" fill="none"/><path d="M4.90 10.30A7.3 7.3 0 0 1 6.98 6.70" stroke="#ff00a0" stroke-width="4.400" fill="none"/><path d="M6.70 6.98A7.3 7.3 0 0 1 10.30 4.90" stroke="#ff0050" stroke-width="4.400" fill="none"/><circle cx="12" cy="12" r="9.600" fill="none" stroke="#222" stroke-width="0.900"/><circle cx="12" cy="12" r="5" fill="#fff" stroke="#555" stroke-width="0.600"/></g>
<g transform="translate(2397,165) scale(0.800)"><path d="M4 4.500L12 3l8.500 2.500v3l-6 6.500L4 10z" fill="#f4581c"/><path d="M4 10l10.500 5 6-6.500v3l-6 6.500L4 13z" fill="#f3f3f3"/><path d="M4 13l10.500 5 6-6.500v2.500l-6 6.500L4 16z" fill="#2a4fb8"/><path d="M4 4.500v11.500l10.500 4.500 6-6.500V5.500L12 3z" fill="none" stroke="#333" stroke-width="0.900"/></g>
<circle cx="2432.500" cy="177" r="6.500" fill="url(#gbl)"/><ellipse cx="2430.500" cy="174.500" rx="2" ry="1.300" fill="#fff" fill-opacity="0.700"/><path d="M2433 171l3-3h4.500v3l-4 0.500-2 1.500z" fill="#eee" stroke="#333" stroke-width="0.700"/><rect x="2440" y="167.500" width="1.500" height="4" fill="#000"/>
<path d="M2455 180l8.500-10.500 3 2.500-8.500 10.500z" fill="#f2f2f2" stroke="#555" stroke-width="0.800"/><path d="M2463.500 169.500l1.500-2 3 2.500-1.500 2z" fill="#d04a10" stroke="#7a2a00" stroke-width="0.600"/><path d="M2455 180l-0.500 3.500 3.500-1z" fill="#8a8a8a"/>
<g transform="translate(2479,167) scale(0.720)"><path d="M3.800 19.500V6.500l1.500-1.500h5l2 2h5.500v3.500" fill="#f7d553" stroke="#5a4a00" stroke-width="1.300"/><path d="M3.800 20L7.500 10.500h16l-4 9.500z" fill="url(#gf)" stroke="#5a4a00" stroke-width="1.300" stroke-linejoin="round"/></g>
<rect x="2508.500" y="169.500" width="13" height="12" fill="#3a5ad8" stroke="#223" stroke-width="1"/><rect x="2508.500" y="169.500" width="13" height="2.500" fill="#c8c8d8" stroke="#223" stroke-width="0.600"/><circle cx="2515" cy="177" r="3.600" fill="#7a94ff"/><path d="M2513.700 176q0-1.800 1.500-1.800t1.400 1.400q0 0.900-0.800 1.300t-0.600 1.100" stroke="#fff" stroke-width="1" fill="none"/><circle cx="2515.200" cy="179.500" r="0.600" fill="#fff"/>
<path d="M2375.500 198.500l2-1 1.500-3h6l1.500 3 6 0.500v9.500l-2 1.500h-13l-2-2z" fill="#3a3a3a" stroke="#111" stroke-width="0.800"/><circle cx="2383.500" cy="204" r="4.800" fill="#555" stroke="#111" stroke-width="0.800"/><circle cx="2383.500" cy="204" r="3" fill="#1c2a24" stroke="#8a8a8a" stroke-width="0.700"/><circle cx="2382.500" cy="203" r="1" fill="#6a9a7a"/><rect x="2388.500" y="199" width="3" height="2" fill="#777"/>
<rect x="2404.500" y="191.500" width="21" height="21" fill="#d8d8d8" stroke="#6a6a6a" stroke-width="1.200"/><rect x="2407" y="194" width="16" height="15.500" fill="#fff" stroke="#38a0e0" stroke-width="1"/><rect x="2408.500" y="195.500" width="13" height="12.500" fill="#fff" stroke="#e02020" stroke-width="1"/>
<rect x="2" y="3" width="16" height="16" fill="#161616"/><path d="M5.500 3L8.500 3L10.200 8.500L13.500 11L17.800 12.300L11.500 18.800L9.800 18.200L2 11.200L4.500 8z" fill="#fff"/><path d="M5.200 3.200L3 9" stroke="#161616" stroke-width="1"/><path d="M6 10.500l3 2.500M5.500 12.500l2.500 2" stroke="#8a8a8a" stroke-width="1"/><circle cx="15.300" cy="8.100" r="1.600" stroke="#fff" stroke-width="1.300" fill="none"/><path d="M13.700 8.100Q13.700 4.400 16.700 4.400" stroke="#fff" stroke-width="1.300" fill="none"/>
</svg>
<span class="t" style="left:23px;top:5.0px;letter-spacing:-0.07px">janguset.3dm (6 MB) - Rhinoceros 6 Commercial</span>
<span class="t" style="left:7px;top:26.0px;letter-spacing:-0.34px">File</span>
<span class="t" style="left:39px;top:26.0px;letter-spacing:-0.17px">Edit</span>
<span class="t" style="left:73px;top:26.0px;letter-spacing:-0.20px">View</span>
<span class="t" style="left:112px;top:26.0px;letter-spacing:-0.20px">Curve</span>
<span class="t" style="left:157px;top:26.0px;letter-spacing:-0.34px">Surface</span>
<span class="t" style="left:210px;top:26.0px;letter-spacing:-0.14px">Solid</span>
<span class="t" style="left:250px;top:26.0px;letter-spacing:-0.09px">Mesh</span>
<span class="t" style="left:293px;top:26.0px;letter-spacing:0.03px">Dimension</span>
<span class="t" style="left:364px;top:26.0px;letter-spacing:-0.14px">Transform</span>
<span class="t" style="left:431px;top:26.0px;letter-spacing:-0.20px">Tools</span>
<span class="t" style="left:472px;top:26.0px;letter-spacing:-0.24px">Analyze</span>
<span class="t" style="left:527px;top:26.0px;letter-spacing:-0.39px">Render</span>
<span class="t" style="left:578px;top:26.0px;letter-spacing:-0.45px">Panels</span>
<span class="t" style="left:626px;top:26.0px;letter-spacing:0.08px">Help</span>
<span class="t" style="left:8px;top:58.5px;letter-spacing:-0.02px">Drag objects, tap Alt to make a duplicate</span>
<span class="t" style="left:8px;top:76.5px;letter-spacing:-0.46px;font-weight:bold">Command:</span>
<span class="t" style="left:17px;top:103.0px;letter-spacing:-0.34px">Standard</span>
<span class="t" style="left:86px;top:103.0px;letter-spacing:-0.60px">CPlanes</span>
<span class="t" style="left:149px;top:103.0px;letter-spacing:-0.39px">Set View</span>
<span class="t" style="left:213px;top:103.0px;letter-spacing:-0.19px">Display</span>
<span class="t" style="left:272px;top:103.0px;letter-spacing:-0.39px">Select</span>
<span class="t" style="left:325px;top:103.0px;letter-spacing:0.01px">Viewport Layout</span>
<span class="t" style="left:431px;top:103.0px;letter-spacing:0.09px">Visibility</span>
<span class="t" style="left:496px;top:103.0px;letter-spacing:-0.14px">Transform</span>
<span class="t" style="left:571px;top:103.0px;letter-spacing:-0.19px">Curve Tools</span>
<span class="t" style="left:652px;top:103.0px;letter-spacing:-0.19px">Surface Tools</span>
<span class="t" style="left:742px;top:103.0px;letter-spacing:-0.08px">Solid Tools</span>
<span class="t" style="left:819px;top:103.0px;letter-spacing:-0.05px">Mesh Tools</span>
<span class="t" style="left:899px;top:103.0px;letter-spacing:-0.21px">Render Tools</span>
<span class="t" style="left:988px;top:103.0px;letter-spacing:0.12px">Drafting</span>
<span class="t" style="left:1051px;top:103.0px;letter-spacing:-0.19px">New in V6</span>
<span class="t" style="left:74px;top:1337.0px;letter-spacing:-0.25px">Perspective</span>
<span class="t" style="left:148px;top:1337.0px;letter-spacing:-0.12px">Top</span>
<span class="t" style="left:183px;top:1337.0px;letter-spacing:-0.00px">Front</span>
<span class="t" style="left:226px;top:1337.0px;letter-spacing:-0.00px">Right</span>
<span class="t" style="left:25px;top:1363.0px;letter-spacing:-0.45px">End</span>
<span class="t" style="left:68px;top:1363.0px;letter-spacing:-0.25px">Near</span>
<span class="t" style="left:116px;top:1363.0px;letter-spacing:0.13px">Point</span>
<span class="t" style="left:167px;top:1363.0px;letter-spacing:0.55px">Mid</span>
<span class="t" style="left:211px;top:1363.0px;letter-spacing:-0.34px">Cen</span>
<span class="t" style="left:255px;top:1363.0px;letter-spacing:0.22px">Int</span>
<span class="t" style="left:292px;top:1363.0px;letter-spacing:-0.34px">Perp</span>
<span class="t" style="left:339px;top:1363.0px;letter-spacing:-0.45px">Tan</span>
<span class="t" style="left:381px;top:1363.0px;letter-spacing:-0.09px">Quad</span>
<span class="t" style="left:433px;top:1363.0px;letter-spacing:0.08px">Knot</span>
<span class="t" style="left:481px;top:1363.0px;letter-spacing:-0.34px">Vertex</span>
<span class="t" style="left:537px;top:1363.0px;letter-spacing:-0.05px">Project</span>
<span class="t" style="left:605px;top:1363.0px;letter-spacing:-0.29px">Disable</span>
<span class="t" style="left:7px;top:1384.0px;letter-spacing:-0.56px">CPlane</span>
<span class="t" style="left:72px;top:1384.0px;letter-spacing:-0.38px">x 10.749</span>
<span class="t" style="left:157px;top:1384.0px;letter-spacing:-0.23px">y -27.376</span>
<span class="t" style="left:252px;top:1384.0px;letter-spacing:-0.60px">z 0.000</span>
<span class="t" style="left:328px;top:1384.0px;letter-spacing:0.15px">Millimeters</span>
<span class="t" style="left:421px;top:1384.0px;letter-spacing:-0.59px">Layer 01</span>
<span class="t" style="left:577px;top:1384.0px;letter-spacing:-0.34px">Grid Snap</span>
<span class="t" style="left:642px;top:1384.0px;letter-spacing:0.20px">Ortho</span>
<span class="t" style="left:687px;top:1384.0px;letter-spacing:-0.28px">Planar</span>
<span class="t" style="left:734px;top:1384.0px;letter-spacing:-0.27px">Osnap</span>
<span class="t" style="left:855px;top:1384.0px;letter-spacing:0.04px">Gumball</span>
<span class="t" style="left:914px;top:1384.0px;letter-spacing:-0.10px">Record History</span>
<span class="t" style="left:1006px;top:1384.0px;letter-spacing:-0.11px">Filter</span>
<span class="t" style="left:1041px;top:1384.0px;letter-spacing:-0.19px">Minutes from last save: 7879</span>
<span class="t" style="left:779px;top:1384.0px;letter-spacing:-0.14px;font-weight:bold">SmartTrack</span>
<span class="t" style="left:72px;top:159.0px;letter-spacing:0.60px;color:#3c3f46">Top</span>
<span class="t" style="left:1221px;top:159.0px;letter-spacing:0.21px;color:#3c3f46">Perspective</span>
<span class="t" style="left:72px;top:749.0px;letter-spacing:0.20px;color:#000">Front</span>
<span class="t" style="left:1221px;top:749.0px;letter-spacing:0.20px;color:#3c3f46">Right</span>
<span class="t" style="left:2375px;top:225.8px;letter-spacing:0.34px;font-size:13.5px">Viewport</span>
<span class="t" style="left:2375px;top:335.8px;letter-spacing:-0.34px;font-size:13.5px">Camera</span>
<span class="t" style="left:2375px;top:508.8px;letter-spacing:-0.26px;font-size:13.5px">Target</span>
<span class="t" style="left:2375px;top:618.8px;letter-spacing:-0.03px;font-size:13.5px">Wallpaper</span>
<span class="t" style="left:2394px;top:250.0px;letter-spacing:-0.05px">Title</span>
<span class="t" style="left:2467px;top:250.0px;letter-spacing:0.20px">Front</span>
<span class="t" style="left:2394px;top:271.0px;letter-spacing:0.06px">Width</span>
<span class="t" style="left:2467px;top:271.0px;letter-spacing:-0.45px">1145</span>
<span class="t" style="left:2394px;top:292.0px;letter-spacing:0.05px">Height</span>
<span class="t" style="left:2467px;top:292.0px;letter-spacing:-0.60px">585</span>
<span class="t" style="left:2394px;top:313.0px;letter-spacing:-0.04px">Projection</span>
<span class="t" style="left:2467px;top:313.0px;letter-spacing:-0.38px">Parallel</span>
<span class="t" style="left:2394px;top:381.0px;letter-spacing:-0.09px">Rotation</span>
<span class="t" style="left:2467px;top:381.0px;letter-spacing:-0.56px">0.0</span>
<span class="t" style="left:2394px;top:402.0px;letter-spacing:-0.17px">X Location</span>
<span class="t" style="left:2467px;top:402.0px;letter-spacing:-0.60px">6.734</span>
<span class="t" style="left:2394px;top:423.0px;letter-spacing:-0.15px">Y Location</span>
<span class="t" style="left:2467px;top:423.0px;letter-spacing:-0.53px">-68.901</span>
<span class="t" style="left:2394px;top:444.0px;letter-spacing:-0.10px">Z Location</span>
<span class="t" style="left:2467px;top:444.0px;letter-spacing:-0.53px">-14.649</span>
<span class="t" style="left:2394px;top:465.0px;letter-spacing:-0.18px">Distance t...</span>
<span class="t" style="left:2467px;top:465.0px;letter-spacing:-0.60px">68.901</span>
<span class="t" style="left:2394px;top:486.0px;letter-spacing:-0.05px">Location</span>
<span class="t" style="left:2394px;top:533.0px;letter-spacing:-0.44px">X Target</span>
<span class="t" style="left:2467px;top:533.0px;letter-spacing:-0.60px">6.734</span>
<span class="t" style="left:2394px;top:554.0px;letter-spacing:-0.41px">Y Target</span>
<span class="t" style="left:2467px;top:554.0px;letter-spacing:-0.56px">0.0</span>
<span class="t" style="left:2394px;top:575.0px;letter-spacing:-0.35px">Z Target</span>
<span class="t" style="left:2467px;top:575.0px;letter-spacing:-0.53px">-14.649</span>
<span class="t" style="left:2394px;top:596.0px;letter-spacing:-0.05px">Location</span>
<span class="t" style="left:2394px;top:643.0px;letter-spacing:-0.29px">Filename</span>
<span class="t" style="left:2467px;top:643.0px;letter-spacing:0.05px">(none)</span>
<span class="t" style="left:2394px;top:664.0px;letter-spacing:-0.51px">Show</span>
<span class="t" style="left:2394px;top:685.0px;letter-spacing:-0.50px">Gray</span>
<span class="t" style="left:2394px;top:360.0px;letter-spacing:-0.01px;color:#6d6d6d">Lens Length</span>
<span class="t" style="left:2467px;top:360.0px;letter-spacing:-0.09px;color:#6d6d6d">50.0</span>
<span class="t" style="left:2490px;top:486.0px;letter-spacing:-0.38px">Place...</span>
<span class="t" style="left:2490px;top:596.0px;letter-spacing:-0.38px">Place...</span>
<span class="t" style="left:2536px;top:641.0px;letter-spacing:-0.01px">...</span>
<div style="position:absolute;left:8px;top:46px;width:400px;height:5.500px;overflow:hidden"><span class="t" style="left:0;top:-8px;letter-spacing:-0.1px">2 meshes added to selection.</span></div>
</body></html>
